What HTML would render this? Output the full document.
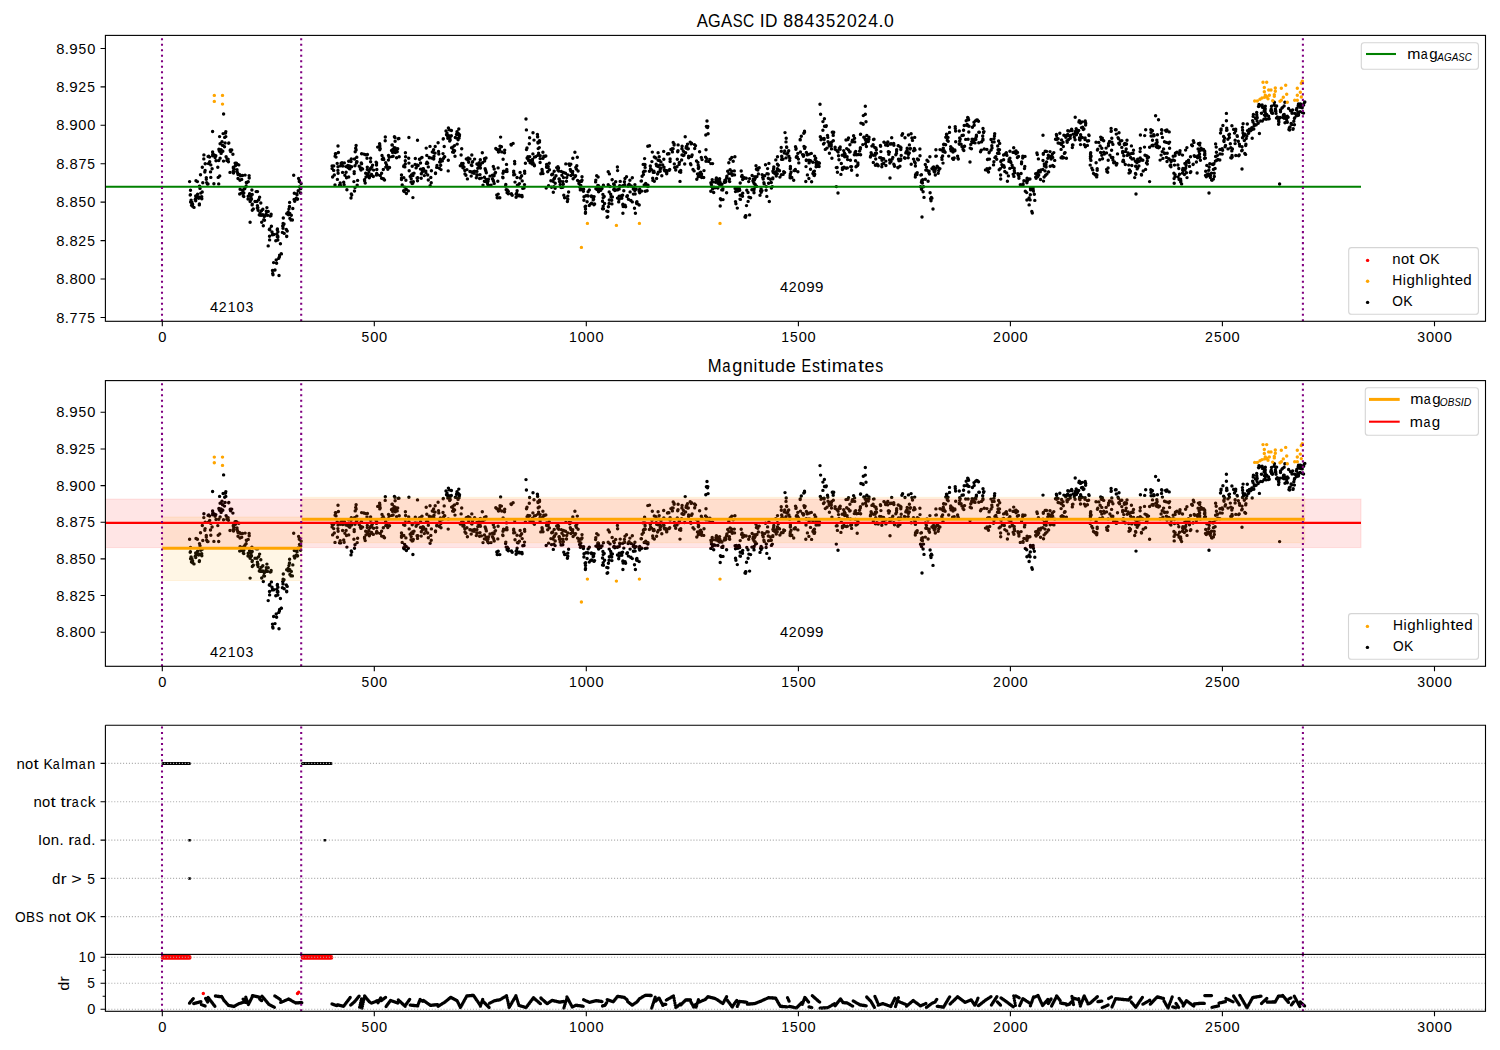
<!DOCTYPE html><html><head><meta charset="utf-8"><style>html,body{margin:0;padding:0;background:#fff;}svg{display:block;}text{font-family:"Liberation Sans",sans-serif;fill:#000;}</style></head><body>
<svg width="1500" height="1050" viewBox="0 0 1500 1050">
<rect width="1500" height="1050" fill="#fff"/>
<defs><clipPath id="c1"><rect x="105.4" y="35.4" width="1380.1" height="285.90000000000003"/></clipPath><clipPath id="c2"><rect x="105.4" y="380.6" width="1380.1" height="285.69999999999993"/></clipPath><clipPath id="c3"><rect x="105.4" y="725.3" width="1380.1" height="229.10000000000002"/></clipPath><clipPath id="c4"><rect x="105.4" y="954.4" width="1380.1" height="56.89999999999998"/></clipPath></defs>
<g font-size="17.50"><text x="696.67" y="26.90" textLength="11.20" lengthAdjust="spacingAndGlyphs">A</text><text x="708.09" y="26.90" textLength="12.65" lengthAdjust="spacingAndGlyphs">G</text><text x="720.99" y="26.90" textLength="11.20" lengthAdjust="spacingAndGlyphs">A</text><text x="732.72" y="26.90" textLength="9.91" lengthAdjust="spacingAndGlyphs">S</text><text x="743.03" y="26.90" textLength="11.18" lengthAdjust="spacingAndGlyphs">C</text><text x="759.83" y="26.90" textLength="4.90" lengthAdjust="spacingAndGlyphs">I</text><text x="764.96" y="26.90" textLength="12.46" lengthAdjust="spacingAndGlyphs">D</text><text x="783.23" y="26.90" textLength="9.88" lengthAdjust="spacingAndGlyphs">8</text><text x="793.83" y="26.90" textLength="9.88" lengthAdjust="spacingAndGlyphs">8</text><text x="804.49" y="26.90" textLength="9.77" lengthAdjust="spacingAndGlyphs">4</text><text x="815.31" y="26.90" textLength="9.39" lengthAdjust="spacingAndGlyphs">3</text><text x="825.91" y="26.90" textLength="9.22" lengthAdjust="spacingAndGlyphs">5</text><text x="836.27" y="26.90" textLength="9.42" lengthAdjust="spacingAndGlyphs">2</text><text x="846.92" y="26.90" textLength="9.77" lengthAdjust="spacingAndGlyphs">0</text><text x="857.48" y="26.90" textLength="9.42" lengthAdjust="spacingAndGlyphs">2</text><text x="868.13" y="26.90" textLength="9.77" lengthAdjust="spacingAndGlyphs">4</text><text x="878.46" y="26.90" textLength="5.01" lengthAdjust="spacingAndGlyphs">.</text><text x="884.03" y="26.90" textLength="9.77" lengthAdjust="spacingAndGlyphs">0</text></g>
<g clip-path="url(#c1)">
<path d="M189.6 181.6h.01M190.2 195.1h.01M190.4 194.7h.01M190.5 190.2h.01M190.6 202.0h.01M191.1 200.1h.01M191.5 202.8h.01M191.5 205.3h.01M191.9 202.1h.01M192.5 203.9h.01M192.6 204.5h.01M192.6 206.2h.01M194.0 207.4h.01M195.2 199.6h.01M195.7 196.0h.01M195.7 200.7h.01M195.7 198.5h.01M196.0 180.7h.01M197.3 195.9h.01M197.4 181.6h.01M197.6 194.2h.01M198.7 198.2h.01M199.3 204.9h.01M199.4 204.0h.01M199.5 186.1h.01M199.5 197.3h.01M200.0 188.4h.01M200.5 174.8h.01M200.8 193.1h.01M201.7 196.7h.01M201.8 198.8h.01M202.2 192.0h.01M202.3 167.2h.01M202.8 182.8h.01M203.8 158.9h.01M203.9 154.9h.01M204.8 172.0h.01M205.1 170.4h.01M205.2 163.8h.01M206.3 179.2h.01M206.3 177.6h.01M206.7 182.6h.01M207.4 184.0h.01M208.0 184.0h.01M208.1 156.5h.01M208.4 163.6h.01M208.7 156.1h.01M209.6 157.1h.01M209.7 161.8h.01M210.5 171.9h.01M210.8 177.4h.01M210.8 164.9h.01M212.1 168.7h.01M212.6 131.5h.01M212.6 152.0h.01M212.7 154.3h.01M212.7 155.8h.01M212.9 154.7h.01M213.3 154.8h.01M213.9 154.7h.01M213.9 183.8h.01M215.1 157.5h.01M215.8 155.7h.01M216.0 160.8h.01M217.8 167.3h.01M218.2 177.4h.01M218.7 183.9h.01M218.8 160.5h.01M218.9 149.2h.01M219.2 150.5h.01M219.5 151.2h.01M219.6 136.6h.01M219.7 176.0h.01M220.1 158.2h.01M220.1 143.8h.01M221.0 149.7h.01M221.1 153.4h.01M222.0 141.8h.01M222.6 145.4h.01M222.8 151.2h.01M223.1 133.6h.01M223.5 161.1h.01M223.6 114.0h.01M224.5 146.8h.01M224.7 137.4h.01M225.1 143.0h.01M225.5 133.0h.01M225.8 131.6h.01M225.8 136.6h.01M226.1 156.7h.01M226.9 160.6h.01M227.0 158.6h.01M228.1 159.1h.01M228.2 161.2h.01M228.4 161.7h.01M228.7 143.2h.01M228.8 142.9h.01M230.0 172.4h.01M230.2 150.4h.01M230.3 150.0h.01M230.6 151.6h.01M231.7 150.0h.01M232.9 154.2h.01M233.3 171.3h.01M233.3 167.2h.01M233.4 168.2h.01M233.5 173.0h.01M233.8 171.9h.01M233.9 169.0h.01M235.1 163.1h.01M235.4 165.8h.01M236.4 163.1h.01M237.0 169.8h.01M237.1 171.5h.01M237.7 173.2h.01M238.0 178.5h.01M238.0 174.6h.01M238.2 164.6h.01M238.8 164.9h.01M239.7 194.0h.01M239.8 174.7h.01M240.0 180.3h.01M240.1 189.3h.01M240.5 175.7h.01M241.5 193.1h.01M241.7 179.4h.01M242.5 175.5h.01M242.8 190.7h.01M243.0 189.9h.01M243.3 195.9h.01M243.8 196.6h.01M243.8 193.0h.01M244.7 188.7h.01M245.1 187.6h.01M245.1 175.1h.01M246.1 186.3h.01M246.3 182.5h.01M246.5 182.9h.01M248.0 199.1h.01M248.2 181.7h.01M248.2 196.2h.01M249.1 175.6h.01M249.2 178.0h.01M249.6 193.6h.01M249.7 195.4h.01M250.1 222.3h.01M250.1 201.6h.01M250.7 200.3h.01M251.0 196.9h.01M251.1 198.6h.01M251.5 199.1h.01M251.9 190.0h.01M252.1 204.9h.01M252.2 194.4h.01M252.3 204.1h.01M252.3 210.2h.01M252.4 209.9h.01M253.3 208.9h.01M255.0 201.5h.01M256.2 191.6h.01M256.9 201.5h.01M257.3 208.1h.01M257.4 205.6h.01M257.5 191.6h.01M257.9 207.6h.01M258.1 210.2h.01M258.7 199.8h.01M259.3 214.9h.01M259.6 197.2h.01M260.0 213.0h.01M260.2 215.3h.01M260.8 203.0h.01M261.5 210.7h.01M261.7 215.3h.01M261.7 222.2h.01M262.7 209.6h.01M262.8 214.7h.01M262.8 209.2h.01M263.3 225.8h.01M263.8 219.8h.01M264.3 216.6h.01M264.5 220.2h.01M264.8 215.9h.01M266.1 214.1h.01M266.3 211.3h.01M266.9 207.6h.01M267.5 215.2h.01M268.2 211.4h.01M268.2 245.9h.01M269.3 229.6h.01M269.5 236.3h.01M269.6 239.9h.01M269.7 229.8h.01M269.7 229.0h.01M270.3 216.0h.01M270.9 215.7h.01M271.1 214.3h.01M271.4 226.2h.01M272.0 231.9h.01M272.4 234.7h.01M272.5 270.5h.01M272.7 273.5h.01M273.0 274.7h.01M273.6 262.6h.01M273.9 234.5h.01M275.8 240.8h.01M276.2 259.9h.01M276.6 263.3h.01M276.9 233.9h.01M277.3 229.8h.01M277.3 236.8h.01M277.4 228.9h.01M277.7 236.0h.01M277.8 240.0h.01M277.9 236.9h.01M277.9 231.8h.01M278.8 258.3h.01M279.4 256.8h.01M279.6 255.1h.01M280.4 243.7h.01M281.2 253.7h.01M281.4 253.9h.01M282.4 232.4h.01M282.7 226.0h.01M283.0 228.3h.01M283.1 223.5h.01M283.2 225.5h.01M283.3 218.0h.01M284.0 224.0h.01M284.2 233.4h.01M286.3 229.5h.01M286.7 236.1h.01M286.7 236.6h.01M286.7 213.6h.01M287.2 213.9h.01M287.2 231.0h.01M288.1 212.1h.01M288.5 214.7h.01M288.9 212.9h.01M288.9 209.1h.01M289.4 207.1h.01M289.5 206.5h.01M289.6 202.4h.01M289.8 213.4h.01M289.9 218.4h.01M291.0 220.0h.01M291.3 215.3h.01M292.4 220.0h.01M292.8 208.5h.01M293.7 175.2h.01M294.1 199.4h.01M294.3 193.3h.01M294.7 200.2h.01M294.7 201.3h.01M296.1 199.0h.01M296.2 198.5h.01M296.3 198.3h.01M296.9 193.6h.01M297.0 194.8h.01M297.5 199.3h.01M297.6 199.0h.01M298.2 190.7h.01M298.6 178.5h.01M299.3 181.6h.01M299.4 180.5h.01M299.5 187.0h.01M300.6 193.0h.01M300.7 188.8h.01M301.1 183.6h.01M332.1 165.9h.01M332.1 168.6h.01M332.6 177.0h.01M333.7 165.9h.01M333.7 170.4h.01M334.3 175.0h.01M335.0 184.9h.01M335.1 156.3h.01M335.4 153.7h.01M335.8 153.7h.01M336.0 157.1h.01M337.2 163.4h.01M337.4 179.4h.01M337.9 170.4h.01M338.0 166.7h.01M338.0 146.0h.01M338.1 173.3h.01M338.4 152.5h.01M339.5 185.3h.01M340.2 182.9h.01M340.5 185.4h.01M340.7 165.8h.01M341.1 163.2h.01M341.8 164.9h.01M342.0 162.8h.01M342.6 172.4h.01M342.8 166.1h.01M343.7 182.3h.01M344.1 184.8h.01M344.3 162.9h.01M344.9 175.3h.01M346.0 166.6h.01M346.1 172.3h.01M346.5 177.8h.01M346.9 189.8h.01M347.8 165.5h.01M348.0 167.5h.01M348.7 177.0h.01M348.7 166.6h.01M348.7 161.2h.01M349.2 168.5h.01M349.6 165.9h.01M349.8 168.9h.01M350.5 160.6h.01M351.0 161.6h.01M351.3 159.0h.01M351.3 193.9h.01M351.6 166.7h.01M351.7 195.0h.01M353.9 181.6h.01M354.2 173.5h.01M354.2 171.6h.01M354.5 159.0h.01M354.5 191.0h.01M355.0 187.4h.01M355.0 165.8h.01M355.2 151.8h.01M355.7 148.2h.01M356.1 145.5h.01M356.1 149.9h.01M356.4 163.0h.01M356.7 161.8h.01M356.8 157.3h.01M357.0 161.7h.01M357.2 185.1h.01M357.6 180.4h.01M359.2 166.2h.01M360.4 167.9h.01M360.4 168.9h.01M361.0 170.1h.01M361.3 163.0h.01M361.3 163.1h.01M361.5 168.3h.01M361.6 153.7h.01M361.6 163.7h.01M362.6 168.9h.01M363.8 154.1h.01M364.5 179.6h.01M364.6 180.8h.01M365.2 183.0h.01M365.6 154.7h.01M365.7 173.3h.01M366.0 177.0h.01M367.0 158.2h.01M367.3 169.4h.01M367.3 167.1h.01M367.4 154.5h.01M367.6 174.1h.01M367.7 175.7h.01M368.9 172.3h.01M369.3 177.8h.01M370.2 175.8h.01M370.3 169.3h.01M370.6 158.2h.01M370.6 161.7h.01M370.7 168.1h.01M371.2 168.1h.01M371.4 175.2h.01M371.6 174.4h.01M371.8 166.9h.01M372.6 165.1h.01M373.3 176.5h.01M373.6 170.1h.01M376.1 162.1h.01M376.4 175.1h.01M376.5 165.0h.01M376.6 163.1h.01M376.7 173.5h.01M376.8 169.5h.01M377.5 174.7h.01M377.7 147.1h.01M379.6 143.7h.01M379.8 146.7h.01M379.8 149.7h.01M379.8 145.3h.01M380.2 148.8h.01M380.2 175.5h.01M381.6 178.3h.01M381.6 173.2h.01M382.0 155.5h.01M382.3 159.2h.01M383.2 158.0h.01M383.3 169.5h.01M383.5 178.7h.01M383.8 159.5h.01M384.1 179.7h.01M384.5 180.0h.01M385.2 140.8h.01M385.3 137.0h.01M385.7 162.8h.01M385.8 167.1h.01M386.5 164.6h.01M386.6 166.4h.01M386.9 166.2h.01M387.8 169.2h.01M388.4 160.1h.01M388.5 155.5h.01M389.2 157.3h.01M389.5 167.5h.01M391.5 150.6h.01M391.6 150.4h.01M391.9 156.6h.01M392.0 145.0h.01M392.3 144.9h.01M392.6 152.4h.01M392.8 149.4h.01M393.1 156.2h.01M393.8 149.8h.01M394.2 147.6h.01M394.4 136.7h.01M394.9 137.5h.01M395.1 141.3h.01M395.2 147.9h.01M395.3 152.6h.01M395.5 150.7h.01M396.5 149.2h.01M396.6 157.8h.01M396.8 151.0h.01M397.2 151.8h.01M397.7 148.7h.01M398.2 138.7h.01M398.9 138.5h.01M399.2 156.8h.01M401.5 179.6h.01M401.5 174.9h.01M401.5 178.1h.01M402.2 184.9h.01M403.7 166.4h.01M403.7 190.6h.01M403.7 190.9h.01M403.8 177.6h.01M403.9 165.6h.01M404.2 191.6h.01M404.7 187.1h.01M404.8 166.9h.01M405.3 163.9h.01M405.3 160.8h.01M405.4 152.7h.01M405.6 156.7h.01M405.9 180.2h.01M406.2 189.2h.01M406.4 193.5h.01M408.3 190.9h.01M408.7 158.2h.01M408.9 163.1h.01M408.9 137.5h.01M409.2 170.7h.01M410.2 176.4h.01M411.0 182.1h.01M411.2 178.7h.01M411.4 174.9h.01M412.1 183.5h.01M412.2 166.3h.01M412.8 183.2h.01M412.8 173.7h.01M412.9 175.6h.01M412.9 197.6h.01M413.3 181.8h.01M414.0 173.2h.01M415.1 164.4h.01M415.3 158.5h.01M416.1 167.9h.01M416.2 167.8h.01M417.1 164.9h.01M417.1 177.9h.01M417.5 180.7h.01M417.5 140.3h.01M417.8 177.8h.01M418.1 165.5h.01M419.4 159.3h.01M419.7 159.2h.01M420.5 169.1h.01M420.5 163.0h.01M421.2 178.2h.01M421.3 173.7h.01M421.6 157.8h.01M422.0 157.4h.01M422.3 171.9h.01M422.3 169.8h.01M422.9 168.6h.01M423.4 168.8h.01M423.8 170.2h.01M424.3 175.6h.01M425.8 171.1h.01M425.8 172.6h.01M426.2 148.1h.01M426.4 163.6h.01M426.8 155.4h.01M427.0 162.2h.01M427.7 175.0h.01M427.7 163.3h.01M428.3 166.9h.01M428.3 180.0h.01M429.3 157.8h.01M429.4 157.5h.01M430.0 146.4h.01M430.1 185.8h.01M430.8 177.5h.01M431.2 182.7h.01M431.4 170.7h.01M431.5 158.1h.01M432.3 151.9h.01M433.2 152.2h.01M433.6 149.7h.01M433.7 159.0h.01M433.7 158.4h.01M434.0 156.3h.01M435.1 153.1h.01M435.2 146.5h.01M435.5 173.0h.01M435.5 173.6h.01M436.7 167.4h.01M436.8 167.2h.01M437.0 165.4h.01M438.1 142.8h.01M438.5 151.5h.01M438.8 154.0h.01M439.4 168.2h.01M439.7 162.0h.01M440.3 161.9h.01M440.4 159.3h.01M440.7 165.2h.01M441.0 169.6h.01M442.3 160.9h.01M443.0 153.6h.01M443.2 139.1h.01M443.3 138.8h.01M443.6 158.3h.01M444.2 146.5h.01M444.3 156.8h.01M444.7 156.8h.01M446.0 130.9h.01M446.5 134.8h.01M447.0 133.3h.01M447.7 136.4h.01M447.8 138.3h.01M448.2 170.9h.01M448.3 160.2h.01M448.4 128.0h.01M448.9 135.7h.01M449.2 129.8h.01M449.7 141.1h.01M450.0 137.7h.01M450.2 140.1h.01M451.3 135.7h.01M451.4 130.5h.01M451.6 147.8h.01M452.6 152.1h.01M452.9 147.0h.01M453.5 150.1h.01M453.6 152.3h.01M454.3 150.7h.01M454.5 145.6h.01M454.6 150.8h.01M455.0 156.2h.01M455.3 137.5h.01M456.3 137.9h.01M456.5 134.4h.01M456.8 133.9h.01M457.0 131.7h.01M457.2 144.1h.01M458.1 139.8h.01M458.3 133.5h.01M458.8 129.0h.01M459.1 138.0h.01M459.4 135.9h.01M459.5 134.7h.01M460.3 165.7h.01M460.4 165.6h.01M461.1 155.0h.01M461.7 148.8h.01M461.7 163.5h.01M462.5 166.1h.01M462.9 167.8h.01M462.9 165.8h.01M463.0 166.5h.01M463.1 163.5h.01M464.0 167.1h.01M464.8 170.5h.01M465.0 173.9h.01M465.9 175.2h.01M466.3 158.9h.01M466.9 169.6h.01M467.4 159.1h.01M467.4 178.9h.01M467.8 159.2h.01M467.8 159.9h.01M468.2 158.0h.01M468.7 162.3h.01M469.9 158.9h.01M469.9 171.5h.01M470.9 171.8h.01M471.2 176.1h.01M471.3 165.0h.01M471.8 155.0h.01M471.9 165.6h.01M472.5 162.1h.01M472.6 161.6h.01M472.8 172.9h.01M473.2 171.8h.01M474.0 173.2h.01M474.5 171.2h.01M474.6 159.1h.01M476.3 177.7h.01M476.9 171.4h.01M476.9 164.0h.01M477.0 174.6h.01M477.0 175.4h.01M477.8 168.3h.01M477.9 164.7h.01M479.1 162.7h.01M479.3 163.3h.01M479.6 178.5h.01M479.8 167.0h.01M480.0 174.6h.01M480.3 159.8h.01M480.3 165.0h.01M480.4 168.0h.01M481.3 178.1h.01M482.3 152.7h.01M482.5 162.8h.01M483.0 185.1h.01M484.4 181.2h.01M484.4 177.2h.01M484.5 158.8h.01M484.6 161.1h.01M484.8 159.5h.01M485.1 168.8h.01M485.5 169.9h.01M485.9 171.2h.01M485.9 181.5h.01M486.0 157.9h.01M486.3 172.8h.01M486.5 179.5h.01M487.5 183.5h.01M487.8 184.6h.01M488.0 181.2h.01M488.4 179.2h.01M488.5 185.2h.01M490.0 176.1h.01M491.0 185.1h.01M492.4 178.8h.01M492.5 175.3h.01M493.2 180.2h.01M493.3 166.4h.01M493.4 180.9h.01M493.6 181.4h.01M494.1 175.8h.01M494.2 169.0h.01M494.2 183.4h.01M495.0 173.2h.01M495.5 172.5h.01M495.8 148.5h.01M496.8 149.5h.01M496.8 194.9h.01M497.2 197.7h.01M497.7 197.7h.01M497.8 181.2h.01M498.1 167.9h.01M498.2 194.1h.01M498.5 152.0h.01M499.5 149.5h.01M499.8 197.7h.01M500.0 146.3h.01M500.6 137.1h.01M501.4 146.8h.01M501.7 151.9h.01M502.7 177.1h.01M502.9 177.7h.01M503.0 177.7h.01M503.0 173.3h.01M503.1 159.3h.01M503.5 171.1h.01M504.5 152.7h.01M504.7 150.1h.01M505.3 171.3h.01M505.6 186.0h.01M505.8 184.5h.01M506.2 189.8h.01M506.5 164.4h.01M506.8 169.5h.01M507.0 171.5h.01M507.1 192.7h.01M507.3 189.9h.01M507.8 190.9h.01M508.3 191.4h.01M508.3 193.7h.01M511.0 144.5h.01M511.3 145.1h.01M511.4 193.8h.01M511.6 194.4h.01M512.2 195.3h.01M513.1 143.4h.01M513.7 171.1h.01M513.7 174.9h.01M513.7 172.5h.01M514.6 161.4h.01M514.7 163.8h.01M514.7 174.6h.01M515.0 182.1h.01M516.1 194.2h.01M516.1 197.3h.01M516.7 193.3h.01M517.0 177.5h.01M517.1 190.8h.01M517.4 185.1h.01M518.1 185.4h.01M518.9 195.7h.01M519.4 195.9h.01M519.4 195.2h.01M519.4 183.6h.01M520.1 172.4h.01M520.3 178.0h.01M521.6 176.0h.01M521.6 175.7h.01M521.9 195.5h.01M522.1 196.8h.01M522.2 180.9h.01M522.8 188.4h.01M524.0 188.1h.01M524.5 184.6h.01M524.6 171.2h.01M524.7 173.2h.01M525.4 163.3h.01M526.4 129.9h.01M526.5 149.6h.01M527.0 147.9h.01M527.1 158.0h.01M527.5 158.6h.01M527.9 156.7h.01M528.5 160.4h.01M529.3 143.7h.01M529.6 137.8h.01M529.7 156.8h.01M529.7 160.5h.01M530.1 162.8h.01M532.2 164.0h.01M532.2 164.0h.01M532.3 160.8h.01M532.5 159.4h.01M532.9 153.9h.01M533.0 162.7h.01M533.0 132.8h.01M534.0 140.1h.01M534.2 164.6h.01M534.4 165.7h.01M534.5 157.1h.01M535.6 156.8h.01M537.4 134.4h.01M537.6 136.4h.01M537.6 136.9h.01M537.9 155.2h.01M537.9 142.2h.01M538.0 143.1h.01M538.2 148.6h.01M538.6 153.1h.01M539.3 147.6h.01M539.5 140.6h.01M539.5 142.0h.01M540.1 162.5h.01M540.1 158.6h.01M540.2 155.7h.01M540.8 173.8h.01M542.0 169.5h.01M542.2 170.1h.01M542.2 171.7h.01M542.9 152.3h.01M542.9 158.4h.01M543.0 173.6h.01M543.8 156.3h.01M544.6 156.5h.01M545.8 156.0h.01M546.2 188.1h.01M546.6 167.3h.01M546.6 166.5h.01M546.6 164.5h.01M547.4 166.9h.01M547.7 171.7h.01M548.0 167.6h.01M548.2 166.4h.01M548.6 185.6h.01M549.2 163.3h.01M549.4 169.7h.01M550.9 180.8h.01M551.5 187.2h.01M551.7 174.7h.01M552.2 174.3h.01M552.7 174.3h.01M553.0 181.3h.01M553.3 192.2h.01M553.8 179.1h.01M553.9 186.8h.01M554.2 171.2h.01M554.3 178.8h.01M554.6 177.7h.01M555.1 188.2h.01M555.2 183.3h.01M556.0 175.8h.01M556.7 167.6h.01M557.8 170.0h.01M557.9 166.7h.01M558.1 170.1h.01M558.5 168.0h.01M558.7 171.0h.01M559.0 178.9h.01M559.3 178.9h.01M559.5 181.6h.01M560.2 184.5h.01M560.4 181.2h.01M561.1 187.6h.01M561.3 171.4h.01M561.9 175.2h.01M562.8 187.3h.01M563.0 181.6h.01M563.3 184.2h.01M563.5 177.6h.01M563.5 172.4h.01M563.8 195.3h.01M564.6 197.7h.01M565.0 197.6h.01M565.5 173.2h.01M565.8 163.9h.01M566.5 181.3h.01M566.7 177.6h.01M567.4 201.5h.01M567.8 199.3h.01M567.8 174.9h.01M567.8 196.1h.01M568.6 192.0h.01M569.1 164.0h.01M569.7 165.4h.01M570.3 169.5h.01M570.8 171.1h.01M570.8 164.2h.01M570.9 171.3h.01M571.0 175.5h.01M572.4 172.9h.01M572.7 171.5h.01M572.7 174.3h.01M572.8 158.2h.01M573.1 178.7h.01M574.9 152.2h.01M574.9 176.1h.01M575.0 176.8h.01M575.1 176.6h.01M575.6 175.7h.01M575.8 167.4h.01M576.3 169.0h.01M576.8 165.8h.01M577.3 157.3h.01M577.6 180.4h.01M578.1 171.0h.01M578.8 181.5h.01M578.9 183.6h.01M579.6 187.0h.01M580.1 181.4h.01M580.3 189.9h.01M580.8 185.4h.01M581.1 189.0h.01M581.4 181.4h.01M582.0 180.3h.01M582.0 176.7h.01M583.0 190.2h.01M583.4 191.3h.01M583.6 189.3h.01M583.9 200.2h.01M584.0 196.8h.01M585.1 206.7h.01M585.4 213.3h.01M585.5 209.0h.01M585.5 212.2h.01M585.6 206.2h.01M586.0 195.7h.01M587.1 201.7h.01M587.7 195.6h.01M588.1 191.7h.01M588.1 196.0h.01M589.3 189.9h.01M589.3 205.5h.01M590.4 204.1h.01M591.4 195.9h.01M591.5 203.3h.01M591.6 196.7h.01M592.5 196.5h.01M592.5 196.8h.01M593.2 199.9h.01M593.6 199.2h.01M593.7 204.3h.01M593.9 204.8h.01M594.1 196.6h.01M594.6 204.0h.01M595.6 181.9h.01M595.8 180.1h.01M595.9 188.8h.01M596.7 175.7h.01M597.0 189.5h.01M597.8 186.7h.01M597.8 185.5h.01M597.9 186.3h.01M598.1 177.0h.01M598.5 185.8h.01M598.6 191.8h.01M599.3 188.4h.01M600.8 190.3h.01M602.0 188.5h.01M602.0 188.6h.01M602.5 208.7h.01M602.5 201.2h.01M602.9 194.4h.01M603.2 197.7h.01M603.2 206.1h.01M603.4 208.8h.01M603.4 185.3h.01M604.2 196.5h.01M604.6 203.5h.01M606.8 211.1h.01M607.1 217.3h.01M607.7 216.7h.01M607.9 211.5h.01M608.2 184.7h.01M608.2 171.8h.01M608.4 206.8h.01M609.1 203.5h.01M609.2 191.9h.01M609.3 200.0h.01M609.4 173.9h.01M610.0 186.5h.01M610.7 194.3h.01M611.1 196.9h.01M611.7 200.2h.01M611.9 203.9h.01M612.1 179.8h.01M612.2 179.6h.01M612.4 196.9h.01M613.6 183.9h.01M613.7 189.6h.01M614.2 188.8h.01M614.3 185.0h.01M614.8 190.5h.01M615.7 181.8h.01M617.3 189.7h.01M617.4 167.0h.01M617.5 189.9h.01M617.5 198.1h.01M617.6 170.6h.01M618.7 201.9h.01M619.1 199.4h.01M619.2 196.2h.01M619.2 189.1h.01M619.7 185.8h.01M619.9 186.5h.01M620.2 181.4h.01M621.0 196.0h.01M621.8 198.3h.01M622.6 195.2h.01M622.8 185.7h.01M622.8 204.8h.01M622.9 204.3h.01M622.9 213.2h.01M623.2 206.5h.01M623.8 190.8h.01M624.4 181.7h.01M624.7 184.8h.01M625.0 178.5h.01M625.1 205.3h.01M625.2 206.1h.01M625.6 206.7h.01M626.5 176.8h.01M626.8 196.5h.01M627.4 195.7h.01M628.1 186.1h.01M628.4 199.3h.01M628.5 185.3h.01M629.1 184.3h.01M629.9 180.3h.01M630.1 191.9h.01M630.8 200.6h.01M630.9 200.5h.01M631.2 186.0h.01M632.3 177.8h.01M632.3 201.9h.01M633.3 189.1h.01M633.4 194.1h.01M633.7 187.6h.01M634.5 208.2h.01M634.8 190.5h.01M634.9 184.8h.01M635.1 194.0h.01M635.4 213.2h.01M636.2 189.3h.01M636.5 202.4h.01M636.7 203.6h.01M636.9 201.7h.01M637.7 203.9h.01M639.2 205.0h.01M639.2 191.3h.01M639.4 190.8h.01M639.7 192.8h.01M639.7 189.2h.01M641.1 181.1h.01M641.4 181.0h.01M641.8 191.1h.01M642.1 176.3h.01M643.2 164.4h.01M643.4 174.6h.01M643.4 172.1h.01M644.1 171.1h.01M644.2 185.0h.01M644.6 158.6h.01M644.8 164.5h.01M645.0 164.7h.01M645.1 167.4h.01M645.2 171.1h.01M645.3 191.2h.01M645.7 183.5h.01M646.5 185.5h.01M647.1 190.8h.01M647.7 185.2h.01M647.8 146.3h.01M647.9 186.6h.01M648.0 185.2h.01M649.4 171.3h.01M649.5 145.8h.01M650.3 166.0h.01M650.6 168.8h.01M651.5 169.8h.01M651.9 161.6h.01M652.3 152.1h.01M652.7 178.2h.01M652.9 180.4h.01M653.3 172.4h.01M653.9 171.3h.01M654.2 172.4h.01M654.3 181.3h.01M654.3 157.0h.01M655.8 158.0h.01M656.2 164.3h.01M656.6 165.8h.01M656.6 178.5h.01M657.6 174.0h.01M658.0 166.4h.01M658.1 152.7h.01M658.1 160.2h.01M658.3 172.3h.01M659.2 156.8h.01M659.5 160.4h.01M659.6 165.1h.01M660.2 171.3h.01M660.2 169.0h.01M660.9 168.2h.01M660.9 168.3h.01M660.9 161.9h.01M661.8 175.8h.01M662.7 165.0h.01M663.7 151.4h.01M663.8 159.3h.01M664.0 167.1h.01M664.3 170.0h.01M664.6 170.7h.01M665.1 170.3h.01M666.3 172.1h.01M666.5 172.3h.01M666.7 173.8h.01M666.7 170.7h.01M666.8 172.8h.01M667.5 154.0h.01M668.3 153.7h.01M668.9 153.7h.01M669.1 170.3h.01M669.3 170.3h.01M669.7 169.5h.01M670.1 161.5h.01M670.1 158.9h.01M670.9 149.4h.01M672.1 148.7h.01M672.4 151.9h.01M672.4 148.9h.01M673.1 148.7h.01M673.2 142.4h.01M674.1 145.0h.01M674.1 144.0h.01M674.3 163.9h.01M674.7 167.5h.01M675.7 170.0h.01M677.0 166.7h.01M677.3 159.2h.01M677.7 151.7h.01M677.8 151.0h.01M678.0 150.7h.01M678.1 144.9h.01M679.1 164.4h.01M679.2 162.6h.01M679.4 162.5h.01M679.5 171.7h.01M680.0 181.4h.01M680.4 171.2h.01M680.7 172.2h.01M680.7 170.4h.01M681.6 160.0h.01M681.9 148.8h.01M682.0 154.9h.01M682.1 146.2h.01M682.7 154.9h.01M683.3 155.6h.01M683.4 151.3h.01M683.9 155.2h.01M684.7 164.0h.01M685.2 136.8h.01M685.6 152.8h.01M686.1 148.1h.01M686.3 147.0h.01M686.4 146.5h.01M686.8 146.4h.01M687.5 144.1h.01M687.6 148.8h.01M688.3 148.8h.01M688.6 156.1h.01M688.6 157.7h.01M688.7 157.7h.01M690.2 142.1h.01M690.5 163.7h.01M690.9 164.7h.01M691.2 143.9h.01M691.3 143.7h.01M691.5 143.2h.01M691.6 156.5h.01M692.1 155.0h.01M693.0 169.4h.01M694.1 170.9h.01M694.5 144.6h.01M694.7 148.5h.01M695.5 145.7h.01M696.5 161.0h.01M696.8 179.2h.01M697.5 173.9h.01M697.9 162.4h.01M698.2 165.3h.01M698.3 176.8h.01M698.3 168.2h.01M698.4 168.5h.01M698.7 167.3h.01M699.6 151.8h.01M699.8 175.5h.01M700.0 172.7h.01M700.1 174.8h.01M700.3 176.2h.01M700.6 173.2h.01M700.7 172.1h.01M701.3 157.4h.01M701.4 175.1h.01M701.5 173.9h.01M701.7 177.5h.01M702.0 159.6h.01M703.7 177.5h.01M704.0 170.6h.01M705.5 157.1h.01M705.8 135.0h.01M706.0 161.2h.01M706.0 149.7h.01M706.4 126.4h.01M706.6 126.9h.01M706.7 158.6h.01M707.5 127.5h.01M707.8 126.4h.01M708.1 133.7h.01M708.5 161.4h.01M709.9 159.4h.01M710.8 163.6h.01M710.8 191.2h.01M710.9 182.7h.01M711.3 184.6h.01M711.5 186.4h.01M712.1 182.3h.01M712.2 179.8h.01M712.6 188.9h.01M712.6 163.6h.01M712.7 182.1h.01M713.7 192.5h.01M713.9 187.3h.01M715.0 187.8h.01M715.6 182.3h.01M715.9 179.8h.01M716.1 181.7h.01M716.4 177.9h.01M717.3 179.6h.01M717.8 188.0h.01M718.0 183.3h.01M718.2 182.5h.01M719.5 184.4h.01M719.6 178.8h.01M719.8 181.5h.01M720.1 182.5h.01M720.2 206.0h.01M720.4 198.8h.01M721.0 199.8h.01M721.8 189.9h.01M721.9 184.4h.01M722.7 190.1h.01M722.9 188.7h.01M723.0 199.6h.01M724.3 182.3h.01M724.9 180.2h.01M725.0 182.2h.01M725.4 180.6h.01M725.6 181.9h.01M726.5 178.2h.01M726.6 192.7h.01M726.8 177.1h.01M726.9 176.1h.01M727.7 171.2h.01M728.8 162.7h.01M728.9 173.6h.01M729.2 181.0h.01M729.4 178.9h.01M729.7 181.6h.01M730.1 169.7h.01M730.2 159.2h.01M730.4 159.1h.01M731.1 173.4h.01M731.7 171.1h.01M731.8 157.4h.01M732.2 175.2h.01M732.2 174.2h.01M733.2 161.2h.01M734.3 170.9h.01M734.5 174.9h.01M734.9 156.8h.01M735.1 188.4h.01M735.5 191.6h.01M735.5 201.6h.01M735.9 203.7h.01M736.3 188.0h.01M736.4 189.6h.01M737.3 208.1h.01M737.8 191.1h.01M737.9 188.6h.01M739.0 188.0h.01M739.3 188.6h.01M739.7 190.3h.01M740.0 199.1h.01M740.2 195.2h.01M740.2 183.0h.01M740.4 199.4h.01M741.2 171.0h.01M741.6 176.5h.01M742.1 175.4h.01M742.5 196.2h.01M742.7 193.3h.01M742.7 179.5h.01M743.8 178.6h.01M744.3 177.6h.01M745.5 217.3h.01M745.6 215.6h.01M745.9 215.7h.01M746.2 178.2h.01M746.5 205.6h.01M746.8 190.2h.01M748.0 192.5h.01M748.1 201.4h.01M748.7 181.6h.01M748.9 197.1h.01M749.6 214.9h.01M749.6 178.6h.01M750.6 197.7h.01M751.9 189.8h.01M752.1 175.5h.01M752.9 180.7h.01M753.2 181.5h.01M753.5 178.9h.01M753.8 190.4h.01M754.0 192.7h.01M754.0 183.2h.01M754.1 189.0h.01M754.4 180.0h.01M754.8 184.3h.01M755.0 176.8h.01M755.1 178.6h.01M755.2 184.5h.01M755.7 186.6h.01M756.0 165.8h.01M756.4 169.2h.01M756.5 186.2h.01M756.9 176.6h.01M757.7 168.6h.01M757.8 170.0h.01M758.4 173.9h.01M759.2 167.7h.01M760.0 195.3h.01M760.6 190.9h.01M761.1 189.0h.01M761.2 192.3h.01M761.7 190.6h.01M762.0 190.6h.01M762.1 174.6h.01M762.7 177.5h.01M763.2 179.0h.01M763.9 182.7h.01M764.2 183.9h.01M764.7 175.7h.01M765.5 164.8h.01M766.1 190.2h.01M766.1 190.1h.01M766.3 186.6h.01M766.8 196.4h.01M767.0 173.6h.01M767.6 168.6h.01M768.2 174.0h.01M768.3 178.2h.01M768.6 183.2h.01M768.9 163.4h.01M769.3 201.5h.01M770.3 179.2h.01M771.1 182.5h.01M771.3 182.6h.01M771.4 188.1h.01M772.3 186.6h.01M772.8 178.7h.01M772.8 177.9h.01M772.9 171.3h.01M773.3 172.4h.01M773.6 169.0h.01M773.8 167.0h.01M774.5 173.2h.01M775.8 159.9h.01M776.1 171.6h.01M776.2 175.1h.01M776.3 176.1h.01M777.2 173.8h.01M777.4 168.7h.01M777.4 164.3h.01M777.5 156.8h.01M778.3 165.3h.01M779.1 170.2h.01M779.5 170.7h.01M779.9 177.1h.01M781.2 147.4h.01M781.3 151.2h.01M781.4 174.8h.01M781.6 159.4h.01M781.7 156.1h.01M781.8 156.8h.01M782.9 159.2h.01M783.1 174.4h.01M783.7 171.8h.01M784.3 153.1h.01M784.6 172.4h.01M784.7 150.9h.01M785.0 132.6h.01M786.0 157.9h.01M786.0 141.9h.01M786.2 138.3h.01M786.6 147.0h.01M786.7 147.4h.01M786.7 154.1h.01M787.8 152.7h.01M788.7 150.8h.01M788.9 156.2h.01M789.7 160.5h.01M789.8 158.2h.01M790.1 177.8h.01M790.2 176.2h.01M790.2 175.8h.01M790.3 174.1h.01M790.3 168.8h.01M790.4 168.0h.01M790.4 166.5h.01M790.9 177.7h.01M791.0 172.3h.01M791.8 177.4h.01M793.7 180.3h.01M794.1 170.6h.01M795.1 170.5h.01M795.3 169.4h.01M795.5 146.8h.01M795.9 149.2h.01M796.1 148.4h.01M796.3 157.3h.01M796.7 156.5h.01M797.3 156.9h.01M797.8 153.4h.01M797.9 171.8h.01M798.4 159.1h.01M798.8 162.9h.01M800.2 139.4h.01M800.2 139.9h.01M800.4 152.0h.01M801.3 136.2h.01M802.6 154.6h.01M803.4 156.3h.01M803.6 155.0h.01M803.8 133.2h.01M804.0 146.4h.01M804.5 131.3h.01M804.5 132.3h.01M804.6 148.4h.01M805.1 147.1h.01M805.8 181.5h.01M806.0 166.6h.01M806.3 160.5h.01M806.3 159.9h.01M806.4 152.4h.01M807.2 154.9h.01M807.4 174.9h.01M808.9 178.5h.01M809.0 160.3h.01M809.1 162.9h.01M809.4 154.1h.01M810.5 169.2h.01M810.5 160.8h.01M811.3 153.4h.01M811.6 181.7h.01M812.8 162.2h.01M812.9 173.5h.01M813.6 171.8h.01M813.9 175.3h.01M814.3 175.5h.01M814.4 171.1h.01M814.6 156.1h.01M814.7 174.2h.01M815.2 159.6h.01M815.7 158.3h.01M816.0 162.7h.01M816.1 166.7h.01M816.3 164.6h.01M816.7 161.6h.01M817.2 162.6h.01M818.0 165.1h.01M818.0 166.3h.01M818.9 162.6h.01M819.1 166.5h.01M819.4 163.2h.01M820.3 136.7h.01M821.0 139.7h.01M821.3 138.5h.01M822.9 121.6h.01M822.9 130.3h.01M823.5 144.1h.01M824.1 138.7h.01M824.1 139.4h.01M824.1 138.4h.01M824.2 143.1h.01M824.4 118.8h.01M824.5 126.3h.01M825.3 149.4h.01M826.0 126.5h.01M826.3 125.7h.01M827.0 148.1h.01M827.5 135.4h.01M827.8 137.4h.01M828.0 141.8h.01M829.1 143.4h.01M829.2 145.2h.01M829.2 142.9h.01M829.4 153.2h.01M829.5 145.9h.01M831.2 145.9h.01M831.2 144.8h.01M831.5 148.9h.01M831.6 142.1h.01M831.9 158.3h.01M832.3 132.2h.01M832.8 132.4h.01M832.8 132.3h.01M833.2 133.4h.01M833.2 135.4h.01M833.3 140.7h.01M833.7 132.3h.01M835.1 147.3h.01M835.1 149.2h.01M836.3 186.6h.01M836.3 167.6h.01M837.0 150.6h.01M837.1 167.5h.01M837.4 172.3h.01M837.9 151.7h.01M838.1 152.1h.01M838.5 155.7h.01M839.0 159.8h.01M839.3 148.3h.01M840.1 149.3h.01M840.2 147.0h.01M840.9 174.4h.01M841.3 163.5h.01M842.2 155.3h.01M842.4 169.6h.01M842.4 167.9h.01M843.7 150.6h.01M844.0 167.9h.01M844.0 167.1h.01M844.4 152.9h.01M844.7 156.8h.01M845.1 154.2h.01M846.0 140.0h.01M846.3 168.3h.01M846.7 148.6h.01M847.1 156.8h.01M847.3 167.9h.01M847.6 159.6h.01M847.9 139.6h.01M848.5 137.9h.01M848.5 149.9h.01M849.7 152.1h.01M849.9 144.8h.01M850.1 151.8h.01M850.4 160.3h.01M850.7 166.8h.01M851.2 166.9h.01M851.5 166.6h.01M851.6 170.2h.01M852.0 141.9h.01M852.4 140.2h.01M853.6 135.8h.01M854.3 154.7h.01M854.6 138.2h.01M854.7 141.9h.01M855.0 152.4h.01M855.5 160.8h.01M855.7 151.5h.01M856.0 166.7h.01M856.5 166.3h.01M856.6 154.8h.01M857.2 175.2h.01M857.6 165.5h.01M857.9 163.0h.01M857.9 164.8h.01M858.3 154.5h.01M859.6 151.1h.01M860.3 148.9h.01M860.4 147.6h.01M860.5 134.4h.01M860.6 134.2h.01M860.6 154.7h.01M860.9 123.1h.01M862.7 123.6h.01M862.8 144.6h.01M863.2 124.2h.01M863.3 115.6h.01M863.8 137.2h.01M864.1 137.2h.01M865.1 138.7h.01M865.2 139.3h.01M865.5 140.0h.01M865.5 143.8h.01M866.2 139.8h.01M866.4 146.5h.01M866.4 141.4h.01M866.8 135.4h.01M867.2 139.5h.01M868.3 141.5h.01M868.9 139.2h.01M869.0 137.2h.01M870.4 157.1h.01M870.7 155.9h.01M871.1 152.6h.01M871.5 154.3h.01M871.9 146.1h.01M872.9 145.6h.01M873.1 144.8h.01M873.3 162.5h.01M873.5 139.5h.01M873.7 155.3h.01M874.0 139.2h.01M874.8 147.5h.01M875.1 155.3h.01M875.4 165.3h.01M875.4 153.1h.01M875.7 159.0h.01M875.9 147.9h.01M876.3 149.7h.01M876.5 153.3h.01M876.8 164.1h.01M877.2 165.2h.01M877.6 164.8h.01M878.2 165.7h.01M879.7 157.6h.01M880.4 145.5h.01M880.6 146.3h.01M880.8 157.8h.01M880.9 151.6h.01M881.5 158.2h.01M881.8 166.8h.01M882.0 160.2h.01M882.1 164.2h.01M883.6 163.4h.01M883.6 158.8h.01M883.9 142.1h.01M884.1 142.3h.01M885.6 145.1h.01M885.8 161.1h.01M885.9 165.5h.01M887.0 143.1h.01M887.7 145.5h.01M887.8 141.9h.01M888.3 151.8h.01M888.7 151.8h.01M888.8 154.2h.01M889.4 152.1h.01M889.6 160.0h.01M889.9 163.0h.01M890.4 144.0h.01M891.0 161.5h.01M891.2 144.0h.01M891.3 143.7h.01M891.7 137.7h.01M892.2 159.1h.01M892.8 157.4h.01M893.7 143.4h.01M893.8 164.2h.01M893.9 145.2h.01M894.2 165.0h.01M894.5 166.3h.01M895.8 154.8h.01M896.5 153.3h.01M896.6 151.1h.01M896.7 149.6h.01M897.8 167.5h.01M898.0 167.8h.01M898.2 145.7h.01M898.3 145.7h.01M898.5 159.3h.01M899.0 160.8h.01M899.5 160.5h.01M899.9 166.2h.01M900.3 146.9h.01M900.4 160.4h.01M900.6 160.0h.01M900.7 160.0h.01M900.8 159.0h.01M900.8 149.5h.01M901.0 147.7h.01M901.2 155.4h.01M901.9 135.3h.01M902.6 133.8h.01M904.5 157.7h.01M905.0 158.2h.01M905.0 137.8h.01M905.8 152.9h.01M906.3 151.8h.01M907.1 150.5h.01M907.2 148.2h.01M907.4 153.3h.01M907.6 152.5h.01M908.2 157.8h.01M908.4 135.0h.01M908.4 154.4h.01M909.3 152.9h.01M909.4 144.9h.01M910.2 149.1h.01M910.4 148.4h.01M911.1 133.7h.01M911.2 164.3h.01M911.9 137.9h.01M912.5 140.4h.01M913.5 159.1h.01M913.6 150.8h.01M914.3 148.5h.01M914.5 161.8h.01M914.7 137.4h.01M915.0 150.0h.01M915.2 163.0h.01M915.3 177.1h.01M915.4 166.0h.01M915.5 175.0h.01M916.1 173.6h.01M917.0 174.6h.01M917.2 172.7h.01M917.4 158.9h.01M917.8 159.7h.01M918.4 159.8h.01M919.9 149.0h.01M920.0 155.8h.01M920.5 186.8h.01M920.8 175.1h.01M921.4 174.7h.01M921.4 182.3h.01M921.5 189.3h.01M921.8 180.4h.01M922.3 180.7h.01M922.4 183.0h.01M922.7 179.8h.01M923.1 191.8h.01M923.5 186.7h.01M924.0 197.4h.01M925.3 164.5h.01M925.3 179.3h.01M925.8 170.1h.01M926.4 167.1h.01M927.0 160.2h.01M927.1 170.3h.01M928.0 161.4h.01M928.1 181.3h.01M928.9 172.8h.01M929.1 171.1h.01M929.5 174.1h.01M929.9 156.7h.01M930.1 192.8h.01M930.6 198.7h.01M931.0 200.8h.01M931.4 197.4h.01M931.9 198.2h.01M931.9 168.6h.01M933.0 169.3h.01M933.1 167.2h.01M933.6 167.0h.01M934.1 171.5h.01M934.2 170.1h.01M934.4 171.9h.01M935.1 170.7h.01M935.3 175.0h.01M935.4 168.8h.01M935.8 156.2h.01M935.9 149.7h.01M936.3 156.1h.01M937.1 166.3h.01M937.4 166.6h.01M937.9 167.2h.01M938.2 173.2h.01M938.7 170.5h.01M939.9 168.6h.01M940.0 149.6h.01M941.8 150.0h.01M941.8 157.6h.01M942.0 159.4h.01M942.6 156.0h.01M943.0 163.1h.01M943.1 151.4h.01M943.2 151.5h.01M943.3 148.1h.01M943.6 144.4h.01M943.9 144.3h.01M944.1 150.6h.01M945.1 152.2h.01M945.6 144.7h.01M945.8 137.3h.01M946.4 136.8h.01M946.5 134.2h.01M946.8 134.6h.01M947.3 140.2h.01M948.0 137.4h.01M948.2 141.2h.01M948.7 156.1h.01M949.5 132.4h.01M949.5 127.2h.01M950.6 149.1h.01M950.7 146.6h.01M951.1 150.8h.01M951.3 147.8h.01M952.6 158.5h.01M952.6 148.8h.01M953.0 152.1h.01M953.4 159.4h.01M953.5 158.8h.01M954.2 157.9h.01M954.8 149.9h.01M954.9 150.7h.01M955.2 126.6h.01M955.3 128.4h.01M955.6 131.0h.01M955.7 141.8h.01M957.6 156.1h.01M957.9 158.3h.01M958.3 159.0h.01M959.2 143.7h.01M959.3 131.0h.01M959.4 144.3h.01M959.7 140.9h.01M959.7 138.0h.01M960.2 139.1h.01M961.1 144.3h.01M961.9 146.6h.01M962.0 135.5h.01M963.0 149.3h.01M963.3 135.2h.01M963.5 130.3h.01M963.6 130.3h.01M963.8 150.5h.01M964.2 125.5h.01M964.3 146.3h.01M964.6 146.2h.01M965.7 139.4h.01M966.2 120.7h.01M966.7 125.2h.01M967.1 124.4h.01M967.7 117.4h.01M968.0 119.1h.01M968.1 118.0h.01M968.1 139.3h.01M968.2 125.9h.01M968.6 119.7h.01M968.8 132.0h.01M969.0 126.2h.01M970.2 148.1h.01M970.8 144.4h.01M971.4 148.7h.01M971.7 141.6h.01M972.1 139.1h.01M972.4 127.3h.01M972.5 142.4h.01M973.3 140.7h.01M974.0 122.2h.01M974.2 125.2h.01M974.5 139.1h.01M975.0 142.9h.01M975.3 139.2h.01M975.7 120.7h.01M975.8 139.4h.01M976.2 137.0h.01M976.4 136.3h.01M976.4 135.3h.01M976.7 120.0h.01M977.4 120.0h.01M978.5 121.3h.01M978.8 132.3h.01M978.8 142.7h.01M979.3 132.3h.01M980.5 151.7h.01M981.2 150.3h.01M981.5 141.9h.01M982.7 135.9h.01M982.7 140.3h.01M982.9 138.9h.01M983.0 128.5h.01M983.0 140.0h.01M983.5 132.0h.01M983.6 132.5h.01M984.0 131.6h.01M984.2 149.0h.01M985.5 169.9h.01M986.9 149.4h.01M987.0 168.7h.01M987.2 169.0h.01M987.5 159.5h.01M987.8 170.8h.01M988.3 159.1h.01M988.5 172.0h.01M989.1 152.8h.01M989.2 152.3h.01M989.5 159.1h.01M989.7 168.2h.01M991.0 139.5h.01M991.1 150.0h.01M991.8 145.8h.01M992.0 147.9h.01M992.4 142.1h.01M993.5 164.9h.01M993.9 161.8h.01M994.0 138.6h.01M994.1 141.9h.01M994.5 136.0h.01M994.7 133.7h.01M994.9 157.6h.01M995.8 156.6h.01M996.7 159.3h.01M997.5 153.2h.01M997.7 146.0h.01M998.1 149.8h.01M998.5 152.8h.01M998.6 141.0h.01M998.6 153.3h.01M999.1 153.4h.01M999.2 169.7h.01M999.5 149.8h.01M999.7 143.4h.01M1000.3 168.6h.01M1000.6 175.0h.01M1000.7 179.0h.01M1000.8 161.5h.01M1001.3 160.8h.01M1001.9 164.8h.01M1002.6 166.6h.01M1003.6 155.0h.01M1003.6 159.7h.01M1003.8 165.7h.01M1004.3 167.2h.01M1004.8 171.5h.01M1005.4 153.8h.01M1006.3 152.7h.01M1006.5 154.7h.01M1006.7 172.9h.01M1006.9 155.4h.01M1007.4 181.3h.01M1008.4 175.9h.01M1008.9 161.4h.01M1009.1 159.4h.01M1009.8 168.4h.01M1009.9 158.1h.01M1009.9 151.2h.01M1010.3 161.2h.01M1010.9 162.4h.01M1012.1 165.3h.01M1012.6 167.4h.01M1013.1 152.4h.01M1013.2 174.2h.01M1013.6 152.1h.01M1013.7 147.8h.01M1013.9 176.4h.01M1014.2 168.2h.01M1014.3 170.8h.01M1014.6 172.7h.01M1015.7 152.6h.01M1015.9 151.0h.01M1016.1 153.7h.01M1016.1 151.0h.01M1016.5 153.1h.01M1017.4 157.5h.01M1017.5 152.4h.01M1017.9 173.7h.01M1018.3 174.7h.01M1018.5 156.5h.01M1018.9 176.4h.01M1018.9 178.3h.01M1020.3 184.8h.01M1021.1 173.5h.01M1021.5 163.7h.01M1021.6 162.0h.01M1022.7 158.0h.01M1022.8 156.1h.01M1023.0 183.9h.01M1023.1 184.7h.01M1023.9 180.7h.01M1024.5 168.6h.01M1024.8 166.5h.01M1025.0 156.4h.01M1025.3 191.3h.01M1025.9 181.0h.01M1026.7 192.6h.01M1026.9 200.0h.01M1026.9 182.7h.01M1027.1 178.3h.01M1027.6 180.6h.01M1028.3 178.9h.01M1029.1 197.9h.01M1029.1 204.9h.01M1029.2 204.9h.01M1029.9 179.0h.01M1030.1 199.9h.01M1030.3 194.8h.01M1030.4 188.0h.01M1030.6 189.8h.01M1031.2 189.2h.01M1031.8 211.5h.01M1032.3 213.0h.01M1033.1 189.3h.01M1033.1 188.0h.01M1033.4 191.1h.01M1034.3 194.2h.01M1034.8 200.4h.01M1035.7 173.8h.01M1035.7 177.3h.01M1036.1 178.2h.01M1036.5 174.0h.01M1036.9 153.0h.01M1037.3 154.6h.01M1037.8 176.7h.01M1038.2 174.8h.01M1038.3 171.8h.01M1038.4 158.9h.01M1038.7 175.1h.01M1038.8 170.7h.01M1040.2 171.9h.01M1040.5 179.5h.01M1040.9 170.0h.01M1042.8 169.4h.01M1043.0 160.5h.01M1043.0 135.3h.01M1043.3 154.2h.01M1043.3 153.5h.01M1043.5 181.1h.01M1044.1 177.0h.01M1044.3 163.9h.01M1044.4 166.1h.01M1045.0 170.9h.01M1045.2 151.3h.01M1045.6 175.2h.01M1045.9 164.7h.01M1046.1 167.0h.01M1046.5 151.4h.01M1046.6 162.0h.01M1046.9 174.1h.01M1047.8 158.3h.01M1048.3 155.2h.01M1048.4 171.9h.01M1048.6 171.9h.01M1050.0 151.6h.01M1050.1 157.2h.01M1050.2 166.3h.01M1051.1 159.1h.01M1051.4 156.1h.01M1052.3 154.2h.01M1052.6 165.8h.01M1052.7 165.5h.01M1052.7 157.5h.01M1053.8 152.6h.01M1053.9 166.5h.01M1054.7 160.4h.01M1055.5 139.2h.01M1055.7 139.2h.01M1056.4 134.4h.01M1056.6 139.6h.01M1056.6 135.5h.01M1057.5 138.5h.01M1058.1 143.1h.01M1058.1 138.8h.01M1058.2 143.0h.01M1058.2 143.0h.01M1059.8 133.2h.01M1060.0 143.4h.01M1061.1 157.7h.01M1061.1 149.4h.01M1061.3 144.4h.01M1061.6 139.9h.01M1062.1 156.8h.01M1062.6 158.1h.01M1063.0 142.3h.01M1063.3 146.5h.01M1063.6 157.8h.01M1063.9 135.2h.01M1064.4 153.4h.01M1064.8 152.8h.01M1065.1 152.6h.01M1065.8 137.2h.01M1066.0 135.6h.01M1066.4 158.3h.01M1067.0 140.7h.01M1067.0 140.9h.01M1067.2 142.2h.01M1067.7 134.4h.01M1067.8 130.8h.01M1068.1 135.5h.01M1068.4 139.8h.01M1069.2 131.1h.01M1070.2 138.3h.01M1070.5 135.5h.01M1071.6 129.3h.01M1071.9 130.5h.01M1072.0 130.5h.01M1072.3 147.6h.01M1072.5 145.0h.01M1072.9 144.9h.01M1073.1 134.1h.01M1074.1 134.1h.01M1074.3 137.3h.01M1075.0 133.6h.01M1075.1 139.7h.01M1075.2 117.3h.01M1075.4 131.4h.01M1076.2 128.8h.01M1076.4 134.7h.01M1076.5 129.6h.01M1077.6 132.5h.01M1078.7 130.5h.01M1078.9 122.1h.01M1079.3 120.6h.01M1079.4 139.5h.01M1079.6 137.6h.01M1080.0 140.1h.01M1080.1 138.7h.01M1080.5 123.0h.01M1080.5 144.6h.01M1080.6 134.8h.01M1081.5 127.6h.01M1082.1 121.9h.01M1082.2 137.5h.01M1082.6 127.2h.01M1083.3 129.5h.01M1083.9 128.9h.01M1084.3 144.7h.01M1085.0 139.6h.01M1085.1 138.0h.01M1085.2 121.0h.01M1085.4 122.1h.01M1085.4 146.7h.01M1085.6 125.0h.01M1085.7 123.2h.01M1087.4 141.0h.01M1087.4 145.4h.01M1088.6 140.7h.01M1088.8 135.0h.01M1089.1 135.6h.01M1090.2 165.1h.01M1090.4 158.5h.01M1090.4 156.5h.01M1090.5 154.1h.01M1090.7 152.7h.01M1090.8 156.9h.01M1090.9 160.4h.01M1091.1 156.1h.01M1091.8 168.1h.01M1092.7 169.9h.01M1093.5 173.4h.01M1095.0 174.8h.01M1095.9 175.4h.01M1096.0 174.4h.01M1096.0 142.3h.01M1096.1 162.8h.01M1096.7 176.9h.01M1096.9 175.0h.01M1097.2 168.8h.01M1097.2 170.3h.01M1097.4 150.1h.01M1097.8 149.1h.01M1098.8 142.4h.01M1099.8 159.7h.01M1100.1 145.9h.01M1100.6 152.4h.01M1100.7 137.1h.01M1101.3 139.5h.01M1101.8 155.2h.01M1101.8 148.2h.01M1102.3 138.1h.01M1102.5 158.8h.01M1102.9 140.1h.01M1103.7 140.8h.01M1103.7 152.2h.01M1104.4 154.0h.01M1106.1 148.1h.01M1106.5 152.9h.01M1106.6 169.4h.01M1106.9 171.6h.01M1107.4 171.6h.01M1107.7 172.3h.01M1108.1 168.0h.01M1108.2 160.2h.01M1108.4 145.7h.01M1108.6 143.5h.01M1109.5 141.4h.01M1109.9 155.1h.01M1111.1 131.4h.01M1111.1 128.4h.01M1111.3 131.1h.01M1111.4 157.4h.01M1111.6 150.3h.01M1111.8 138.3h.01M1111.9 142.2h.01M1112.8 157.4h.01M1112.9 159.9h.01M1112.9 144.4h.01M1113.7 162.7h.01M1114.5 162.0h.01M1115.4 129.8h.01M1115.6 129.7h.01M1116.1 129.7h.01M1116.3 134.1h.01M1116.3 165.0h.01M1116.9 163.5h.01M1117.5 153.9h.01M1118.0 137.6h.01M1118.6 138.8h.01M1118.8 143.3h.01M1119.0 132.7h.01M1119.6 144.3h.01M1120.7 141.0h.01M1121.8 140.6h.01M1121.8 147.4h.01M1122.7 151.4h.01M1122.7 152.7h.01M1122.8 161.4h.01M1123.3 160.1h.01M1123.7 161.7h.01M1123.8 155.7h.01M1124.3 143.9h.01M1124.4 144.8h.01M1124.9 143.4h.01M1125.3 164.5h.01M1125.6 151.4h.01M1126.2 148.9h.01M1126.3 144.4h.01M1126.5 143.9h.01M1127.0 140.3h.01M1127.3 155.4h.01M1128.1 153.0h.01M1128.7 165.1h.01M1129.0 173.1h.01M1129.5 154.2h.01M1129.5 169.9h.01M1130.0 172.4h.01M1130.4 171.2h.01M1130.6 157.5h.01M1131.3 153.6h.01M1131.4 145.9h.01M1131.6 153.4h.01M1131.8 165.5h.01M1132.0 159.0h.01M1133.1 153.4h.01M1133.5 150.3h.01M1133.6 158.8h.01M1134.7 177.6h.01M1135.4 161.2h.01M1135.5 173.5h.01M1135.6 166.2h.01M1135.8 174.3h.01M1136.5 161.9h.01M1136.9 162.7h.01M1137.2 168.9h.01M1137.5 168.1h.01M1137.7 167.9h.01M1137.7 159.1h.01M1138.9 165.9h.01M1139.2 161.3h.01M1140.1 151.6h.01M1140.2 158.0h.01M1140.3 148.4h.01M1140.4 135.0h.01M1141.4 160.0h.01M1141.4 174.4h.01M1141.5 175.0h.01M1141.9 159.6h.01M1142.8 160.3h.01M1143.2 171.0h.01M1144.5 147.1h.01M1144.7 135.6h.01M1145.0 155.2h.01M1145.6 169.4h.01M1145.7 129.7h.01M1146.5 162.9h.01M1146.5 156.0h.01M1147.2 156.3h.01M1147.3 161.1h.01M1147.3 164.1h.01M1147.4 158.3h.01M1148.5 157.3h.01M1149.6 181.6h.01M1149.6 147.2h.01M1150.8 129.6h.01M1151.0 132.4h.01M1151.1 136.0h.01M1152.0 145.5h.01M1152.4 130.7h.01M1152.5 140.3h.01M1153.0 145.8h.01M1153.0 145.1h.01M1153.5 135.9h.01M1153.6 135.4h.01M1153.8 134.8h.01M1154.1 135.7h.01M1155.6 115.8h.01M1155.9 143.7h.01M1156.3 146.8h.01M1156.6 143.6h.01M1156.8 140.1h.01M1157.1 142.2h.01M1157.2 147.4h.01M1157.4 145.8h.01M1157.4 134.8h.01M1158.5 147.8h.01M1158.5 119.7h.01M1159.5 147.0h.01M1160.1 160.1h.01M1161.1 155.1h.01M1161.5 133.4h.01M1161.6 129.7h.01M1161.9 130.2h.01M1162.2 151.6h.01M1162.4 137.4h.01M1162.9 158.4h.01M1163.6 148.9h.01M1164.3 153.0h.01M1164.5 141.7h.01M1164.6 153.6h.01M1165.6 130.4h.01M1166.2 131.2h.01M1166.4 157.4h.01M1166.5 142.4h.01M1166.9 129.9h.01M1167.0 161.5h.01M1167.2 153.2h.01M1168.8 158.7h.01M1168.8 143.3h.01M1169.2 131.9h.01M1169.6 142.1h.01M1169.6 148.2h.01M1170.1 165.6h.01M1170.6 160.2h.01M1170.7 164.9h.01M1170.9 166.7h.01M1171.1 161.6h.01M1173.1 160.0h.01M1173.2 156.3h.01M1173.9 173.3h.01M1174.1 178.5h.01M1174.2 183.3h.01M1174.5 165.1h.01M1174.5 160.6h.01M1175.0 176.5h.01M1175.1 174.8h.01M1175.1 155.8h.01M1175.4 153.3h.01M1176.9 152.3h.01M1177.9 165.0h.01M1178.1 177.0h.01M1178.8 168.5h.01M1179.1 179.5h.01M1179.2 154.2h.01M1179.5 174.2h.01M1179.9 153.0h.01M1180.0 150.7h.01M1180.6 179.1h.01M1180.7 181.9h.01M1180.8 180.9h.01M1181.6 183.9h.01M1182.5 155.1h.01M1182.5 173.1h.01M1182.6 169.9h.01M1182.9 168.4h.01M1183.0 170.8h.01M1184.4 174.5h.01M1184.9 163.4h.01M1185.0 169.7h.01M1185.6 150.1h.01M1185.7 168.0h.01M1186.1 165.2h.01M1186.3 162.6h.01M1186.4 172.7h.01M1186.6 161.8h.01M1186.9 147.6h.01M1187.0 177.6h.01M1188.5 160.1h.01M1189.0 162.5h.01M1189.5 166.4h.01M1190.3 172.5h.01M1190.5 156.7h.01M1190.8 171.7h.01M1191.6 145.0h.01M1192.4 145.8h.01M1193.1 164.5h.01M1193.2 164.3h.01M1193.3 140.6h.01M1193.9 142.4h.01M1194.2 155.6h.01M1194.4 155.9h.01M1194.7 156.4h.01M1196.4 162.0h.01M1197.1 173.0h.01M1197.6 157.8h.01M1197.7 155.9h.01M1198.1 149.0h.01M1198.4 143.7h.01M1199.1 151.6h.01M1199.6 145.1h.01M1199.6 154.1h.01M1199.7 157.0h.01M1199.7 157.3h.01M1199.9 143.1h.01M1200.4 160.3h.01M1200.8 150.1h.01M1201.1 148.3h.01M1201.6 149.3h.01M1202.6 149.9h.01M1203.6 149.4h.01M1204.5 154.8h.01M1204.5 158.5h.01M1204.7 151.2h.01M1204.8 153.2h.01M1204.8 155.1h.01M1204.8 154.9h.01M1205.4 158.1h.01M1205.5 175.4h.01M1205.7 171.3h.01M1205.8 175.5h.01M1206.3 176.7h.01M1206.8 165.4h.01M1207.6 174.2h.01M1208.5 174.0h.01M1208.6 175.3h.01M1208.8 170.3h.01M1209.2 167.1h.01M1209.8 163.8h.01M1210.3 177.4h.01M1210.4 175.7h.01M1211.5 173.1h.01M1211.6 179.9h.01M1212.0 180.3h.01M1212.3 164.2h.01M1213.2 164.6h.01M1213.4 169.4h.01M1213.4 179.1h.01M1213.9 163.8h.01M1214.2 173.3h.01M1214.3 176.5h.01M1215.1 168.5h.01M1215.4 161.1h.01M1215.6 156.5h.01M1215.6 143.9h.01M1216.2 147.1h.01M1216.4 152.3h.01M1216.9 160.3h.01M1217.3 155.6h.01M1217.9 159.5h.01M1219.8 160.0h.01M1219.9 149.5h.01M1220.0 153.9h.01M1220.5 133.1h.01M1221.0 130.2h.01M1221.1 129.0h.01M1222.1 148.7h.01M1222.2 154.1h.01M1222.6 150.2h.01M1222.9 125.5h.01M1223.6 136.5h.01M1223.8 141.0h.01M1224.0 141.6h.01M1224.1 140.2h.01M1224.6 137.9h.01M1225.1 146.7h.01M1225.5 145.5h.01M1226.4 120.8h.01M1226.4 113.4h.01M1226.6 130.4h.01M1226.7 128.1h.01M1227.0 130.1h.01M1227.9 139.3h.01M1228.0 148.9h.01M1228.8 134.7h.01M1229.4 137.5h.01M1229.5 134.2h.01M1230.3 143.7h.01M1230.8 147.8h.01M1230.8 157.8h.01M1231.4 158.0h.01M1231.8 150.9h.01M1231.9 125.7h.01M1232.0 155.5h.01M1232.2 157.0h.01M1232.4 148.9h.01M1233.6 129.4h.01M1234.0 129.4h.01M1234.5 133.1h.01M1235.1 140.2h.01M1235.1 143.6h.01M1235.6 131.0h.01M1235.7 129.2h.01M1235.8 155.5h.01M1237.1 135.6h.01M1237.3 136.4h.01M1238.3 141.2h.01M1238.7 155.8h.01M1239.2 155.0h.01M1239.4 144.1h.01M1239.7 146.0h.01M1241.7 150.8h.01M1242.0 146.8h.01M1242.2 150.2h.01M1242.4 127.4h.01M1242.5 137.8h.01M1242.6 130.2h.01M1243.0 133.1h.01M1243.1 123.7h.01M1243.5 135.9h.01M1243.7 134.8h.01M1244.3 140.6h.01M1244.8 153.5h.01M1245.1 134.2h.01M1245.6 154.4h.01M1245.7 145.5h.01M1245.9 144.2h.01M1246.2 138.5h.01M1246.8 136.0h.01M1247.3 124.0h.01M1247.5 130.6h.01M1248.3 131.5h.01M1248.6 133.3h.01M1248.8 130.0h.01M1249.4 129.3h.01M1250.5 130.7h.01M1251.7 129.7h.01M1251.7 129.6h.01M1251.8 127.7h.01M1252.2 138.3h.01M1252.6 120.6h.01M1253.0 122.0h.01M1253.2 116.4h.01M1253.4 114.5h.01M1253.8 129.1h.01M1254.2 125.8h.01M1254.3 124.3h.01M1255.5 118.4h.01M1256.1 124.9h.01M1256.7 112.5h.01M1256.7 114.6h.01M1256.8 116.1h.01M1257.1 121.0h.01M1257.2 117.8h.01M1258.2 123.2h.01M1258.5 106.4h.01M1258.7 106.5h.01M1259.0 104.5h.01M1259.4 133.5h.01M1260.7 121.0h.01M1261.4 113.3h.01M1261.9 105.7h.01M1262.1 105.0h.01M1262.3 121.1h.01M1262.4 107.3h.01M1264.0 119.1h.01M1264.1 111.2h.01M1264.2 108.0h.01M1264.3 110.2h.01M1264.4 115.1h.01M1264.7 110.1h.01M1265.0 110.4h.01M1265.2 108.8h.01M1265.2 112.2h.01M1265.2 109.1h.01M1265.3 106.1h.01M1265.4 116.0h.01M1265.8 114.0h.01M1266.1 119.3h.01M1266.7 114.5h.01M1268.6 116.3h.01M1268.6 118.9h.01M1269.2 118.7h.01M1270.8 110.8h.01M1271.0 109.9h.01M1271.2 109.2h.01M1271.5 110.2h.01M1271.5 106.2h.01M1271.6 112.7h.01M1272.4 113.4h.01M1272.4 113.0h.01M1274.1 105.0h.01M1274.3 102.3h.01M1274.4 102.4h.01M1275.0 105.6h.01M1275.3 110.9h.01M1275.4 108.9h.01M1275.7 110.7h.01M1275.8 111.2h.01M1276.0 113.4h.01M1276.5 118.1h.01M1276.6 106.0h.01M1277.3 117.0h.01M1278.6 121.0h.01M1278.6 124.3h.01M1278.8 119.7h.01M1278.9 122.0h.01M1280.1 117.5h.01M1280.5 111.7h.01M1280.5 110.0h.01M1282.0 108.0h.01M1282.3 107.7h.01M1283.0 117.6h.01M1283.3 115.7h.01M1283.6 114.6h.01M1284.1 118.2h.01M1284.1 106.0h.01M1284.2 114.5h.01M1284.9 102.3h.01M1285.0 122.8h.01M1285.1 116.6h.01M1286.5 119.0h.01M1286.8 120.9h.01M1287.3 122.2h.01M1287.3 116.2h.01M1288.1 117.3h.01M1288.6 108.5h.01M1288.9 129.5h.01M1289.4 127.6h.01M1289.6 130.0h.01M1290.0 126.9h.01M1290.6 110.8h.01M1291.1 123.5h.01M1291.9 124.4h.01M1292.0 113.2h.01M1292.6 110.0h.01M1293.0 129.3h.01M1293.2 128.6h.01M1293.8 121.2h.01M1294.4 124.8h.01M1294.4 118.5h.01M1294.6 117.9h.01M1294.8 113.4h.01M1296.3 115.9h.01M1296.4 109.8h.01M1296.9 108.2h.01M1297.9 112.0h.01M1297.9 113.9h.01M1298.2 105.6h.01M1298.4 115.3h.01M1298.5 103.9h.01M1298.6 114.1h.01M1299.1 105.0h.01M1299.2 105.7h.01M1299.8 104.1h.01M1300.0 105.6h.01M1300.1 111.6h.01M1300.1 107.3h.01M1300.5 103.9h.01M1301.6 104.6h.01M1301.7 106.6h.01M1302.2 107.8h.01M1302.4 112.5h.01M1303.5 113.1h.01M1303.6 105.0h.01M1304.4 102.5h.01M1304.8 102.0h.01M526.0 119.0h.01M745.0 217.0h.01M838.0 193.0h.01M922.0 217.0h.01M933.0 209.0h.01M970.0 162.0h.01M1136.0 194.0h.01M1209.0 193.0h.01M1279.6 184.0h.01M820.0 104.3h.01M820.6 114.3h.01M865.3 106.3h.01M865.3 114.3h.01M866.0 121.7h.01M275.0 270.0h.01M279.0 275.5h.01M707.0 121.0h.01M1242.0 169.0h.01M351.0 198.0h.01M890.0 178.0h.01" stroke="#000" stroke-width="3.44" stroke-linecap="round" fill="none"/>
<path d="M214.3 95.4h.01M222.5 95.4h.01M214.3 101.4h.01M222.5 104.1h.01M587.4 223.4h.01M616.4 225.4h.01M639.4 223.4h.01M581.4 247.4h.01M720.0 223.4h.01M1263.0 82.3h.01M1266.7 82.3h.01M1264.3 87.5h.01M1264.3 91.7h.01M1268.7 90.0h.01M1271.0 90.0h.01M1275.3 88.0h.01M1275.3 91.3h.01M1274.3 94.7h.01M1274.3 96.3h.01M1281.3 88.3h.01M1285.7 85.3h.01M1286.7 94.3h.01M1283.3 97.3h.01M1281.3 100.3h.01M1287.3 102.3h.01M1297.3 88.3h.01M1300.3 92.3h.01M1297.3 95.3h.01M1301.3 97.0h.01M1302.3 81.3h.01M1301.3 83.3h.01M1294.7 100.3h.01M1297.3 100.3h.01M1254.7 101.0h.01M1257.3 101.0h.01M1260.0 99.3h.01M1262.0 98.0h.01M1264.7 97.3h.01M1266.7 96.7h.01M1268.0 98.7h.01M1265.3 95.3h.01M1269.3 95.3h.01M1280.0 101.3h.01M1272.7 100.7h.01" stroke="#ffa500" stroke-width="3.44" stroke-linecap="round" fill="none"/>
<line x1="105.4" y1="186.7" x2="1361" y2="186.7" stroke="#008000" stroke-width="2.08"/>
<line x1="162.0" y1="321.3" x2="162.0" y2="35.4" stroke="#800080" stroke-width="2.08" stroke-dasharray="2.08 3.43"/>
<line x1="301.2" y1="321.3" x2="301.2" y2="35.4" stroke="#800080" stroke-width="2.08" stroke-dasharray="2.08 3.43"/>
<line x1="1302.9" y1="321.3" x2="1302.9" y2="35.4" stroke="#800080" stroke-width="2.08" stroke-dasharray="2.08 3.43"/>
</g>
<g font-size="14.58"><text x="209.94" y="311.90" textLength="8.14" lengthAdjust="spacingAndGlyphs">4</text><text x="218.74" y="311.90" textLength="7.85" lengthAdjust="spacingAndGlyphs">2</text><text x="227.74" y="311.90" textLength="7.78" lengthAdjust="spacingAndGlyphs">1</text><text x="236.46" y="311.90" textLength="8.14" lengthAdjust="spacingAndGlyphs">0</text><text x="245.47" y="311.90" textLength="7.82" lengthAdjust="spacingAndGlyphs">3</text></g>
<g font-size="14.58"><text x="779.94" y="291.90" textLength="8.14" lengthAdjust="spacingAndGlyphs">4</text><text x="788.74" y="291.90" textLength="7.85" lengthAdjust="spacingAndGlyphs">2</text><text x="797.62" y="291.90" textLength="8.14" lengthAdjust="spacingAndGlyphs">0</text><text x="806.28" y="291.90" textLength="8.41" lengthAdjust="spacingAndGlyphs">9</text><text x="815.11" y="291.90" textLength="8.41" lengthAdjust="spacingAndGlyphs">9</text></g>
<rect x="105.4" y="35.4" width="1380.1" height="285.90000000000003" fill="none" stroke="#000" stroke-width="1.11"/>
<path d="M162.30 321.30v4.86M374.30 321.30v4.86M586.30 321.30v4.86M798.40 321.30v4.86M1010.40 321.30v4.86M1222.40 321.30v4.86M1434.50 321.30v4.86" stroke="#000" stroke-width="1.11"/>
<g font-size="14.58"><text x="158.23" y="341.90" textLength="8.14" lengthAdjust="spacingAndGlyphs">0</text></g>
<g font-size="14.58"><text x="361.56" y="341.90" textLength="7.69" lengthAdjust="spacingAndGlyphs">5</text><text x="370.23" y="341.90" textLength="8.14" lengthAdjust="spacingAndGlyphs">0</text><text x="379.06" y="341.90" textLength="8.14" lengthAdjust="spacingAndGlyphs">0</text></g>
<g font-size="14.58"><text x="569.09" y="341.90" textLength="7.78" lengthAdjust="spacingAndGlyphs">1</text><text x="577.81" y="341.90" textLength="8.14" lengthAdjust="spacingAndGlyphs">0</text><text x="586.64" y="341.90" textLength="8.14" lengthAdjust="spacingAndGlyphs">0</text><text x="595.48" y="341.90" textLength="8.14" lengthAdjust="spacingAndGlyphs">0</text></g>
<g font-size="14.58"><text x="781.19" y="341.90" textLength="7.78" lengthAdjust="spacingAndGlyphs">1</text><text x="790.08" y="341.90" textLength="7.69" lengthAdjust="spacingAndGlyphs">5</text><text x="798.74" y="341.90" textLength="8.14" lengthAdjust="spacingAndGlyphs">0</text><text x="807.58" y="341.90" textLength="8.14" lengthAdjust="spacingAndGlyphs">0</text></g>
<g font-size="14.58"><text x="993.03" y="341.90" textLength="7.85" lengthAdjust="spacingAndGlyphs">2</text><text x="1001.91" y="341.90" textLength="8.14" lengthAdjust="spacingAndGlyphs">0</text><text x="1010.74" y="341.90" textLength="8.14" lengthAdjust="spacingAndGlyphs">0</text><text x="1019.58" y="341.90" textLength="8.14" lengthAdjust="spacingAndGlyphs">0</text></g>
<g font-size="14.58"><text x="1205.03" y="341.90" textLength="7.85" lengthAdjust="spacingAndGlyphs">2</text><text x="1214.08" y="341.90" textLength="7.69" lengthAdjust="spacingAndGlyphs">5</text><text x="1222.74" y="341.90" textLength="8.14" lengthAdjust="spacingAndGlyphs">0</text><text x="1231.58" y="341.90" textLength="8.14" lengthAdjust="spacingAndGlyphs">0</text></g>
<g font-size="14.58"><text x="1417.35" y="341.90" textLength="7.82" lengthAdjust="spacingAndGlyphs">3</text><text x="1426.01" y="341.90" textLength="8.14" lengthAdjust="spacingAndGlyphs">0</text><text x="1434.84" y="341.90" textLength="8.14" lengthAdjust="spacingAndGlyphs">0</text><text x="1443.68" y="341.90" textLength="8.14" lengthAdjust="spacingAndGlyphs">0</text></g>
<path d="M100.54 48.45h4.86M100.54 86.88h4.86M100.54 125.31h4.86M100.54 163.74h4.86M100.54 202.17h4.86M100.54 240.60h4.86M100.54 279.03h4.86M100.54 317.46h4.86" stroke="#000" stroke-width="1.11"/>
<g font-size="14.58"><text x="56.22" y="53.55" textLength="8.23" lengthAdjust="spacingAndGlyphs">8</text><text x="64.87" y="53.55" textLength="4.18" lengthAdjust="spacingAndGlyphs">.</text><text x="69.33" y="53.55" textLength="8.41" lengthAdjust="spacingAndGlyphs">9</text><text x="78.52" y="53.55" textLength="7.69" lengthAdjust="spacingAndGlyphs">5</text><text x="87.19" y="53.55" textLength="8.14" lengthAdjust="spacingAndGlyphs">0</text></g>
<g font-size="14.58"><text x="56.22" y="91.98" textLength="8.23" lengthAdjust="spacingAndGlyphs">8</text><text x="64.87" y="91.98" textLength="4.18" lengthAdjust="spacingAndGlyphs">.</text><text x="69.33" y="91.98" textLength="8.41" lengthAdjust="spacingAndGlyphs">9</text><text x="78.31" y="91.98" textLength="7.85" lengthAdjust="spacingAndGlyphs">2</text><text x="87.36" y="91.98" textLength="7.69" lengthAdjust="spacingAndGlyphs">5</text></g>
<g font-size="14.58"><text x="56.22" y="130.41" textLength="8.23" lengthAdjust="spacingAndGlyphs">8</text><text x="64.87" y="130.41" textLength="4.18" lengthAdjust="spacingAndGlyphs">.</text><text x="69.33" y="130.41" textLength="8.41" lengthAdjust="spacingAndGlyphs">9</text><text x="78.35" y="130.41" textLength="8.14" lengthAdjust="spacingAndGlyphs">0</text><text x="87.19" y="130.41" textLength="8.14" lengthAdjust="spacingAndGlyphs">0</text></g>
<g font-size="14.58"><text x="56.22" y="168.84" textLength="8.23" lengthAdjust="spacingAndGlyphs">8</text><text x="64.87" y="168.84" textLength="4.18" lengthAdjust="spacingAndGlyphs">.</text><text x="69.47" y="168.84" textLength="8.23" lengthAdjust="spacingAndGlyphs">8</text><text x="78.41" y="168.84" textLength="7.97" lengthAdjust="spacingAndGlyphs">7</text><text x="87.36" y="168.84" textLength="7.69" lengthAdjust="spacingAndGlyphs">5</text></g>
<g font-size="14.58"><text x="56.22" y="207.27" textLength="8.23" lengthAdjust="spacingAndGlyphs">8</text><text x="64.87" y="207.27" textLength="4.18" lengthAdjust="spacingAndGlyphs">.</text><text x="69.47" y="207.27" textLength="8.23" lengthAdjust="spacingAndGlyphs">8</text><text x="78.52" y="207.27" textLength="7.69" lengthAdjust="spacingAndGlyphs">5</text><text x="87.19" y="207.27" textLength="8.14" lengthAdjust="spacingAndGlyphs">0</text></g>
<g font-size="14.58"><text x="56.22" y="245.70" textLength="8.23" lengthAdjust="spacingAndGlyphs">8</text><text x="64.87" y="245.70" textLength="4.18" lengthAdjust="spacingAndGlyphs">.</text><text x="69.47" y="245.70" textLength="8.23" lengthAdjust="spacingAndGlyphs">8</text><text x="78.31" y="245.70" textLength="7.85" lengthAdjust="spacingAndGlyphs">2</text><text x="87.36" y="245.70" textLength="7.69" lengthAdjust="spacingAndGlyphs">5</text></g>
<g font-size="14.58"><text x="56.22" y="284.13" textLength="8.23" lengthAdjust="spacingAndGlyphs">8</text><text x="64.87" y="284.13" textLength="4.18" lengthAdjust="spacingAndGlyphs">.</text><text x="69.47" y="284.13" textLength="8.23" lengthAdjust="spacingAndGlyphs">8</text><text x="78.35" y="284.13" textLength="8.14" lengthAdjust="spacingAndGlyphs">0</text><text x="87.19" y="284.13" textLength="8.14" lengthAdjust="spacingAndGlyphs">0</text></g>
<g font-size="14.58"><text x="56.22" y="322.56" textLength="8.23" lengthAdjust="spacingAndGlyphs">8</text><text x="64.87" y="322.56" textLength="4.18" lengthAdjust="spacingAndGlyphs">.</text><text x="69.57" y="322.56" textLength="7.97" lengthAdjust="spacingAndGlyphs">7</text><text x="78.41" y="322.56" textLength="7.97" lengthAdjust="spacingAndGlyphs">7</text><text x="87.36" y="322.56" textLength="7.69" lengthAdjust="spacingAndGlyphs">5</text></g>
<rect x="1361.3" y="42.7" width="117.10000000000014" height="26.599999999999994" rx="2.8" fill="#fff" fill-opacity="0.8" stroke="#d5d5d5" stroke-width="1.11"/>
<line x1="1366" y1="54" x2="1396" y2="54" stroke="#008000" stroke-width="2.08"/>
<g font-size="14.58"><text x="1407.21" y="58.90" textLength="13.18" lengthAdjust="spacingAndGlyphs">m</text><text x="1420.83" y="58.90" textLength="6.95" lengthAdjust="spacingAndGlyphs">a</text><text x="1429.17" y="58.90" textLength="8.40" lengthAdjust="spacingAndGlyphs">g</text></g>
<g font-size="11.10" font-style="italic"><text x="1437.17" y="60.70" textLength="6.70" lengthAdjust="spacingAndGlyphs">A</text><text x="1443.97" y="60.70" textLength="7.68" lengthAdjust="spacingAndGlyphs">G</text><text x="1451.68" y="60.70" textLength="6.70" lengthAdjust="spacingAndGlyphs">A</text><text x="1458.31" y="60.70" textLength="6.31" lengthAdjust="spacingAndGlyphs">S</text><text x="1464.72" y="60.70" textLength="6.98" lengthAdjust="spacingAndGlyphs">C</text></g>
<rect x="1348.7" y="247.6" width="129.70000000000005" height="66.70000000000002" rx="2.8" fill="#fff" fill-opacity="0.8" stroke="#d5d5d5" stroke-width="1.11"/>
<path d="M1367.6 260.4h.01" stroke="#ff0000" stroke-width="3.44" stroke-linecap="round" fill="none"/>
<path d="M1367.6 281.3h.01" stroke="#ffa500" stroke-width="3.44" stroke-linecap="round" fill="none"/>
<path d="M1367.6 302.4h.01" stroke="#000" stroke-width="3.44" stroke-linecap="round" fill="none"/>
<g font-size="14.58"><text x="1392.27" y="264.00" textLength="8.33" lengthAdjust="spacingAndGlyphs">n</text><text x="1400.95" y="264.00" textLength="8.21" lengthAdjust="spacingAndGlyphs">o</text><text x="1409.39" y="264.00" textLength="5.16" lengthAdjust="spacingAndGlyphs">t</text><text x="1419.29" y="264.00" textLength="10.68" lengthAdjust="spacingAndGlyphs">O</text><text x="1430.31" y="264.00" textLength="9.34" lengthAdjust="spacingAndGlyphs">K</text></g>
<g font-size="14.58"><text x="1392.23" y="284.90" textLength="9.98" lengthAdjust="spacingAndGlyphs">H</text><text x="1402.80" y="284.90" textLength="3.15" lengthAdjust="spacingAndGlyphs">i</text><text x="1406.44" y="284.90" textLength="8.40" lengthAdjust="spacingAndGlyphs">g</text><text x="1415.34" y="284.90" textLength="8.39" lengthAdjust="spacingAndGlyphs">h</text><text x="1424.28" y="284.90" textLength="3.15" lengthAdjust="spacingAndGlyphs">l</text><text x="1428.14" y="284.90" textLength="3.15" lengthAdjust="spacingAndGlyphs">i</text><text x="1431.77" y="284.90" textLength="8.40" lengthAdjust="spacingAndGlyphs">g</text><text x="1440.67" y="284.90" textLength="8.39" lengthAdjust="spacingAndGlyphs">h</text><text x="1449.35" y="284.90" textLength="5.16" lengthAdjust="spacingAndGlyphs">t</text><text x="1454.84" y="284.90" textLength="8.34" lengthAdjust="spacingAndGlyphs">e</text><text x="1463.39" y="284.90" textLength="8.40" lengthAdjust="spacingAndGlyphs">d</text></g>
<g font-size="14.58"><text x="1392.13" y="306.00" textLength="10.68" lengthAdjust="spacingAndGlyphs">O</text><text x="1403.15" y="306.00" textLength="9.34" lengthAdjust="spacingAndGlyphs">K</text></g>
<g font-size="17.50"><text x="707.71" y="372.00" textLength="13.85" lengthAdjust="spacingAndGlyphs">M</text><text x="722.18" y="372.00" textLength="8.34" lengthAdjust="spacingAndGlyphs">a</text><text x="732.19" y="372.00" textLength="10.08" lengthAdjust="spacingAndGlyphs">g</text><text x="742.93" y="372.00" textLength="10.00" lengthAdjust="spacingAndGlyphs">n</text><text x="753.61" y="372.00" textLength="3.79" lengthAdjust="spacingAndGlyphs">i</text><text x="757.92" y="372.00" textLength="6.19" lengthAdjust="spacingAndGlyphs">t</text><text x="764.60" y="372.00" textLength="10.00" lengthAdjust="spacingAndGlyphs">u</text><text x="775.07" y="372.00" textLength="10.08" lengthAdjust="spacingAndGlyphs">d</text><text x="785.65" y="372.00" textLength="10.01" lengthAdjust="spacingAndGlyphs">e</text><text x="801.50" y="372.00" textLength="9.64" lengthAdjust="spacingAndGlyphs">E</text><text x="812.04" y="372.00" textLength="7.99" lengthAdjust="spacingAndGlyphs">s</text><text x="820.38" y="372.00" textLength="6.19" lengthAdjust="spacingAndGlyphs">t</text><text x="827.23" y="372.00" textLength="3.79" lengthAdjust="spacingAndGlyphs">i</text><text x="831.69" y="372.00" textLength="15.82" lengthAdjust="spacingAndGlyphs">m</text><text x="848.04" y="372.00" textLength="8.34" lengthAdjust="spacingAndGlyphs">a</text><text x="858.00" y="372.00" textLength="6.19" lengthAdjust="spacingAndGlyphs">t</text><text x="864.58" y="372.00" textLength="10.01" lengthAdjust="spacingAndGlyphs">e</text><text x="875.14" y="372.00" textLength="7.99" lengthAdjust="spacingAndGlyphs">s</text></g>
<g clip-path="url(#c2)">
<path d="M189.6 539.2h.01M190.2 552.2h.01M190.4 551.8h.01M190.5 547.5h.01M190.6 558.7h.01M191.1 556.9h.01M191.5 559.5h.01M191.5 561.9h.01M191.9 558.8h.01M192.5 560.6h.01M192.6 561.1h.01M192.6 562.7h.01M194.0 563.9h.01M195.2 556.4h.01M195.7 553.0h.01M195.7 557.5h.01M195.7 555.4h.01M196.0 538.5h.01M197.3 552.9h.01M197.4 539.3h.01M197.6 551.3h.01M198.7 555.1h.01M199.3 561.5h.01M199.4 560.7h.01M199.5 543.6h.01M199.5 554.3h.01M200.0 545.8h.01M200.5 532.8h.01M200.8 550.2h.01M201.7 553.7h.01M201.8 555.7h.01M202.2 549.2h.01M202.3 525.5h.01M202.8 540.5h.01M203.8 517.6h.01M203.9 513.8h.01M204.8 530.2h.01M205.1 528.6h.01M205.2 522.3h.01M206.3 537.0h.01M206.3 535.5h.01M206.7 540.2h.01M207.4 541.6h.01M208.0 541.6h.01M208.1 515.4h.01M208.4 522.1h.01M208.7 515.0h.01M209.6 516.0h.01M209.7 520.4h.01M210.5 530.0h.01M210.8 535.3h.01M210.8 523.4h.01M212.1 527.0h.01M212.6 491.5h.01M212.6 511.0h.01M212.7 513.2h.01M212.7 514.7h.01M212.9 513.7h.01M213.3 513.7h.01M213.9 513.6h.01M213.9 541.4h.01M215.1 516.3h.01M215.8 514.6h.01M216.0 519.5h.01M217.8 525.6h.01M218.2 535.3h.01M218.7 541.5h.01M218.8 519.2h.01M218.9 508.4h.01M219.2 509.6h.01M219.5 510.3h.01M219.6 496.4h.01M219.7 533.9h.01M220.1 517.0h.01M220.1 503.2h.01M221.0 508.9h.01M221.1 512.4h.01M222.0 501.3h.01M222.6 504.7h.01M222.8 510.3h.01M223.1 493.5h.01M223.5 519.7h.01M223.6 474.9h.01M224.5 506.1h.01M224.7 497.2h.01M225.1 502.4h.01M225.5 493.0h.01M225.8 491.6h.01M225.8 496.4h.01M226.1 515.6h.01M226.9 519.2h.01M227.0 517.4h.01M228.1 517.8h.01M228.2 519.8h.01M228.4 520.3h.01M228.7 502.7h.01M228.8 502.4h.01M230.0 530.5h.01M230.2 509.6h.01M230.3 509.1h.01M230.6 510.7h.01M231.7 509.1h.01M232.9 513.1h.01M233.3 529.5h.01M233.3 525.5h.01M233.4 526.5h.01M233.5 531.1h.01M233.8 530.0h.01M233.9 527.3h.01M235.1 521.6h.01M235.4 524.2h.01M236.4 521.6h.01M237.0 528.0h.01M237.1 529.6h.01M237.7 531.3h.01M238.0 536.3h.01M238.0 532.6h.01M238.2 523.1h.01M238.8 523.3h.01M239.7 551.1h.01M239.8 532.7h.01M240.0 538.1h.01M240.1 546.6h.01M240.5 533.6h.01M241.5 550.2h.01M241.7 537.2h.01M242.5 533.5h.01M242.8 547.9h.01M243.0 547.2h.01M243.3 553.0h.01M243.8 553.6h.01M243.8 550.2h.01M244.7 546.0h.01M245.1 545.0h.01M245.1 533.1h.01M246.1 543.7h.01M246.3 540.1h.01M246.5 540.5h.01M248.0 556.0h.01M248.2 539.4h.01M248.2 553.2h.01M249.1 533.5h.01M249.2 535.8h.01M249.6 550.7h.01M249.7 552.5h.01M250.1 578.1h.01M250.1 558.3h.01M250.7 557.1h.01M251.0 553.8h.01M251.1 555.5h.01M251.5 555.9h.01M251.9 547.3h.01M252.1 561.5h.01M252.2 551.5h.01M252.3 560.8h.01M252.3 566.6h.01M252.4 566.3h.01M253.3 565.3h.01M255.0 558.3h.01M256.2 548.8h.01M256.9 558.3h.01M257.3 564.6h.01M257.4 562.1h.01M257.5 548.9h.01M257.9 564.1h.01M258.1 566.6h.01M258.7 556.6h.01M259.3 571.1h.01M259.6 554.1h.01M260.0 569.3h.01M260.2 571.4h.01M260.8 559.7h.01M261.5 567.1h.01M261.7 571.4h.01M261.7 578.0h.01M262.7 566.0h.01M262.8 570.9h.01M262.8 565.6h.01M263.3 581.5h.01M263.8 575.7h.01M264.3 572.7h.01M264.5 576.1h.01M264.8 572.0h.01M266.1 570.3h.01M266.3 567.6h.01M266.9 564.1h.01M267.5 571.4h.01M268.2 567.7h.01M268.2 600.6h.01M269.3 585.1h.01M269.5 591.5h.01M269.6 594.9h.01M269.7 585.3h.01M269.7 584.5h.01M270.3 572.1h.01M270.9 571.8h.01M271.1 570.4h.01M271.4 581.9h.01M272.0 587.3h.01M272.4 589.9h.01M272.5 624.1h.01M272.7 627.0h.01M273.0 628.0h.01M273.6 616.5h.01M273.9 589.8h.01M275.8 595.7h.01M276.2 614.0h.01M276.6 617.2h.01M276.9 589.1h.01M277.3 585.3h.01M277.3 591.9h.01M277.4 584.4h.01M277.7 591.2h.01M277.8 595.0h.01M277.9 592.0h.01M277.9 587.2h.01M278.8 612.4h.01M279.4 611.0h.01M279.6 609.4h.01M280.4 598.5h.01M281.2 608.1h.01M281.4 608.2h.01M282.4 587.7h.01M282.7 581.6h.01M283.0 583.9h.01M283.1 579.2h.01M283.2 581.1h.01M283.3 574.0h.01M284.0 579.7h.01M284.2 588.7h.01M286.3 585.0h.01M286.7 591.3h.01M286.7 591.7h.01M286.7 569.8h.01M287.2 570.1h.01M287.2 586.4h.01M288.1 568.4h.01M288.5 570.9h.01M288.9 569.1h.01M288.9 565.6h.01M289.4 563.6h.01M289.5 563.0h.01M289.6 559.2h.01M289.8 569.6h.01M289.9 574.4h.01M291.0 575.9h.01M291.3 571.4h.01M292.4 575.9h.01M292.8 564.9h.01M293.7 533.2h.01M294.1 556.3h.01M294.3 550.5h.01M294.7 557.0h.01M294.7 558.1h.01M296.1 555.8h.01M296.2 555.4h.01M296.3 555.2h.01M296.9 550.8h.01M297.0 551.9h.01M297.5 556.1h.01M297.6 555.8h.01M298.2 548.0h.01M298.6 536.4h.01M299.3 539.3h.01M299.4 538.3h.01M299.5 544.5h.01M300.6 550.2h.01M300.7 546.1h.01M301.1 541.2h.01M332.1 524.3h.01M332.1 526.9h.01M332.6 534.9h.01M333.7 524.3h.01M333.7 528.6h.01M334.3 533.0h.01M335.0 542.4h.01M335.1 515.2h.01M335.4 512.6h.01M335.8 512.7h.01M336.0 515.9h.01M337.2 522.0h.01M337.4 537.2h.01M337.9 528.6h.01M338.0 525.1h.01M338.0 505.3h.01M338.1 531.3h.01M338.4 511.5h.01M339.5 542.8h.01M340.2 540.6h.01M340.5 542.9h.01M340.7 524.2h.01M341.1 521.7h.01M341.8 523.4h.01M342.0 521.4h.01M342.6 530.5h.01M342.8 524.5h.01M343.7 539.9h.01M344.1 542.3h.01M344.3 521.4h.01M344.9 533.3h.01M346.0 525.0h.01M346.1 530.4h.01M346.5 535.6h.01M346.9 547.1h.01M347.8 523.9h.01M348.0 525.8h.01M348.7 534.9h.01M348.7 525.0h.01M348.7 519.8h.01M349.2 526.8h.01M349.6 524.3h.01M349.8 527.2h.01M350.5 519.3h.01M351.0 520.2h.01M351.3 517.7h.01M351.3 551.0h.01M351.6 525.0h.01M351.7 552.1h.01M353.9 539.3h.01M354.2 531.5h.01M354.2 529.8h.01M354.5 517.8h.01M354.5 548.3h.01M355.0 544.8h.01M355.0 524.2h.01M355.2 510.9h.01M355.7 507.4h.01M356.1 504.8h.01M356.1 509.1h.01M356.4 521.5h.01M356.7 520.4h.01M356.8 516.1h.01M357.0 520.3h.01M357.2 542.6h.01M357.6 538.2h.01M359.2 524.6h.01M360.4 526.2h.01M360.4 527.2h.01M361.0 528.4h.01M361.3 521.5h.01M361.3 521.6h.01M361.5 526.6h.01M361.6 512.6h.01M361.6 522.2h.01M362.6 527.1h.01M363.8 513.0h.01M364.5 537.3h.01M364.6 538.6h.01M365.2 540.6h.01M365.6 513.6h.01M365.7 531.3h.01M366.0 534.9h.01M367.0 517.0h.01M367.3 527.6h.01M367.3 525.5h.01M367.4 513.4h.01M367.6 532.1h.01M367.7 533.6h.01M368.9 530.5h.01M369.3 535.7h.01M370.2 533.7h.01M370.3 527.6h.01M370.6 517.0h.01M370.6 520.3h.01M370.7 526.4h.01M371.2 526.4h.01M371.4 533.1h.01M371.6 532.4h.01M371.8 525.2h.01M372.6 523.5h.01M373.3 534.4h.01M373.6 528.3h.01M376.1 520.6h.01M376.4 533.1h.01M376.5 523.4h.01M376.6 521.6h.01M376.7 531.5h.01M376.8 527.8h.01M377.5 532.7h.01M377.7 506.4h.01M379.6 503.1h.01M379.8 506.0h.01M379.8 508.9h.01M379.8 504.7h.01M380.2 508.0h.01M380.2 533.4h.01M381.6 536.1h.01M381.6 531.3h.01M382.0 514.4h.01M382.3 517.9h.01M383.2 516.8h.01M383.3 527.7h.01M383.5 536.5h.01M383.8 518.2h.01M384.1 537.5h.01M384.5 537.8h.01M385.2 500.4h.01M385.3 496.7h.01M385.7 521.4h.01M385.8 525.5h.01M386.5 523.1h.01M386.6 524.8h.01M386.9 524.6h.01M387.8 527.5h.01M388.4 518.8h.01M388.5 514.4h.01M389.2 516.1h.01M389.5 525.8h.01M391.5 509.8h.01M391.6 509.5h.01M391.9 515.4h.01M392.0 504.3h.01M392.3 504.3h.01M392.6 511.4h.01M392.8 508.6h.01M393.1 515.0h.01M393.8 509.0h.01M394.2 506.8h.01M394.4 496.4h.01M394.9 497.2h.01M395.1 500.8h.01M395.2 507.2h.01M395.3 511.7h.01M395.5 509.8h.01M396.5 508.4h.01M396.6 516.6h.01M396.8 510.1h.01M397.2 510.9h.01M397.7 507.9h.01M398.2 498.4h.01M398.9 498.2h.01M399.2 515.7h.01M401.5 537.3h.01M401.5 532.9h.01M401.5 535.9h.01M402.2 542.4h.01M403.7 524.8h.01M403.7 547.8h.01M403.7 548.2h.01M403.8 535.5h.01M403.9 524.0h.01M404.2 548.8h.01M404.7 544.5h.01M404.8 525.3h.01M405.3 522.4h.01M405.3 519.5h.01M405.4 511.8h.01M405.6 515.5h.01M405.9 537.9h.01M406.2 546.5h.01M406.4 550.6h.01M408.3 548.2h.01M408.7 517.0h.01M408.9 521.6h.01M408.9 497.3h.01M409.2 528.9h.01M410.2 534.3h.01M411.0 539.8h.01M411.2 536.6h.01M411.4 532.9h.01M412.1 541.1h.01M412.2 524.7h.01M412.8 540.8h.01M412.8 531.8h.01M412.9 533.5h.01M412.9 554.5h.01M413.3 539.5h.01M414.0 531.3h.01M415.1 522.9h.01M415.3 517.2h.01M416.1 526.2h.01M416.2 526.1h.01M417.1 523.3h.01M417.1 535.8h.01M417.5 538.4h.01M417.5 499.9h.01M417.8 535.7h.01M418.1 523.9h.01M419.4 518.0h.01M419.7 517.9h.01M420.5 527.4h.01M420.5 521.6h.01M421.2 536.1h.01M421.3 531.7h.01M421.6 516.6h.01M422.0 516.2h.01M422.3 530.0h.01M422.3 528.0h.01M422.9 526.8h.01M423.4 527.1h.01M423.8 528.4h.01M424.3 533.6h.01M425.8 529.3h.01M425.8 530.7h.01M426.2 507.3h.01M426.4 522.1h.01M426.8 514.3h.01M427.0 520.8h.01M427.7 533.0h.01M427.7 521.8h.01M428.3 525.3h.01M428.3 537.8h.01M429.3 516.6h.01M429.4 516.3h.01M430.0 505.7h.01M430.1 543.3h.01M430.8 535.4h.01M431.2 540.3h.01M431.4 528.9h.01M431.5 516.9h.01M432.3 511.0h.01M433.2 511.3h.01M433.6 508.9h.01M433.7 517.8h.01M433.7 517.2h.01M434.0 515.2h.01M435.1 512.1h.01M435.2 505.8h.01M435.5 531.0h.01M435.5 531.7h.01M436.7 525.7h.01M436.8 525.5h.01M437.0 523.9h.01M438.1 502.3h.01M438.5 510.6h.01M438.8 512.9h.01M439.4 526.5h.01M439.7 520.6h.01M440.3 520.5h.01M440.4 518.0h.01M440.7 523.7h.01M441.0 527.8h.01M442.3 519.5h.01M443.0 512.5h.01M443.2 498.7h.01M443.3 498.4h.01M443.6 517.1h.01M444.2 505.9h.01M444.3 515.6h.01M444.7 515.7h.01M446.0 490.9h.01M446.5 494.7h.01M447.0 493.2h.01M447.7 496.1h.01M447.8 498.0h.01M448.2 529.1h.01M448.3 518.9h.01M448.4 488.1h.01M448.9 495.6h.01M449.2 489.9h.01M449.7 500.6h.01M450.0 497.4h.01M450.2 499.7h.01M451.3 495.5h.01M451.4 490.5h.01M451.6 507.1h.01M452.6 511.1h.01M452.9 506.2h.01M453.5 509.2h.01M453.6 511.3h.01M454.3 509.8h.01M454.5 504.9h.01M454.6 509.9h.01M455.0 515.1h.01M455.3 497.2h.01M456.3 497.6h.01M456.5 494.3h.01M456.8 493.8h.01M457.0 491.7h.01M457.2 503.5h.01M458.1 499.4h.01M458.3 493.4h.01M458.8 489.1h.01M459.1 497.7h.01M459.4 495.7h.01M459.5 494.6h.01M460.3 524.1h.01M460.4 524.0h.01M461.1 513.9h.01M461.7 508.0h.01M461.7 522.0h.01M462.5 524.5h.01M462.9 526.1h.01M462.9 524.2h.01M463.0 524.9h.01M463.1 522.0h.01M464.0 525.5h.01M464.8 528.7h.01M465.0 532.0h.01M465.9 533.2h.01M466.3 517.6h.01M466.9 527.8h.01M467.4 517.8h.01M467.4 536.7h.01M467.8 517.9h.01M467.8 518.6h.01M468.2 516.8h.01M468.7 520.9h.01M469.9 517.7h.01M469.9 529.7h.01M470.9 529.9h.01M471.2 534.1h.01M471.3 523.4h.01M471.8 513.9h.01M471.9 524.0h.01M472.5 520.7h.01M472.6 520.2h.01M472.8 531.0h.01M473.2 529.9h.01M474.0 531.2h.01M474.5 529.4h.01M474.6 517.8h.01M476.3 535.6h.01M476.9 529.6h.01M476.9 522.5h.01M477.0 532.6h.01M477.0 533.4h.01M477.8 526.6h.01M477.9 523.2h.01M479.1 521.3h.01M479.3 521.8h.01M479.6 536.3h.01M479.8 525.4h.01M480.0 532.6h.01M480.3 518.5h.01M480.3 523.4h.01M480.4 526.3h.01M481.3 535.9h.01M482.3 511.7h.01M482.5 521.4h.01M483.0 542.6h.01M484.4 538.9h.01M484.4 535.0h.01M484.5 517.5h.01M484.6 519.7h.01M484.8 518.2h.01M485.1 527.0h.01M485.5 528.1h.01M485.9 529.3h.01M485.9 539.2h.01M486.0 516.7h.01M486.3 530.9h.01M486.5 537.3h.01M487.5 541.1h.01M487.8 542.1h.01M488.0 538.9h.01M488.4 537.0h.01M488.5 542.8h.01M490.0 534.0h.01M491.0 542.6h.01M492.4 536.6h.01M492.5 533.2h.01M493.2 537.9h.01M493.3 524.8h.01M493.4 538.6h.01M493.6 539.1h.01M494.1 533.8h.01M494.2 527.3h.01M494.2 541.0h.01M495.0 531.3h.01M495.5 530.6h.01M495.8 507.7h.01M496.8 508.7h.01M496.8 552.0h.01M497.2 554.6h.01M497.7 554.6h.01M497.8 538.9h.01M498.1 526.2h.01M498.2 551.2h.01M498.5 511.0h.01M499.5 508.7h.01M499.8 554.6h.01M500.0 505.7h.01M500.6 496.9h.01M501.4 506.1h.01M501.7 511.0h.01M502.7 535.0h.01M502.9 535.6h.01M503.0 535.6h.01M503.0 531.3h.01M503.1 518.0h.01M503.5 529.3h.01M504.5 511.7h.01M504.7 509.2h.01M505.3 529.5h.01M505.6 543.5h.01M505.8 542.1h.01M506.2 547.1h.01M506.5 522.9h.01M506.8 527.7h.01M507.0 529.7h.01M507.1 549.8h.01M507.3 547.2h.01M507.8 548.1h.01M508.3 548.6h.01M508.3 550.8h.01M511.0 503.9h.01M511.3 504.5h.01M511.4 550.9h.01M511.6 551.5h.01M512.2 552.3h.01M513.1 502.8h.01M513.7 529.2h.01M513.7 532.9h.01M513.7 530.6h.01M514.6 520.0h.01M514.7 522.3h.01M514.7 532.6h.01M515.0 539.7h.01M516.1 551.3h.01M516.1 554.2h.01M516.7 550.4h.01M517.0 535.3h.01M517.1 548.1h.01M517.4 542.6h.01M518.1 542.9h.01M518.9 552.7h.01M519.4 552.9h.01M519.4 552.2h.01M519.4 541.2h.01M520.1 530.5h.01M520.3 535.8h.01M521.6 534.0h.01M521.6 533.6h.01M521.9 552.5h.01M522.1 553.8h.01M522.2 538.6h.01M522.8 545.8h.01M524.0 545.5h.01M524.5 542.1h.01M524.6 529.4h.01M524.7 531.3h.01M525.4 521.9h.01M526.4 490.0h.01M526.5 508.8h.01M527.0 507.2h.01M527.1 516.8h.01M527.5 517.3h.01M527.9 515.5h.01M528.5 519.0h.01M529.3 503.2h.01M529.6 497.5h.01M529.7 515.6h.01M529.7 519.2h.01M530.1 521.4h.01M532.2 522.5h.01M532.2 522.5h.01M532.3 519.5h.01M532.5 518.1h.01M532.9 512.9h.01M533.0 521.2h.01M533.0 492.7h.01M534.0 499.7h.01M534.2 523.1h.01M534.4 524.2h.01M534.5 515.9h.01M535.6 515.6h.01M537.4 494.3h.01M537.6 496.2h.01M537.6 496.6h.01M537.9 514.1h.01M537.9 501.8h.01M538.0 502.5h.01M538.2 507.8h.01M538.6 512.1h.01M539.3 506.9h.01M539.5 500.2h.01M539.5 501.5h.01M540.1 521.1h.01M540.1 517.4h.01M540.2 514.6h.01M540.8 531.9h.01M542.0 527.7h.01M542.2 528.3h.01M542.2 529.8h.01M542.9 511.3h.01M542.9 517.1h.01M543.0 531.7h.01M543.8 515.1h.01M544.6 515.4h.01M545.8 514.9h.01M546.2 545.5h.01M546.6 525.6h.01M546.6 524.9h.01M546.6 523.0h.01M547.4 525.2h.01M547.7 529.8h.01M548.0 525.9h.01M548.2 524.8h.01M548.6 543.1h.01M549.2 521.8h.01M549.4 527.9h.01M550.9 538.6h.01M551.5 544.6h.01M551.7 532.7h.01M552.2 532.3h.01M552.7 532.3h.01M553.0 539.0h.01M553.3 549.4h.01M553.8 536.9h.01M553.9 544.3h.01M554.2 529.4h.01M554.3 536.6h.01M554.6 535.6h.01M555.1 545.6h.01M555.2 541.0h.01M556.0 533.8h.01M556.7 525.9h.01M557.8 528.2h.01M557.9 525.1h.01M558.1 528.3h.01M558.5 526.3h.01M558.7 529.2h.01M559.0 536.7h.01M559.3 536.7h.01M559.5 539.3h.01M560.2 542.0h.01M560.4 538.9h.01M561.1 545.0h.01M561.3 529.6h.01M561.9 533.2h.01M562.8 544.7h.01M563.0 539.3h.01M563.3 541.8h.01M563.5 535.4h.01M563.5 530.5h.01M563.8 552.3h.01M564.6 554.6h.01M565.0 554.5h.01M565.5 531.3h.01M565.8 522.4h.01M566.5 539.0h.01M566.7 535.5h.01M567.4 558.3h.01M567.8 556.2h.01M567.8 532.9h.01M567.8 553.1h.01M568.6 549.2h.01M569.1 522.5h.01M569.7 523.8h.01M570.3 527.7h.01M570.8 529.3h.01M570.8 522.7h.01M570.9 529.5h.01M571.0 533.5h.01M572.4 531.0h.01M572.7 529.7h.01M572.7 532.4h.01M572.8 516.9h.01M573.1 536.5h.01M574.9 511.2h.01M574.9 534.0h.01M575.0 534.7h.01M575.1 534.5h.01M575.6 533.6h.01M575.8 525.8h.01M576.3 527.3h.01M576.8 524.2h.01M577.3 516.1h.01M577.6 538.1h.01M578.1 529.2h.01M578.8 539.2h.01M578.9 541.2h.01M579.6 544.5h.01M580.1 539.1h.01M580.3 547.2h.01M580.8 542.9h.01M581.1 546.3h.01M581.4 539.1h.01M582.0 538.0h.01M582.0 534.6h.01M583.0 547.5h.01M583.4 548.5h.01M583.6 546.7h.01M583.9 557.0h.01M584.0 553.8h.01M585.1 563.2h.01M585.4 569.5h.01M585.5 565.4h.01M585.5 568.5h.01M585.6 562.7h.01M586.0 552.7h.01M587.1 558.5h.01M587.7 552.6h.01M588.1 548.9h.01M588.1 553.0h.01M589.3 547.2h.01M589.3 562.1h.01M590.4 560.8h.01M591.4 552.9h.01M591.5 560.0h.01M591.6 553.7h.01M592.5 553.5h.01M592.5 553.8h.01M593.2 556.7h.01M593.6 556.1h.01M593.7 560.9h.01M593.9 561.4h.01M594.1 553.6h.01M594.6 560.6h.01M595.6 539.6h.01M595.8 537.8h.01M595.9 546.1h.01M596.7 533.6h.01M597.0 546.8h.01M597.8 544.1h.01M597.8 543.0h.01M597.9 543.8h.01M598.1 534.9h.01M598.5 543.3h.01M598.6 549.0h.01M599.3 545.8h.01M600.8 547.6h.01M602.0 545.9h.01M602.0 546.0h.01M602.5 565.1h.01M602.5 558.0h.01M602.9 551.5h.01M603.2 554.6h.01M603.2 562.6h.01M603.4 565.2h.01M603.4 542.8h.01M604.2 553.5h.01M604.6 560.2h.01M606.8 567.4h.01M607.1 573.3h.01M607.7 572.8h.01M607.9 567.8h.01M608.2 542.2h.01M608.2 529.9h.01M608.4 563.3h.01M609.1 560.2h.01M609.2 549.1h.01M609.3 556.8h.01M609.4 532.0h.01M610.0 543.9h.01M610.7 551.4h.01M611.1 553.9h.01M611.7 557.0h.01M611.9 560.6h.01M612.1 537.6h.01M612.2 537.4h.01M612.4 553.9h.01M613.6 541.5h.01M613.7 546.9h.01M614.2 546.2h.01M614.3 542.5h.01M614.8 547.7h.01M615.7 539.4h.01M617.3 547.0h.01M617.4 525.4h.01M617.5 547.2h.01M617.5 555.0h.01M617.6 528.8h.01M618.7 558.7h.01M619.1 556.2h.01M619.2 553.2h.01M619.2 546.5h.01M619.7 543.3h.01M619.9 544.0h.01M620.2 539.1h.01M621.0 553.0h.01M621.8 555.2h.01M622.6 552.2h.01M622.8 543.2h.01M622.8 561.4h.01M622.9 561.0h.01M622.9 569.5h.01M623.2 563.1h.01M623.8 548.1h.01M624.4 539.4h.01M624.7 542.3h.01M625.0 536.3h.01M625.1 561.8h.01M625.2 562.7h.01M625.6 563.2h.01M626.5 534.7h.01M626.8 553.5h.01M627.4 552.7h.01M628.1 543.6h.01M628.4 556.1h.01M628.5 542.8h.01M629.1 541.8h.01M629.9 538.1h.01M630.1 549.1h.01M630.8 557.4h.01M630.9 557.3h.01M631.2 543.5h.01M632.3 535.7h.01M632.3 558.6h.01M633.3 546.4h.01M633.4 551.2h.01M633.7 545.0h.01M634.5 564.7h.01M634.8 547.7h.01M634.9 542.3h.01M635.1 551.1h.01M635.4 569.5h.01M636.2 546.6h.01M636.5 559.1h.01M636.7 560.2h.01M636.9 558.4h.01M637.7 560.6h.01M639.2 561.6h.01M639.2 548.6h.01M639.4 548.0h.01M639.7 550.0h.01M639.7 546.5h.01M641.1 538.8h.01M641.4 538.7h.01M641.8 548.3h.01M642.1 534.2h.01M643.2 522.9h.01M643.4 532.6h.01M643.4 530.2h.01M644.1 529.2h.01M644.2 542.5h.01M644.6 517.3h.01M644.8 523.0h.01M645.0 523.2h.01M645.1 525.8h.01M645.2 529.2h.01M645.3 548.4h.01M645.7 541.1h.01M646.5 543.0h.01M647.1 548.1h.01M647.7 542.8h.01M647.8 505.6h.01M647.9 544.0h.01M648.0 542.7h.01M649.4 529.5h.01M649.5 505.1h.01M650.3 524.4h.01M650.6 527.1h.01M651.5 528.1h.01M651.9 520.2h.01M652.3 511.2h.01M652.7 536.0h.01M652.9 538.1h.01M653.3 530.5h.01M653.9 529.4h.01M654.2 530.5h.01M654.3 539.0h.01M654.3 515.9h.01M655.8 516.8h.01M656.2 522.8h.01M656.6 524.2h.01M656.6 536.3h.01M657.6 532.0h.01M658.0 524.8h.01M658.1 511.7h.01M658.1 518.9h.01M658.3 530.4h.01M659.2 515.6h.01M659.5 519.1h.01M659.6 523.6h.01M660.2 529.5h.01M660.2 527.3h.01M660.9 526.5h.01M660.9 526.6h.01M660.9 520.4h.01M661.8 533.8h.01M662.7 523.4h.01M663.7 510.5h.01M663.8 518.0h.01M664.0 525.4h.01M664.3 528.3h.01M664.6 528.9h.01M665.1 528.5h.01M666.3 530.2h.01M666.5 530.4h.01M666.7 531.9h.01M666.7 528.9h.01M666.8 530.9h.01M667.5 513.0h.01M668.3 512.7h.01M668.9 512.7h.01M669.1 528.6h.01M669.3 528.5h.01M669.7 527.8h.01M670.1 520.1h.01M670.1 517.7h.01M670.9 508.6h.01M672.1 507.9h.01M672.4 510.9h.01M672.4 508.1h.01M673.1 507.9h.01M673.2 501.9h.01M674.1 504.3h.01M674.1 503.4h.01M674.3 522.4h.01M674.7 525.8h.01M675.7 528.2h.01M677.0 525.1h.01M677.3 517.9h.01M677.7 510.8h.01M677.8 510.1h.01M678.0 509.8h.01M678.1 504.3h.01M679.1 522.8h.01M679.2 521.2h.01M679.4 521.1h.01M679.5 529.8h.01M680.0 539.1h.01M680.4 529.3h.01M680.7 530.3h.01M680.7 528.6h.01M681.6 518.6h.01M681.9 508.0h.01M682.0 513.8h.01M682.1 505.5h.01M682.7 513.8h.01M683.3 514.4h.01M683.4 510.4h.01M683.9 514.1h.01M684.7 522.5h.01M685.2 496.6h.01M685.6 511.9h.01M686.1 507.4h.01M686.3 506.3h.01M686.4 505.8h.01M686.8 505.7h.01M687.5 503.6h.01M687.6 508.0h.01M688.3 508.0h.01M688.6 515.0h.01M688.6 516.5h.01M688.7 516.5h.01M690.2 501.6h.01M690.5 522.2h.01M690.9 523.2h.01M691.2 503.4h.01M691.3 503.2h.01M691.5 502.7h.01M691.6 515.3h.01M692.1 513.9h.01M693.0 527.7h.01M694.1 529.1h.01M694.5 504.0h.01M694.7 507.8h.01M695.5 505.0h.01M696.5 519.6h.01M696.8 537.0h.01M697.5 531.9h.01M697.9 521.0h.01M698.2 523.7h.01M698.3 534.7h.01M698.3 526.5h.01M698.4 526.8h.01M698.7 525.7h.01M699.6 510.8h.01M699.8 533.4h.01M700.0 530.8h.01M700.1 532.8h.01M700.3 534.1h.01M700.6 531.3h.01M700.7 530.3h.01M701.3 516.2h.01M701.4 533.0h.01M701.5 531.9h.01M701.7 535.3h.01M702.0 518.3h.01M703.7 535.4h.01M704.0 528.8h.01M705.5 515.9h.01M705.8 494.8h.01M706.0 519.8h.01M706.0 508.8h.01M706.4 486.7h.01M706.6 487.1h.01M706.7 517.3h.01M707.5 487.7h.01M707.8 486.6h.01M708.1 493.6h.01M708.5 520.0h.01M709.9 518.2h.01M710.8 522.1h.01M710.8 548.4h.01M710.9 540.3h.01M711.3 542.1h.01M711.5 543.9h.01M712.1 540.0h.01M712.2 537.5h.01M712.6 546.2h.01M712.6 522.1h.01M712.7 539.8h.01M713.7 549.7h.01M713.9 544.7h.01M715.0 545.2h.01M715.6 539.9h.01M715.9 537.6h.01M716.1 539.4h.01M716.4 535.7h.01M717.3 537.4h.01M717.8 545.4h.01M718.0 540.9h.01M718.2 540.1h.01M719.5 542.0h.01M719.6 536.6h.01M719.8 539.2h.01M720.1 540.2h.01M720.2 562.5h.01M720.4 555.7h.01M721.0 556.6h.01M721.8 547.2h.01M721.9 542.0h.01M722.7 547.4h.01M722.9 546.1h.01M723.0 556.4h.01M724.3 540.0h.01M724.9 538.0h.01M725.0 539.9h.01M725.4 538.3h.01M725.6 539.6h.01M726.5 536.0h.01M726.6 549.8h.01M726.8 535.0h.01M726.9 534.0h.01M727.7 529.4h.01M728.8 521.2h.01M728.9 531.6h.01M729.2 538.7h.01M729.4 536.8h.01M729.7 539.3h.01M730.1 527.9h.01M730.2 517.9h.01M730.4 517.8h.01M731.1 531.4h.01M731.7 529.3h.01M731.8 516.2h.01M732.2 533.2h.01M732.2 532.2h.01M733.2 519.8h.01M734.3 529.1h.01M734.5 532.9h.01M734.9 515.7h.01M735.1 545.8h.01M735.5 548.8h.01M735.5 558.3h.01M735.9 560.3h.01M736.3 545.4h.01M736.4 547.0h.01M737.3 564.6h.01M737.8 548.3h.01M737.9 545.9h.01M739.0 545.4h.01M739.3 546.0h.01M739.7 547.6h.01M740.0 556.0h.01M740.2 552.2h.01M740.2 540.6h.01M740.4 556.2h.01M741.2 529.2h.01M741.6 534.4h.01M742.1 533.3h.01M742.5 553.2h.01M742.7 550.4h.01M742.7 537.3h.01M743.8 536.4h.01M744.3 535.5h.01M745.5 573.3h.01M745.6 571.7h.01M745.9 571.8h.01M746.2 536.0h.01M746.5 562.2h.01M746.8 547.4h.01M748.0 549.7h.01M748.1 558.2h.01M748.7 539.3h.01M748.9 554.1h.01M749.6 571.1h.01M749.6 536.4h.01M750.6 554.6h.01M751.9 547.1h.01M752.1 533.5h.01M752.9 538.5h.01M753.2 539.2h.01M753.5 536.7h.01M753.8 547.6h.01M754.0 549.9h.01M754.0 540.8h.01M754.1 546.4h.01M754.4 537.8h.01M754.8 541.9h.01M755.0 534.7h.01M755.1 536.5h.01M755.2 542.0h.01M755.7 544.0h.01M756.0 524.2h.01M756.4 527.5h.01M756.5 543.6h.01M756.9 534.5h.01M757.7 526.9h.01M757.8 528.2h.01M758.4 531.9h.01M759.2 526.1h.01M760.0 552.4h.01M760.6 548.2h.01M761.1 546.4h.01M761.2 549.5h.01M761.7 547.8h.01M762.0 547.9h.01M762.1 532.6h.01M762.7 535.3h.01M763.2 536.8h.01M763.9 540.3h.01M764.2 541.5h.01M764.7 533.6h.01M765.5 523.3h.01M766.1 547.5h.01M766.1 547.4h.01M766.3 544.0h.01M766.8 553.4h.01M767.0 531.7h.01M767.6 526.9h.01M768.2 532.0h.01M768.3 536.0h.01M768.6 540.8h.01M768.9 521.9h.01M769.3 558.2h.01M770.3 537.0h.01M771.1 540.2h.01M771.3 540.3h.01M771.4 545.4h.01M772.3 544.1h.01M772.8 536.5h.01M772.8 535.8h.01M772.9 529.4h.01M773.3 530.5h.01M773.6 527.3h.01M773.8 525.4h.01M774.5 531.3h.01M775.8 518.6h.01M776.1 529.8h.01M776.2 533.0h.01M776.3 534.1h.01M777.2 531.8h.01M777.4 527.0h.01M777.4 522.8h.01M777.5 515.6h.01M778.3 523.8h.01M779.1 528.4h.01M779.5 528.9h.01M779.9 535.0h.01M781.2 506.7h.01M781.3 510.3h.01M781.4 532.8h.01M781.6 518.1h.01M781.7 514.9h.01M781.8 515.6h.01M782.9 518.0h.01M783.1 532.5h.01M783.7 530.0h.01M784.3 512.1h.01M784.6 530.5h.01M784.7 510.0h.01M785.0 492.6h.01M786.0 516.7h.01M786.0 501.4h.01M786.2 498.0h.01M786.6 506.3h.01M786.7 506.6h.01M786.7 513.0h.01M787.8 511.7h.01M788.7 509.9h.01M788.9 515.0h.01M789.7 519.2h.01M789.8 517.0h.01M790.1 535.6h.01M790.2 534.2h.01M790.2 533.8h.01M790.3 532.1h.01M790.3 527.1h.01M790.4 526.3h.01M790.4 524.9h.01M790.9 535.6h.01M791.0 530.4h.01M791.8 535.3h.01M793.7 538.0h.01M794.1 528.8h.01M795.1 528.7h.01M795.3 527.6h.01M795.5 506.1h.01M795.9 508.4h.01M796.1 507.6h.01M796.3 516.2h.01M796.7 515.4h.01M797.3 515.7h.01M797.8 512.4h.01M797.9 529.9h.01M798.4 517.8h.01M798.8 521.4h.01M800.2 499.0h.01M800.2 499.5h.01M800.4 511.1h.01M801.3 496.0h.01M802.6 513.5h.01M803.4 515.1h.01M803.6 513.9h.01M803.8 493.1h.01M804.0 505.7h.01M804.5 491.3h.01M804.5 492.3h.01M804.6 507.6h.01M805.1 506.3h.01M805.8 539.2h.01M806.0 525.0h.01M806.3 519.1h.01M806.3 518.6h.01M806.4 511.4h.01M807.2 513.9h.01M807.4 532.9h.01M808.9 536.4h.01M809.0 519.0h.01M809.1 521.5h.01M809.4 513.0h.01M810.5 527.4h.01M810.5 519.4h.01M811.3 512.4h.01M811.6 539.4h.01M812.8 520.8h.01M812.9 531.5h.01M813.6 529.9h.01M813.9 533.3h.01M814.3 533.4h.01M814.4 529.3h.01M814.6 515.0h.01M814.7 532.3h.01M815.2 518.3h.01M815.7 517.0h.01M816.0 521.3h.01M816.1 525.1h.01M816.3 523.1h.01M816.7 520.2h.01M817.2 521.2h.01M818.0 523.6h.01M818.0 524.7h.01M818.9 521.2h.01M819.1 524.9h.01M819.4 521.7h.01M820.3 496.5h.01M821.0 499.3h.01M821.3 498.2h.01M822.9 482.1h.01M822.9 490.4h.01M823.5 503.5h.01M824.1 498.3h.01M824.1 499.0h.01M824.1 498.1h.01M824.2 502.6h.01M824.4 479.4h.01M824.5 486.5h.01M825.3 508.6h.01M826.0 486.7h.01M826.3 486.0h.01M827.0 507.3h.01M827.5 495.2h.01M827.8 497.2h.01M828.0 501.3h.01M829.1 502.9h.01M829.2 504.6h.01M829.2 502.4h.01M829.4 512.2h.01M829.5 505.2h.01M831.2 505.2h.01M831.2 504.2h.01M831.5 508.1h.01M831.6 501.7h.01M831.9 517.1h.01M832.3 492.2h.01M832.8 492.3h.01M832.8 492.2h.01M833.2 493.3h.01M833.2 495.3h.01M833.3 500.2h.01M833.7 492.3h.01M835.1 506.6h.01M835.1 508.4h.01M836.3 544.1h.01M836.3 525.9h.01M837.0 509.7h.01M837.1 525.8h.01M837.4 530.4h.01M837.9 510.8h.01M838.1 511.2h.01M838.5 514.6h.01M839.0 518.4h.01M839.3 507.5h.01M840.1 508.4h.01M840.2 506.3h.01M840.9 532.4h.01M841.3 522.1h.01M842.2 514.2h.01M842.4 527.8h.01M842.4 526.2h.01M843.7 509.7h.01M844.0 526.2h.01M844.0 525.4h.01M844.4 511.9h.01M844.7 515.6h.01M845.1 513.2h.01M846.0 499.6h.01M846.3 526.6h.01M846.7 507.8h.01M847.1 515.7h.01M847.3 526.2h.01M847.6 518.3h.01M847.9 499.3h.01M848.5 497.6h.01M848.5 509.1h.01M849.7 511.1h.01M849.9 504.2h.01M850.1 510.8h.01M850.4 519.0h.01M850.7 525.2h.01M851.2 525.3h.01M851.5 524.9h.01M851.6 528.4h.01M852.0 501.4h.01M852.4 499.8h.01M853.6 495.6h.01M854.3 513.6h.01M854.6 497.9h.01M854.7 501.4h.01M855.0 511.4h.01M855.5 519.4h.01M855.7 510.6h.01M856.0 525.0h.01M856.5 524.7h.01M856.6 513.7h.01M857.2 533.2h.01M857.6 523.9h.01M857.9 521.5h.01M857.9 523.3h.01M858.3 513.4h.01M859.6 510.2h.01M860.3 508.1h.01M860.4 506.8h.01M860.5 494.3h.01M860.6 494.0h.01M860.6 513.7h.01M860.9 483.5h.01M862.7 483.9h.01M862.8 504.0h.01M863.2 484.6h.01M863.3 476.3h.01M863.8 496.9h.01M864.1 496.9h.01M865.1 498.3h.01M865.2 498.9h.01M865.5 499.6h.01M865.5 503.2h.01M866.2 499.4h.01M866.4 505.8h.01M866.4 500.9h.01M866.8 495.2h.01M867.2 499.2h.01M868.3 501.0h.01M868.9 498.9h.01M869.0 496.9h.01M870.4 515.9h.01M870.7 514.8h.01M871.1 511.7h.01M871.5 513.2h.01M871.9 505.4h.01M872.9 504.9h.01M873.1 504.2h.01M873.3 521.1h.01M873.5 499.1h.01M873.7 514.2h.01M874.0 498.9h.01M874.8 506.8h.01M875.1 514.2h.01M875.4 523.8h.01M875.4 512.1h.01M875.7 517.7h.01M875.9 507.1h.01M876.3 508.9h.01M876.5 512.3h.01M876.8 522.6h.01M877.2 523.6h.01M877.6 523.2h.01M878.2 524.1h.01M879.7 516.4h.01M880.4 504.8h.01M880.6 505.6h.01M880.8 516.6h.01M880.9 510.6h.01M881.5 517.0h.01M881.8 525.2h.01M882.0 518.9h.01M882.1 522.7h.01M883.6 522.0h.01M883.6 517.5h.01M883.9 501.6h.01M884.1 501.8h.01M885.6 504.5h.01M885.8 519.7h.01M885.9 523.9h.01M887.0 502.6h.01M887.7 504.9h.01M887.8 501.5h.01M888.3 510.9h.01M888.7 510.8h.01M888.8 513.1h.01M889.4 511.2h.01M889.6 518.7h.01M889.9 521.5h.01M890.4 503.5h.01M891.0 520.1h.01M891.2 503.4h.01M891.3 503.2h.01M891.7 497.4h.01M892.2 517.8h.01M892.8 516.2h.01M893.7 502.8h.01M893.8 522.7h.01M893.9 504.6h.01M894.2 523.5h.01M894.5 524.7h.01M895.8 513.8h.01M896.5 512.3h.01M896.6 510.2h.01M896.7 508.8h.01M897.8 525.8h.01M898.0 526.2h.01M898.2 505.1h.01M898.3 505.0h.01M898.5 518.0h.01M899.0 519.5h.01M899.5 519.1h.01M899.9 524.6h.01M900.3 506.2h.01M900.4 519.1h.01M900.6 518.7h.01M900.7 518.7h.01M900.8 517.7h.01M900.8 508.7h.01M901.0 507.0h.01M901.2 514.3h.01M901.9 495.2h.01M902.6 493.7h.01M904.5 516.5h.01M905.0 517.0h.01M905.0 497.5h.01M905.8 511.9h.01M906.3 510.8h.01M907.1 509.7h.01M907.2 507.4h.01M907.4 512.3h.01M907.6 511.6h.01M908.2 516.6h.01M908.4 494.9h.01M908.4 513.4h.01M909.3 511.9h.01M909.4 504.3h.01M910.2 508.3h.01M910.4 507.6h.01M911.1 493.6h.01M911.2 522.8h.01M911.9 497.6h.01M912.5 500.0h.01M913.5 517.8h.01M913.6 509.9h.01M914.3 507.7h.01M914.5 520.4h.01M914.7 497.1h.01M915.0 509.2h.01M915.2 521.5h.01M915.3 535.0h.01M915.4 524.4h.01M915.5 533.0h.01M916.1 531.7h.01M917.0 532.6h.01M917.2 530.8h.01M917.4 517.6h.01M917.8 518.4h.01M918.4 518.5h.01M919.9 508.2h.01M920.0 514.6h.01M920.5 544.3h.01M920.8 533.1h.01M921.4 532.7h.01M921.4 539.9h.01M921.5 546.6h.01M921.8 538.1h.01M922.3 538.4h.01M922.4 540.7h.01M922.7 537.6h.01M923.1 549.0h.01M923.5 544.1h.01M924.0 554.4h.01M925.3 523.0h.01M925.3 537.1h.01M925.8 528.3h.01M926.4 525.5h.01M927.0 518.9h.01M927.1 528.5h.01M928.0 520.0h.01M928.1 539.0h.01M928.9 530.9h.01M929.1 529.3h.01M929.5 532.2h.01M929.9 515.6h.01M930.1 550.0h.01M930.6 555.6h.01M931.0 557.6h.01M931.4 554.3h.01M931.9 555.1h.01M931.9 526.9h.01M933.0 527.5h.01M933.1 525.6h.01M933.6 525.4h.01M934.1 529.6h.01M934.2 528.3h.01M934.4 530.0h.01M935.1 528.9h.01M935.3 533.0h.01M935.4 527.1h.01M935.8 515.1h.01M935.9 508.9h.01M936.3 514.9h.01M937.1 524.7h.01M937.4 525.0h.01M937.9 525.5h.01M938.2 531.3h.01M938.7 528.7h.01M939.9 526.9h.01M940.0 508.8h.01M941.8 509.2h.01M941.8 516.4h.01M942.0 518.1h.01M942.6 514.9h.01M943.0 521.6h.01M943.1 510.5h.01M943.2 510.6h.01M943.3 507.3h.01M943.6 503.8h.01M943.9 503.7h.01M944.1 509.7h.01M945.1 511.2h.01M945.6 504.1h.01M945.8 497.0h.01M946.4 496.5h.01M946.5 494.1h.01M946.8 494.5h.01M947.3 499.8h.01M948.0 497.2h.01M948.2 500.7h.01M948.7 515.0h.01M949.5 492.4h.01M949.5 487.4h.01M950.6 508.3h.01M950.7 505.9h.01M951.1 509.9h.01M951.3 507.0h.01M952.6 517.3h.01M952.6 508.0h.01M953.0 511.1h.01M953.4 518.2h.01M953.5 517.6h.01M954.2 516.7h.01M954.8 509.0h.01M954.9 509.8h.01M955.2 486.8h.01M955.3 488.6h.01M955.6 491.0h.01M955.7 501.3h.01M957.6 515.0h.01M957.9 517.0h.01M958.3 517.7h.01M959.2 503.1h.01M959.3 491.0h.01M959.4 503.8h.01M959.7 500.5h.01M959.7 497.7h.01M960.2 498.8h.01M961.1 503.7h.01M961.9 505.9h.01M962.0 495.3h.01M963.0 508.4h.01M963.3 495.0h.01M963.5 490.3h.01M963.6 490.3h.01M963.8 509.6h.01M964.2 485.8h.01M964.3 505.6h.01M964.6 505.6h.01M965.7 499.0h.01M966.2 481.2h.01M966.7 485.5h.01M967.1 484.7h.01M967.7 478.1h.01M968.0 479.7h.01M968.1 478.7h.01M968.1 499.0h.01M968.2 486.2h.01M968.6 480.2h.01M968.8 492.0h.01M969.0 486.4h.01M970.2 507.3h.01M970.8 503.8h.01M971.4 507.9h.01M971.7 501.2h.01M972.1 498.8h.01M972.4 487.5h.01M972.5 501.9h.01M973.3 500.3h.01M974.0 482.6h.01M974.2 485.5h.01M974.5 498.7h.01M975.0 502.4h.01M975.3 498.9h.01M975.7 481.2h.01M975.8 499.0h.01M976.2 496.8h.01M976.4 496.1h.01M976.4 495.1h.01M976.7 480.5h.01M977.4 480.6h.01M978.5 481.7h.01M978.8 492.2h.01M978.8 502.2h.01M979.3 492.3h.01M980.5 510.7h.01M981.2 509.5h.01M981.5 501.4h.01M982.7 495.7h.01M982.7 499.9h.01M982.9 498.6h.01M983.0 488.7h.01M983.0 499.6h.01M983.5 492.0h.01M983.6 492.4h.01M984.0 491.6h.01M984.2 508.2h.01M985.5 528.1h.01M986.9 508.6h.01M987.0 527.0h.01M987.2 527.2h.01M987.5 518.2h.01M987.8 529.0h.01M988.3 517.8h.01M988.5 530.2h.01M989.1 511.9h.01M989.2 511.4h.01M989.5 517.8h.01M989.7 526.5h.01M991.0 499.1h.01M991.1 509.1h.01M991.8 505.1h.01M992.0 507.1h.01M992.4 501.6h.01M993.5 523.3h.01M993.9 520.4h.01M994.0 498.3h.01M994.1 501.4h.01M994.5 495.8h.01M994.7 493.6h.01M994.9 516.4h.01M995.8 515.4h.01M996.7 518.0h.01M997.5 512.2h.01M997.7 505.3h.01M998.1 509.0h.01M998.5 511.8h.01M998.6 500.5h.01M998.6 512.3h.01M999.1 512.4h.01M999.2 527.9h.01M999.5 508.9h.01M999.7 502.8h.01M1000.3 526.9h.01M1000.6 533.0h.01M1000.7 536.8h.01M1000.8 520.1h.01M1001.3 519.5h.01M1001.9 523.3h.01M1002.6 525.0h.01M1003.6 513.9h.01M1003.6 518.4h.01M1003.8 524.2h.01M1004.3 525.5h.01M1004.8 529.6h.01M1005.4 512.7h.01M1006.3 511.8h.01M1006.5 513.6h.01M1006.7 530.9h.01M1006.9 514.3h.01M1007.4 539.0h.01M1008.4 533.9h.01M1008.9 520.0h.01M1009.1 518.1h.01M1009.8 526.7h.01M1009.9 516.8h.01M1009.9 510.3h.01M1010.3 519.9h.01M1010.9 521.0h.01M1012.1 523.8h.01M1012.6 525.8h.01M1013.1 511.4h.01M1013.2 532.2h.01M1013.6 511.2h.01M1013.7 507.1h.01M1013.9 534.3h.01M1014.2 526.5h.01M1014.3 529.0h.01M1014.6 530.8h.01M1015.7 511.6h.01M1015.9 510.1h.01M1016.1 512.7h.01M1016.1 510.1h.01M1016.5 512.1h.01M1017.4 516.3h.01M1017.5 511.4h.01M1017.9 531.8h.01M1018.3 532.7h.01M1018.5 515.4h.01M1018.9 534.3h.01M1018.9 536.1h.01M1020.3 542.4h.01M1021.1 531.6h.01M1021.5 522.2h.01M1021.6 520.6h.01M1022.7 516.8h.01M1022.8 515.0h.01M1023.0 541.5h.01M1023.1 542.3h.01M1023.9 538.4h.01M1024.5 526.9h.01M1024.8 524.9h.01M1025.0 515.3h.01M1025.3 548.5h.01M1025.9 538.7h.01M1026.7 549.7h.01M1026.9 556.8h.01M1026.9 540.4h.01M1027.1 536.1h.01M1027.6 538.3h.01M1028.3 536.7h.01M1029.1 554.9h.01M1029.1 561.5h.01M1029.2 561.5h.01M1029.9 536.8h.01M1030.1 556.8h.01M1030.3 551.9h.01M1030.4 545.4h.01M1030.6 547.1h.01M1031.2 546.6h.01M1031.8 567.8h.01M1032.3 569.2h.01M1033.1 546.7h.01M1033.1 545.4h.01M1033.4 548.3h.01M1034.3 551.3h.01M1034.8 557.2h.01M1035.7 531.8h.01M1035.7 535.2h.01M1036.1 536.0h.01M1036.5 532.0h.01M1036.9 512.0h.01M1037.3 513.5h.01M1037.8 534.6h.01M1038.2 532.8h.01M1038.3 529.9h.01M1038.4 517.6h.01M1038.7 533.1h.01M1038.8 528.9h.01M1040.2 530.0h.01M1040.5 537.2h.01M1040.9 528.2h.01M1042.8 527.6h.01M1043.0 519.2h.01M1043.0 495.1h.01M1043.3 513.2h.01M1043.3 512.4h.01M1043.5 538.8h.01M1044.1 534.9h.01M1044.3 522.4h.01M1044.4 524.5h.01M1045.0 529.1h.01M1045.2 510.4h.01M1045.6 533.2h.01M1045.9 523.1h.01M1046.1 525.3h.01M1046.5 510.5h.01M1046.6 520.6h.01M1046.9 532.1h.01M1047.8 517.0h.01M1048.3 514.1h.01M1048.4 530.0h.01M1048.6 530.0h.01M1050.0 510.7h.01M1050.1 516.0h.01M1050.2 524.7h.01M1051.1 517.8h.01M1051.4 515.0h.01M1052.3 513.2h.01M1052.6 524.2h.01M1052.7 524.0h.01M1052.7 516.3h.01M1053.8 511.6h.01M1053.9 524.9h.01M1054.7 519.1h.01M1055.5 498.8h.01M1055.7 498.8h.01M1056.4 494.3h.01M1056.6 499.3h.01M1056.6 495.3h.01M1057.5 498.1h.01M1058.1 502.5h.01M1058.1 498.4h.01M1058.2 502.5h.01M1058.2 502.5h.01M1059.8 493.2h.01M1060.0 502.9h.01M1061.1 516.5h.01M1061.1 508.6h.01M1061.3 503.8h.01M1061.6 499.5h.01M1062.1 515.7h.01M1062.6 516.9h.01M1063.0 501.8h.01M1063.3 505.8h.01M1063.6 516.6h.01M1063.9 495.1h.01M1064.4 512.4h.01M1064.8 511.8h.01M1065.1 511.7h.01M1065.8 496.9h.01M1066.0 495.4h.01M1066.4 517.1h.01M1067.0 500.3h.01M1067.0 500.5h.01M1067.2 501.7h.01M1067.7 494.3h.01M1067.8 490.8h.01M1068.1 495.3h.01M1068.4 499.4h.01M1069.2 491.1h.01M1070.2 498.0h.01M1070.5 495.3h.01M1071.6 489.4h.01M1071.9 490.6h.01M1072.0 490.6h.01M1072.3 506.9h.01M1072.5 504.4h.01M1072.9 504.3h.01M1073.1 494.0h.01M1074.1 494.0h.01M1074.3 497.0h.01M1075.0 493.5h.01M1075.1 499.3h.01M1075.2 478.0h.01M1075.4 491.4h.01M1076.2 489.0h.01M1076.4 494.6h.01M1076.5 489.7h.01M1077.6 492.5h.01M1078.7 490.5h.01M1078.9 482.5h.01M1079.3 481.1h.01M1079.4 499.1h.01M1079.6 497.3h.01M1080.0 499.7h.01M1080.1 498.4h.01M1080.5 483.4h.01M1080.5 504.0h.01M1080.6 494.7h.01M1081.5 487.8h.01M1082.1 482.4h.01M1082.2 497.2h.01M1082.6 487.4h.01M1083.3 489.6h.01M1083.9 489.0h.01M1084.3 504.1h.01M1085.0 499.2h.01M1085.1 497.7h.01M1085.2 481.5h.01M1085.4 482.6h.01M1085.4 506.0h.01M1085.6 485.3h.01M1085.7 483.6h.01M1087.4 500.6h.01M1087.4 504.7h.01M1088.6 500.3h.01M1088.8 494.8h.01M1089.1 495.4h.01M1090.2 523.5h.01M1090.4 517.3h.01M1090.4 515.4h.01M1090.5 513.1h.01M1090.7 511.8h.01M1090.8 515.7h.01M1090.9 519.1h.01M1091.1 515.0h.01M1091.8 526.4h.01M1092.7 528.1h.01M1093.5 531.5h.01M1095.0 532.8h.01M1095.9 533.4h.01M1096.0 532.4h.01M1096.0 501.8h.01M1096.1 521.3h.01M1096.7 534.8h.01M1096.9 533.0h.01M1097.2 527.1h.01M1097.2 528.5h.01M1097.4 509.3h.01M1097.8 508.3h.01M1098.8 501.9h.01M1099.8 518.4h.01M1100.1 505.3h.01M1100.6 511.5h.01M1100.7 496.9h.01M1101.3 499.2h.01M1101.8 514.1h.01M1101.8 507.4h.01M1102.3 497.8h.01M1102.5 517.6h.01M1102.9 499.7h.01M1103.7 500.4h.01M1103.7 511.3h.01M1104.4 513.0h.01M1106.1 507.4h.01M1106.5 511.9h.01M1106.6 527.6h.01M1106.9 529.7h.01M1107.4 529.7h.01M1107.7 530.4h.01M1108.1 526.4h.01M1108.2 518.9h.01M1108.4 505.1h.01M1108.6 503.0h.01M1109.5 500.9h.01M1109.9 514.0h.01M1111.1 491.4h.01M1111.1 488.5h.01M1111.3 491.1h.01M1111.4 516.2h.01M1111.6 509.4h.01M1111.8 498.0h.01M1111.9 501.7h.01M1112.8 516.2h.01M1112.9 518.6h.01M1112.9 503.8h.01M1113.7 521.3h.01M1114.5 520.5h.01M1115.4 489.9h.01M1115.6 489.8h.01M1116.1 489.8h.01M1116.3 494.0h.01M1116.3 523.4h.01M1116.9 522.0h.01M1117.5 512.8h.01M1118.0 497.3h.01M1118.6 498.5h.01M1118.8 502.8h.01M1119.0 492.7h.01M1119.6 503.7h.01M1120.7 500.6h.01M1121.8 500.2h.01M1121.8 506.6h.01M1122.7 510.5h.01M1122.7 511.7h.01M1122.8 520.0h.01M1123.3 518.8h.01M1123.7 520.3h.01M1123.8 514.6h.01M1124.3 503.3h.01M1124.4 504.2h.01M1124.9 502.8h.01M1125.3 523.0h.01M1125.6 510.5h.01M1126.2 508.1h.01M1126.3 503.8h.01M1126.5 503.3h.01M1127.0 499.9h.01M1127.3 514.3h.01M1128.1 512.0h.01M1128.7 523.5h.01M1129.0 531.2h.01M1129.5 513.2h.01M1129.5 528.1h.01M1130.0 530.5h.01M1130.4 529.3h.01M1130.6 516.3h.01M1131.3 512.6h.01M1131.4 505.3h.01M1131.6 512.3h.01M1131.8 523.9h.01M1132.0 517.7h.01M1133.1 512.4h.01M1133.5 509.5h.01M1133.6 517.5h.01M1134.7 535.5h.01M1135.4 519.9h.01M1135.5 531.5h.01M1135.6 524.6h.01M1135.8 532.3h.01M1136.5 520.5h.01M1136.9 521.3h.01M1137.2 527.2h.01M1137.5 526.4h.01M1137.7 526.2h.01M1137.7 517.8h.01M1138.9 524.4h.01M1139.2 519.9h.01M1140.1 510.7h.01M1140.2 516.8h.01M1140.3 507.6h.01M1140.4 494.8h.01M1141.4 518.7h.01M1141.4 532.5h.01M1141.5 533.0h.01M1141.9 518.3h.01M1142.8 519.0h.01M1143.2 529.2h.01M1144.5 506.4h.01M1144.7 495.4h.01M1145.0 514.1h.01M1145.6 527.7h.01M1145.7 489.8h.01M1146.5 521.5h.01M1146.5 514.9h.01M1147.2 515.2h.01M1147.3 519.7h.01M1147.3 522.6h.01M1147.4 517.0h.01M1148.5 516.1h.01M1149.6 539.3h.01M1149.6 506.5h.01M1150.8 489.7h.01M1151.0 492.4h.01M1151.1 495.8h.01M1152.0 504.8h.01M1152.4 490.7h.01M1152.5 499.9h.01M1153.0 505.2h.01M1153.0 504.5h.01M1153.5 495.7h.01M1153.6 495.2h.01M1153.8 494.6h.01M1154.1 495.5h.01M1155.6 476.5h.01M1155.9 503.2h.01M1156.3 506.1h.01M1156.6 503.1h.01M1156.8 499.7h.01M1157.1 501.7h.01M1157.2 506.6h.01M1157.4 505.2h.01M1157.4 494.7h.01M1158.5 507.0h.01M1158.5 480.2h.01M1159.5 506.3h.01M1160.1 518.8h.01M1161.1 514.0h.01M1161.5 493.4h.01M1161.6 489.8h.01M1161.9 490.2h.01M1162.2 510.7h.01M1162.4 497.1h.01M1162.9 517.2h.01M1163.6 508.1h.01M1164.3 512.0h.01M1164.5 501.2h.01M1164.6 512.6h.01M1165.6 490.4h.01M1166.2 491.2h.01M1166.4 516.2h.01M1166.5 501.9h.01M1166.9 489.9h.01M1167.0 520.1h.01M1167.2 512.2h.01M1168.8 517.5h.01M1168.8 502.8h.01M1169.2 491.9h.01M1169.6 501.6h.01M1169.6 507.4h.01M1170.1 524.0h.01M1170.6 518.9h.01M1170.7 523.4h.01M1170.9 525.1h.01M1171.1 520.2h.01M1173.1 518.7h.01M1173.2 515.2h.01M1173.9 531.4h.01M1174.1 536.4h.01M1174.2 540.9h.01M1174.5 523.5h.01M1174.5 519.3h.01M1175.0 534.4h.01M1175.1 532.8h.01M1175.1 514.6h.01M1175.4 512.3h.01M1176.9 511.3h.01M1177.9 523.5h.01M1178.1 534.9h.01M1178.8 526.8h.01M1179.1 537.3h.01M1179.2 513.2h.01M1179.5 532.3h.01M1179.9 512.0h.01M1180.0 509.8h.01M1180.6 536.9h.01M1180.7 539.6h.01M1180.8 538.6h.01M1181.6 541.5h.01M1182.5 514.0h.01M1182.5 531.2h.01M1182.6 528.1h.01M1182.9 526.7h.01M1183.0 529.0h.01M1184.4 532.5h.01M1184.9 521.9h.01M1185.0 528.0h.01M1185.6 509.3h.01M1185.7 526.3h.01M1186.1 523.6h.01M1186.3 521.1h.01M1186.4 530.8h.01M1186.6 520.4h.01M1186.9 506.8h.01M1187.0 535.4h.01M1188.5 518.8h.01M1189.0 521.0h.01M1189.5 524.8h.01M1190.3 530.6h.01M1190.5 515.5h.01M1190.8 529.8h.01M1191.6 504.4h.01M1192.4 505.2h.01M1193.1 523.0h.01M1193.2 522.8h.01M1193.3 500.2h.01M1193.9 501.9h.01M1194.2 514.5h.01M1194.4 514.8h.01M1194.7 515.2h.01M1196.4 520.6h.01M1197.1 531.1h.01M1197.6 516.6h.01M1197.7 514.8h.01M1198.1 508.2h.01M1198.4 503.1h.01M1199.1 510.7h.01M1199.6 504.5h.01M1199.6 513.0h.01M1199.7 515.8h.01M1199.7 516.1h.01M1199.9 502.6h.01M1200.4 519.0h.01M1200.8 509.2h.01M1201.1 507.5h.01M1201.6 508.5h.01M1202.6 509.0h.01M1203.6 508.6h.01M1204.5 513.8h.01M1204.5 517.3h.01M1204.7 510.3h.01M1204.8 512.2h.01M1204.8 514.0h.01M1204.8 513.8h.01M1205.4 516.8h.01M1205.5 533.4h.01M1205.7 529.4h.01M1205.8 533.4h.01M1206.3 534.6h.01M1206.8 523.8h.01M1207.6 532.2h.01M1208.5 532.0h.01M1208.6 533.3h.01M1208.8 528.5h.01M1209.2 525.4h.01M1209.8 522.3h.01M1210.3 535.3h.01M1210.4 533.6h.01M1211.5 531.2h.01M1211.6 537.7h.01M1212.0 538.0h.01M1212.3 522.7h.01M1213.2 523.0h.01M1213.4 527.7h.01M1213.4 536.9h.01M1213.9 522.3h.01M1214.2 531.4h.01M1214.3 534.4h.01M1215.1 526.8h.01M1215.4 519.7h.01M1215.6 515.3h.01M1215.6 503.3h.01M1216.2 506.3h.01M1216.4 511.3h.01M1216.9 519.0h.01M1217.3 514.5h.01M1217.9 518.2h.01M1219.8 518.7h.01M1219.9 508.7h.01M1220.0 512.9h.01M1220.5 493.0h.01M1221.0 490.3h.01M1221.1 489.1h.01M1222.1 507.9h.01M1222.2 513.1h.01M1222.6 509.3h.01M1222.9 485.8h.01M1223.6 496.3h.01M1223.8 500.6h.01M1224.0 501.2h.01M1224.1 499.8h.01M1224.6 497.6h.01M1225.1 506.0h.01M1225.5 504.8h.01M1226.4 481.3h.01M1226.4 474.3h.01M1226.6 490.5h.01M1226.7 488.3h.01M1227.0 490.2h.01M1227.9 498.9h.01M1228.0 508.1h.01M1228.8 494.6h.01M1229.4 497.3h.01M1229.5 494.1h.01M1230.3 503.1h.01M1230.8 507.1h.01M1230.8 516.5h.01M1231.4 516.8h.01M1231.8 510.0h.01M1231.9 486.0h.01M1232.0 514.4h.01M1232.2 515.8h.01M1232.4 508.1h.01M1233.6 489.5h.01M1234.0 489.5h.01M1234.5 493.0h.01M1235.1 499.8h.01M1235.1 503.0h.01M1235.6 491.0h.01M1235.7 489.3h.01M1235.8 514.4h.01M1237.1 495.4h.01M1237.3 496.1h.01M1238.3 500.8h.01M1238.7 514.6h.01M1239.2 513.9h.01M1239.4 503.5h.01M1239.7 505.3h.01M1241.7 509.9h.01M1242.0 506.1h.01M1242.2 509.3h.01M1242.4 487.6h.01M1242.5 497.5h.01M1242.6 490.3h.01M1243.0 493.0h.01M1243.1 484.1h.01M1243.5 495.7h.01M1243.7 494.7h.01M1244.3 500.2h.01M1244.8 512.5h.01M1245.1 494.0h.01M1245.6 513.3h.01M1245.7 504.9h.01M1245.9 503.6h.01M1246.2 498.2h.01M1246.8 495.8h.01M1247.3 484.3h.01M1247.5 490.7h.01M1248.3 491.5h.01M1248.6 493.2h.01M1248.8 490.1h.01M1249.4 489.4h.01M1250.5 490.8h.01M1251.7 489.8h.01M1251.7 489.7h.01M1251.8 487.9h.01M1252.2 498.0h.01M1252.6 481.1h.01M1253.0 482.4h.01M1253.2 477.1h.01M1253.4 475.3h.01M1253.8 489.2h.01M1254.2 486.1h.01M1254.3 484.6h.01M1255.5 479.0h.01M1256.1 485.2h.01M1256.7 473.4h.01M1256.7 475.4h.01M1256.8 476.8h.01M1257.1 481.5h.01M1257.2 478.5h.01M1258.2 483.5h.01M1258.5 467.6h.01M1258.7 467.7h.01M1259.0 465.7h.01M1259.4 493.4h.01M1260.7 481.5h.01M1261.4 474.2h.01M1261.9 466.9h.01M1262.1 466.2h.01M1262.3 481.6h.01M1262.4 468.4h.01M1264.0 479.7h.01M1264.1 472.1h.01M1264.2 469.1h.01M1264.3 471.1h.01M1264.4 475.8h.01M1264.7 471.1h.01M1265.0 471.4h.01M1265.2 469.8h.01M1265.2 473.0h.01M1265.2 470.2h.01M1265.3 467.3h.01M1265.4 476.7h.01M1265.8 474.8h.01M1266.1 479.9h.01M1266.7 475.3h.01M1268.6 477.0h.01M1268.6 479.5h.01M1269.2 479.3h.01M1270.8 471.8h.01M1271.0 470.9h.01M1271.2 470.3h.01M1271.5 471.2h.01M1271.5 467.4h.01M1271.6 473.6h.01M1272.4 474.2h.01M1272.4 473.8h.01M1274.1 466.3h.01M1274.3 463.6h.01M1274.4 463.8h.01M1275.0 466.8h.01M1275.3 471.9h.01M1275.4 470.0h.01M1275.7 471.7h.01M1275.8 472.1h.01M1276.0 474.3h.01M1276.5 478.7h.01M1276.6 467.1h.01M1277.3 477.7h.01M1278.6 481.5h.01M1278.6 484.6h.01M1278.8 480.3h.01M1278.9 482.5h.01M1280.1 478.1h.01M1280.5 472.6h.01M1280.5 471.0h.01M1282.0 469.1h.01M1282.3 468.8h.01M1283.0 478.3h.01M1283.3 476.5h.01M1283.6 475.3h.01M1284.1 478.8h.01M1284.1 467.2h.01M1284.2 475.3h.01M1284.9 463.7h.01M1285.0 483.2h.01M1285.1 477.3h.01M1286.5 479.6h.01M1286.8 481.4h.01M1287.3 482.7h.01M1287.3 476.9h.01M1288.1 478.0h.01M1288.6 469.5h.01M1288.9 489.6h.01M1289.4 487.8h.01M1289.6 490.1h.01M1290.0 487.1h.01M1290.6 471.7h.01M1291.1 483.9h.01M1291.9 484.7h.01M1292.0 474.0h.01M1292.6 471.0h.01M1293.0 489.4h.01M1293.2 488.7h.01M1293.8 481.7h.01M1294.4 485.1h.01M1294.4 479.2h.01M1294.6 478.5h.01M1294.8 474.3h.01M1296.3 476.7h.01M1296.4 470.8h.01M1296.9 469.3h.01M1297.9 472.9h.01M1297.9 474.7h.01M1298.2 466.8h.01M1298.4 476.1h.01M1298.5 465.2h.01M1298.6 474.9h.01M1299.1 466.2h.01M1299.2 466.9h.01M1299.8 465.4h.01M1300.0 466.8h.01M1300.1 472.5h.01M1300.1 468.4h.01M1300.5 465.2h.01M1301.6 465.8h.01M1301.7 467.8h.01M1302.2 468.9h.01M1302.4 473.4h.01M1303.5 474.0h.01M1303.6 466.2h.01M1304.4 463.9h.01M1304.8 463.4h.01M526.0 479.6h.01M745.0 573.0h.01M838.0 550.2h.01M922.0 573.0h.01M933.0 565.4h.01M970.0 520.6h.01M1136.0 551.1h.01M1209.0 550.2h.01M1279.6 541.6h.01M820.0 465.6h.01M820.6 475.1h.01M865.3 467.5h.01M865.3 475.1h.01M866.0 482.2h.01M275.0 623.6h.01M279.0 628.8h.01M707.0 481.5h.01M1242.0 527.3h.01M351.0 554.9h.01M890.0 535.8h.01" stroke="#000" stroke-width="3.44" stroke-linecap="round" fill="none"/>
<path d="M214.3 457.1h.01M222.5 457.1h.01M214.3 462.8h.01M222.5 465.4h.01M587.4 579.1h.01M616.4 581.1h.01M639.4 579.1h.01M581.4 602.0h.01M720.0 579.1h.01M1263.0 444.6h.01M1266.7 444.6h.01M1264.3 449.5h.01M1264.3 453.5h.01M1268.7 451.9h.01M1271.0 451.9h.01M1275.3 450.0h.01M1275.3 453.2h.01M1274.3 456.4h.01M1274.3 457.9h.01M1281.3 450.3h.01M1285.7 447.4h.01M1286.7 456.0h.01M1283.3 458.9h.01M1281.3 461.7h.01M1287.3 463.7h.01M1297.3 450.3h.01M1300.3 454.1h.01M1297.3 457.0h.01M1301.3 458.6h.01M1302.3 443.6h.01M1301.3 445.5h.01M1294.7 461.7h.01M1297.3 461.7h.01M1254.7 462.4h.01M1257.3 462.4h.01M1260.0 460.8h.01M1262.0 459.6h.01M1264.7 458.9h.01M1266.7 458.3h.01M1268.0 460.2h.01M1265.3 457.0h.01M1269.3 457.0h.01M1280.0 462.7h.01M1272.7 462.1h.01" stroke="#ffa500" stroke-width="3.44" stroke-linecap="round" fill="none"/>
<rect x="-94.6" y="499.1" width="1455.6" height="48.5" fill="#ff0000" fill-opacity="0.1" stroke="#ff0000" stroke-opacity="0.1" stroke-width="1"/>
<rect x="162.3" y="517" width="139.5" height="63.5" fill="#ffa500" fill-opacity="0.1" stroke="#ffa500" stroke-opacity="0.1" stroke-width="1"/>
<rect x="301.8" y="497.3" width="1002.9000000000001" height="45.4" fill="#ffa500" fill-opacity="0.1" stroke="#ffa500" stroke-opacity="0.1" stroke-width="1"/>
<line x1="105.4" y1="522.9" x2="1361" y2="522.9" stroke="#ff0000" stroke-width="2.08"/>
<line x1="162.3" y1="548.3" x2="301.8" y2="548.3" stroke="#ffa500" stroke-width="3.0"/>
<line x1="301.8" y1="519.3" x2="1304.7" y2="519.3" stroke="#ffa500" stroke-width="3.0"/>
<line x1="162.0" y1="666.3" x2="162.0" y2="380.6" stroke="#800080" stroke-width="2.08" stroke-dasharray="2.08 3.43"/>
<line x1="301.2" y1="666.3" x2="301.2" y2="380.6" stroke="#800080" stroke-width="2.08" stroke-dasharray="2.08 3.43"/>
<line x1="1302.9" y1="666.3" x2="1302.9" y2="380.6" stroke="#800080" stroke-width="2.08" stroke-dasharray="2.08 3.43"/>
</g>
<g font-size="14.58"><text x="209.94" y="657.00" textLength="8.14" lengthAdjust="spacingAndGlyphs">4</text><text x="218.74" y="657.00" textLength="7.85" lengthAdjust="spacingAndGlyphs">2</text><text x="227.74" y="657.00" textLength="7.78" lengthAdjust="spacingAndGlyphs">1</text><text x="236.46" y="657.00" textLength="8.14" lengthAdjust="spacingAndGlyphs">0</text><text x="245.47" y="657.00" textLength="7.82" lengthAdjust="spacingAndGlyphs">3</text></g>
<g font-size="14.58"><text x="779.94" y="637.00" textLength="8.14" lengthAdjust="spacingAndGlyphs">4</text><text x="788.74" y="637.00" textLength="7.85" lengthAdjust="spacingAndGlyphs">2</text><text x="797.62" y="637.00" textLength="8.14" lengthAdjust="spacingAndGlyphs">0</text><text x="806.28" y="637.00" textLength="8.41" lengthAdjust="spacingAndGlyphs">9</text><text x="815.11" y="637.00" textLength="8.41" lengthAdjust="spacingAndGlyphs">9</text></g>
<rect x="105.4" y="380.6" width="1380.1" height="285.69999999999993" fill="none" stroke="#000" stroke-width="1.11"/>
<path d="M162.30 666.30v4.86M374.30 666.30v4.86M586.30 666.30v4.86M798.40 666.30v4.86M1010.40 666.30v4.86M1222.40 666.30v4.86M1434.50 666.30v4.86" stroke="#000" stroke-width="1.11"/>
<g font-size="14.58"><text x="158.23" y="686.90" textLength="8.14" lengthAdjust="spacingAndGlyphs">0</text></g>
<g font-size="14.58"><text x="361.56" y="686.90" textLength="7.69" lengthAdjust="spacingAndGlyphs">5</text><text x="370.23" y="686.90" textLength="8.14" lengthAdjust="spacingAndGlyphs">0</text><text x="379.06" y="686.90" textLength="8.14" lengthAdjust="spacingAndGlyphs">0</text></g>
<g font-size="14.58"><text x="569.09" y="686.90" textLength="7.78" lengthAdjust="spacingAndGlyphs">1</text><text x="577.81" y="686.90" textLength="8.14" lengthAdjust="spacingAndGlyphs">0</text><text x="586.64" y="686.90" textLength="8.14" lengthAdjust="spacingAndGlyphs">0</text><text x="595.48" y="686.90" textLength="8.14" lengthAdjust="spacingAndGlyphs">0</text></g>
<g font-size="14.58"><text x="781.19" y="686.90" textLength="7.78" lengthAdjust="spacingAndGlyphs">1</text><text x="790.08" y="686.90" textLength="7.69" lengthAdjust="spacingAndGlyphs">5</text><text x="798.74" y="686.90" textLength="8.14" lengthAdjust="spacingAndGlyphs">0</text><text x="807.58" y="686.90" textLength="8.14" lengthAdjust="spacingAndGlyphs">0</text></g>
<g font-size="14.58"><text x="993.03" y="686.90" textLength="7.85" lengthAdjust="spacingAndGlyphs">2</text><text x="1001.91" y="686.90" textLength="8.14" lengthAdjust="spacingAndGlyphs">0</text><text x="1010.74" y="686.90" textLength="8.14" lengthAdjust="spacingAndGlyphs">0</text><text x="1019.58" y="686.90" textLength="8.14" lengthAdjust="spacingAndGlyphs">0</text></g>
<g font-size="14.58"><text x="1205.03" y="686.90" textLength="7.85" lengthAdjust="spacingAndGlyphs">2</text><text x="1214.08" y="686.90" textLength="7.69" lengthAdjust="spacingAndGlyphs">5</text><text x="1222.74" y="686.90" textLength="8.14" lengthAdjust="spacingAndGlyphs">0</text><text x="1231.58" y="686.90" textLength="8.14" lengthAdjust="spacingAndGlyphs">0</text></g>
<g font-size="14.58"><text x="1417.35" y="686.90" textLength="7.82" lengthAdjust="spacingAndGlyphs">3</text><text x="1426.01" y="686.90" textLength="8.14" lengthAdjust="spacingAndGlyphs">0</text><text x="1434.84" y="686.90" textLength="8.14" lengthAdjust="spacingAndGlyphs">0</text><text x="1443.68" y="686.90" textLength="8.14" lengthAdjust="spacingAndGlyphs">0</text></g>
<path d="M100.54 412.30h4.86M100.54 448.95h4.86M100.54 485.60h4.86M100.54 522.25h4.86M100.54 558.90h4.86M100.54 595.55h4.86M100.54 632.20h4.86" stroke="#000" stroke-width="1.11"/>
<g font-size="14.58"><text x="56.22" y="417.40" textLength="8.23" lengthAdjust="spacingAndGlyphs">8</text><text x="64.87" y="417.40" textLength="4.18" lengthAdjust="spacingAndGlyphs">.</text><text x="69.33" y="417.40" textLength="8.41" lengthAdjust="spacingAndGlyphs">9</text><text x="78.52" y="417.40" textLength="7.69" lengthAdjust="spacingAndGlyphs">5</text><text x="87.19" y="417.40" textLength="8.14" lengthAdjust="spacingAndGlyphs">0</text></g>
<g font-size="14.58"><text x="56.22" y="454.05" textLength="8.23" lengthAdjust="spacingAndGlyphs">8</text><text x="64.87" y="454.05" textLength="4.18" lengthAdjust="spacingAndGlyphs">.</text><text x="69.33" y="454.05" textLength="8.41" lengthAdjust="spacingAndGlyphs">9</text><text x="78.31" y="454.05" textLength="7.85" lengthAdjust="spacingAndGlyphs">2</text><text x="87.36" y="454.05" textLength="7.69" lengthAdjust="spacingAndGlyphs">5</text></g>
<g font-size="14.58"><text x="56.22" y="490.70" textLength="8.23" lengthAdjust="spacingAndGlyphs">8</text><text x="64.87" y="490.70" textLength="4.18" lengthAdjust="spacingAndGlyphs">.</text><text x="69.33" y="490.70" textLength="8.41" lengthAdjust="spacingAndGlyphs">9</text><text x="78.35" y="490.70" textLength="8.14" lengthAdjust="spacingAndGlyphs">0</text><text x="87.19" y="490.70" textLength="8.14" lengthAdjust="spacingAndGlyphs">0</text></g>
<g font-size="14.58"><text x="56.22" y="527.35" textLength="8.23" lengthAdjust="spacingAndGlyphs">8</text><text x="64.87" y="527.35" textLength="4.18" lengthAdjust="spacingAndGlyphs">.</text><text x="69.47" y="527.35" textLength="8.23" lengthAdjust="spacingAndGlyphs">8</text><text x="78.41" y="527.35" textLength="7.97" lengthAdjust="spacingAndGlyphs">7</text><text x="87.36" y="527.35" textLength="7.69" lengthAdjust="spacingAndGlyphs">5</text></g>
<g font-size="14.58"><text x="56.22" y="564.00" textLength="8.23" lengthAdjust="spacingAndGlyphs">8</text><text x="64.87" y="564.00" textLength="4.18" lengthAdjust="spacingAndGlyphs">.</text><text x="69.47" y="564.00" textLength="8.23" lengthAdjust="spacingAndGlyphs">8</text><text x="78.52" y="564.00" textLength="7.69" lengthAdjust="spacingAndGlyphs">5</text><text x="87.19" y="564.00" textLength="8.14" lengthAdjust="spacingAndGlyphs">0</text></g>
<g font-size="14.58"><text x="56.22" y="600.65" textLength="8.23" lengthAdjust="spacingAndGlyphs">8</text><text x="64.87" y="600.65" textLength="4.18" lengthAdjust="spacingAndGlyphs">.</text><text x="69.47" y="600.65" textLength="8.23" lengthAdjust="spacingAndGlyphs">8</text><text x="78.31" y="600.65" textLength="7.85" lengthAdjust="spacingAndGlyphs">2</text><text x="87.36" y="600.65" textLength="7.69" lengthAdjust="spacingAndGlyphs">5</text></g>
<g font-size="14.58"><text x="56.22" y="637.30" textLength="8.23" lengthAdjust="spacingAndGlyphs">8</text><text x="64.87" y="637.30" textLength="4.18" lengthAdjust="spacingAndGlyphs">.</text><text x="69.47" y="637.30" textLength="8.23" lengthAdjust="spacingAndGlyphs">8</text><text x="78.35" y="637.30" textLength="8.14" lengthAdjust="spacingAndGlyphs">0</text><text x="87.19" y="637.30" textLength="8.14" lengthAdjust="spacingAndGlyphs">0</text></g>
<rect x="1365.3" y="387.7" width="113.10000000000014" height="47.60000000000002" rx="2.8" fill="#fff" fill-opacity="0.8" stroke="#d5d5d5" stroke-width="1.11"/>
<line x1="1369" y1="399.4" x2="1399.7" y2="399.4" stroke="#ffa500" stroke-width="3.0"/>
<line x1="1369" y1="421.7" x2="1399.7" y2="421.7" stroke="#ff0000" stroke-width="2.08"/>
<g font-size="14.58"><text x="1410.21" y="404.30" textLength="13.18" lengthAdjust="spacingAndGlyphs">m</text><text x="1423.83" y="404.30" textLength="6.95" lengthAdjust="spacingAndGlyphs">a</text><text x="1432.17" y="404.30" textLength="8.40" lengthAdjust="spacingAndGlyphs">g</text></g>
<g font-size="11.10" font-style="italic"><text x="1439.85" y="406.20" textLength="7.86" lengthAdjust="spacingAndGlyphs">O</text><text x="1447.79" y="406.20" textLength="6.59" lengthAdjust="spacingAndGlyphs">B</text><text x="1454.45" y="406.20" textLength="6.31" lengthAdjust="spacingAndGlyphs">S</text><text x="1460.82" y="406.20" textLength="2.94" lengthAdjust="spacingAndGlyphs">I</text><text x="1463.85" y="406.20" textLength="7.58" lengthAdjust="spacingAndGlyphs">D</text></g>
<g font-size="14.58"><text x="1409.81" y="426.60" textLength="13.18" lengthAdjust="spacingAndGlyphs">m</text><text x="1423.43" y="426.60" textLength="6.95" lengthAdjust="spacingAndGlyphs">a</text><text x="1431.77" y="426.60" textLength="8.40" lengthAdjust="spacingAndGlyphs">g</text></g>
<rect x="1348.5" y="613.6" width="130.0" height="45.60000000000002" rx="2.8" fill="#fff" fill-opacity="0.8" stroke="#d5d5d5" stroke-width="1.11"/>
<path d="M1367.4 626.4h.01" stroke="#ffa500" stroke-width="3.44" stroke-linecap="round" fill="none"/>
<path d="M1367.4 647.4h.01" stroke="#000" stroke-width="3.44" stroke-linecap="round" fill="none"/>
<g font-size="14.58"><text x="1393.03" y="630.00" textLength="9.98" lengthAdjust="spacingAndGlyphs">H</text><text x="1403.60" y="630.00" textLength="3.15" lengthAdjust="spacingAndGlyphs">i</text><text x="1407.24" y="630.00" textLength="8.40" lengthAdjust="spacingAndGlyphs">g</text><text x="1416.14" y="630.00" textLength="8.39" lengthAdjust="spacingAndGlyphs">h</text><text x="1425.08" y="630.00" textLength="3.15" lengthAdjust="spacingAndGlyphs">l</text><text x="1428.94" y="630.00" textLength="3.15" lengthAdjust="spacingAndGlyphs">i</text><text x="1432.57" y="630.00" textLength="8.40" lengthAdjust="spacingAndGlyphs">g</text><text x="1441.47" y="630.00" textLength="8.39" lengthAdjust="spacingAndGlyphs">h</text><text x="1450.15" y="630.00" textLength="5.16" lengthAdjust="spacingAndGlyphs">t</text><text x="1455.64" y="630.00" textLength="8.34" lengthAdjust="spacingAndGlyphs">e</text><text x="1464.19" y="630.00" textLength="8.40" lengthAdjust="spacingAndGlyphs">d</text></g>
<g font-size="14.58"><text x="1392.93" y="651.00" textLength="10.68" lengthAdjust="spacingAndGlyphs">O</text><text x="1403.95" y="651.00" textLength="9.34" lengthAdjust="spacingAndGlyphs">K</text></g>
<g clip-path="url(#c3)">
<line x1="162.8" y1="763.4" x2="189.5" y2="763.4" stroke="#000" stroke-width="3" stroke-linecap="round"/>
<line x1="302.5" y1="763.4" x2="331.1" y2="763.4" stroke="#000" stroke-width="3" stroke-linecap="round"/>
<path d="M189.0 840.2h.01M190.0 840.2h.01M324.4 840.2h.01M325.2 840.2h.01M189.0 878.5h.01M190.0 878.5h.01" stroke="#000" stroke-width="2.60" stroke-linecap="round" fill="none"/>
<line x1="105.4" y1="763.4" x2="1485.5" y2="763.4" stroke="#b0b0b0" stroke-width="1.11" stroke-dasharray="1.11 1.83"/>
<line x1="105.4" y1="801.8" x2="1485.5" y2="801.8" stroke="#b0b0b0" stroke-width="1.11" stroke-dasharray="1.11 1.83"/>
<line x1="105.4" y1="840.1" x2="1485.5" y2="840.1" stroke="#b0b0b0" stroke-width="1.11" stroke-dasharray="1.11 1.83"/>
<line x1="105.4" y1="878.4" x2="1485.5" y2="878.4" stroke="#b0b0b0" stroke-width="1.11" stroke-dasharray="1.11 1.83"/>
<line x1="105.4" y1="916.6" x2="1485.5" y2="916.6" stroke="#b0b0b0" stroke-width="1.11" stroke-dasharray="1.11 1.83"/>
<line x1="162.0" y1="954.4" x2="162.0" y2="725.3" stroke="#800080" stroke-width="2.08" stroke-dasharray="2.08 3.43"/>
<line x1="301.2" y1="954.4" x2="301.2" y2="725.3" stroke="#800080" stroke-width="2.08" stroke-dasharray="2.08 3.43"/>
<line x1="1302.9" y1="954.4" x2="1302.9" y2="725.3" stroke="#800080" stroke-width="2.08" stroke-dasharray="2.08 3.43"/>
</g>
<path d="M105.4 725.3H1485.5V954.4M105.4 954.4V725.3" fill="none" stroke="#000" stroke-width="1.11"/>
<path d="M100.54 763.40h4.86M100.54 801.80h4.86M100.54 840.10h4.86M100.54 878.40h4.86M100.54 916.60h4.86" stroke="#000" stroke-width="1.11"/>
<g font-size="14.58"><text x="16.46" y="768.50" textLength="8.33" lengthAdjust="spacingAndGlyphs">n</text><text x="25.14" y="768.50" textLength="8.21" lengthAdjust="spacingAndGlyphs">o</text><text x="33.59" y="768.50" textLength="5.16" lengthAdjust="spacingAndGlyphs">t</text><text x="43.57" y="768.50" textLength="9.34" lengthAdjust="spacingAndGlyphs">K</text><text x="52.77" y="768.50" textLength="6.95" lengthAdjust="spacingAndGlyphs">a</text><text x="61.33" y="768.50" textLength="3.15" lengthAdjust="spacingAndGlyphs">l</text><text x="65.04" y="768.50" textLength="13.18" lengthAdjust="spacingAndGlyphs">m</text><text x="78.67" y="768.50" textLength="6.95" lengthAdjust="spacingAndGlyphs">a</text><text x="87.14" y="768.50" textLength="8.33" lengthAdjust="spacingAndGlyphs">n</text></g>
<g font-size="14.58"><text x="33.44" y="806.90" textLength="8.33" lengthAdjust="spacingAndGlyphs">n</text><text x="42.12" y="806.90" textLength="8.21" lengthAdjust="spacingAndGlyphs">o</text><text x="50.56" y="806.90" textLength="5.16" lengthAdjust="spacingAndGlyphs">t</text><text x="60.42" y="806.90" textLength="5.16" lengthAdjust="spacingAndGlyphs">t</text><text x="65.86" y="806.90" textLength="5.93" lengthAdjust="spacingAndGlyphs">r</text><text x="71.79" y="806.90" textLength="6.95" lengthAdjust="spacingAndGlyphs">a</text><text x="80.17" y="806.90" textLength="6.97" lengthAdjust="spacingAndGlyphs">c</text><text x="87.85" y="806.90" textLength="7.77" lengthAdjust="spacingAndGlyphs">k</text></g>
<g font-size="14.58"><text x="38.00" y="845.20" textLength="4.08" lengthAdjust="spacingAndGlyphs">I</text><text x="42.24" y="845.20" textLength="8.21" lengthAdjust="spacingAndGlyphs">o</text><text x="50.86" y="845.20" textLength="8.33" lengthAdjust="spacingAndGlyphs">n</text><text x="59.51" y="845.20" textLength="4.18" lengthAdjust="spacingAndGlyphs">.</text><text x="68.31" y="845.20" textLength="5.93" lengthAdjust="spacingAndGlyphs">r</text><text x="74.24" y="845.20" textLength="6.95" lengthAdjust="spacingAndGlyphs">a</text><text x="82.58" y="845.20" textLength="8.40" lengthAdjust="spacingAndGlyphs">d</text><text x="91.38" y="845.20" textLength="4.18" lengthAdjust="spacingAndGlyphs">.</text></g>
<g font-size="14.58"><text x="51.98" y="883.50" textLength="8.40" lengthAdjust="spacingAndGlyphs">d</text><text x="60.74" y="883.50" textLength="5.93" lengthAdjust="spacingAndGlyphs">r</text><text x="71.38" y="883.50" textLength="10.45" lengthAdjust="spacingAndGlyphs">&gt;</text><text x="87.36" y="883.50" textLength="7.69" lengthAdjust="spacingAndGlyphs">5</text></g>
<g font-size="14.58"><text x="14.91" y="921.70" textLength="10.68" lengthAdjust="spacingAndGlyphs">O</text><text x="25.97" y="921.70" textLength="9.00" lengthAdjust="spacingAndGlyphs">B</text><text x="35.60" y="921.70" textLength="8.26" lengthAdjust="spacingAndGlyphs">S</text><text x="48.74" y="921.70" textLength="8.33" lengthAdjust="spacingAndGlyphs">n</text><text x="57.43" y="921.70" textLength="8.21" lengthAdjust="spacingAndGlyphs">o</text><text x="65.87" y="921.70" textLength="5.16" lengthAdjust="spacingAndGlyphs">t</text><text x="75.77" y="921.70" textLength="10.68" lengthAdjust="spacingAndGlyphs">O</text><text x="86.79" y="921.70" textLength="9.34" lengthAdjust="spacingAndGlyphs">K</text></g>
<g clip-path="url(#c4)">
<path d="M189.5 1003.2h.01M190.0 1002.6h.01M190.4 1002.0h.01M190.9 1001.4h.01M191.4 1000.9h.01M191.9 1000.3h.01M192.3 999.7h.01M192.8 999.1h.01M193.3 998.6h.01M193.7 1003.6h.01M194.2 1003.5h.01M194.7 1003.3h.01M195.2 1003.2h.01M195.7 1003.1h.01M196.1 1003.0h.01M196.6 1002.8h.01M197.1 1002.7h.01M197.6 1002.6h.01M198.0 1002.5h.01M198.5 1002.3h.01M199.0 1002.2h.01M199.5 1002.1h.01M199.9 1002.0h.01M200.4 1001.9h.01M200.9 1001.7h.01M201.4 1004.5h.01M201.8 1004.7h.01M202.3 1004.9h.01M202.8 1005.1h.01M203.3 1005.3h.01M203.7 1005.5h.01M204.2 1005.7h.01M204.7 1005.8h.01M205.1 1006.0h.01M205.6 998.4h.01M206.1 999.3h.01M206.6 1000.2h.01M207.1 1001.1h.01M207.6 1002.0h.01M208.1 997.5h.01M208.6 998.1h.01M209.1 998.7h.01M209.5 999.4h.01M210.0 1000.0h.01M210.5 1000.6h.01M211.0 1001.2h.01M211.5 1001.9h.01M212.0 1002.5h.01M212.5 1003.1h.01M212.9 1003.8h.01M213.4 1004.4h.01M213.9 1005.0h.01M214.4 1005.6h.01M214.9 1006.3h.01M215.4 996.0h.01M215.9 996.1h.01M216.3 996.2h.01M216.8 996.2h.01M217.3 996.3h.01M217.8 996.3h.01M218.3 996.4h.01M218.7 996.5h.01M219.2 996.5h.01M219.7 996.6h.01M220.2 996.7h.01M220.7 996.7h.01M221.1 996.8h.01M221.6 996.3h.01M222.1 997.1h.01M222.5 997.8h.01M222.9 998.6h.01M223.4 999.4h.01M223.8 1000.2h.01M224.3 1000.7h.01M224.7 1001.2h.01M225.2 1001.7h.01M225.7 1002.2h.01M226.2 1002.8h.01M226.6 1003.3h.01M227.1 1003.8h.01M227.6 1004.3h.01M228.1 1004.8h.01M228.5 1005.4h.01M229.0 1005.5h.01M229.5 1005.6h.01M230.0 1005.7h.01M230.5 1005.8h.01M231.0 1005.9h.01M231.5 1006.0h.01M231.9 1006.1h.01M232.4 1006.2h.01M232.9 1006.3h.01M233.4 1006.4h.01M233.9 1006.5h.01M234.3 1006.3h.01M234.8 1006.0h.01M235.2 1005.7h.01M235.7 1005.5h.01M236.1 1005.2h.01M236.6 1004.9h.01M237.0 1004.7h.01M237.5 1004.4h.01M237.9 1004.1h.01M238.4 1003.9h.01M238.9 1003.7h.01M239.3 1003.6h.01M239.8 1003.4h.01M240.3 1003.3h.01M240.8 1003.1h.01M241.2 1003.0h.01M241.7 1002.8h.01M242.2 1002.7h.01M242.7 1002.6h.01M243.1 999.1h.01M243.6 999.8h.01M244.0 1000.4h.01M244.4 1001.1h.01M244.9 1001.8h.01M245.3 1002.4h.01M245.8 997.2h.01M246.2 998.4h.01M246.6 999.7h.01M247.1 1000.9h.01M247.5 1002.2h.01M247.9 1003.4h.01M248.4 1004.6h.01M248.8 1003.7h.01M249.3 1002.8h.01M249.7 1001.9h.01M250.2 1001.0h.01M250.6 1000.2h.01M251.0 999.3h.01M251.5 998.4h.01M251.9 997.5h.01M252.4 995.6h.01M252.9 995.7h.01M253.4 995.9h.01M253.8 996.0h.01M254.3 996.1h.01M254.8 996.2h.01M255.3 996.3h.01M255.8 996.4h.01M256.3 996.5h.01M256.8 996.6h.01M257.3 996.7h.01M257.8 996.9h.01M258.3 997.0h.01M258.8 997.1h.01M259.2 997.2h.01M259.7 999.0h.01M260.2 999.4h.01M260.7 999.9h.01M261.1 1000.3h.01M261.6 1000.7h.01M262.0 996.2h.01M262.5 996.8h.01M263.0 997.3h.01M263.5 997.9h.01M264.0 998.5h.01M264.5 999.1h.01M265.0 999.7h.01M265.5 1000.3h.01M266.0 1000.9h.01M266.5 1001.5h.01M267.0 1002.1h.01M267.5 1002.7h.01M268.0 1003.3h.01M268.5 1003.9h.01M269.0 1004.4h.01M269.5 1004.7h.01M270.0 1005.0h.01M270.5 1005.2h.01M271.0 1005.5h.01M271.4 1005.7h.01M271.9 1006.0h.01M272.4 1006.2h.01M272.9 1006.5h.01M273.4 1006.7h.01M273.9 1007.0h.01M274.4 1007.3h.01M274.8 995.9h.01M275.3 996.2h.01M275.8 996.5h.01M276.3 996.9h.01M276.8 997.2h.01M277.3 997.5h.01M277.8 997.8h.01M278.3 998.1h.01M278.8 998.4h.01M279.2 998.8h.01M279.7 999.1h.01M280.2 999.4h.01M280.7 1002.4h.01M281.2 1002.2h.01M281.7 1002.0h.01M282.2 1001.8h.01M282.7 1001.6h.01M283.2 1001.4h.01M283.7 1001.1h.01M284.2 1000.9h.01M284.7 1000.7h.01M285.2 1000.5h.01M285.7 1000.3h.01M286.2 1000.1h.01M286.7 999.8h.01M287.1 999.6h.01M287.6 999.4h.01M288.1 999.2h.01M288.6 999.0h.01M289.1 999.2h.01M289.6 999.5h.01M290.1 999.8h.01M290.5 1000.0h.01M291.0 1000.3h.01M291.5 1000.6h.01M292.0 1000.8h.01M292.5 1001.1h.01M292.9 1001.4h.01M293.4 1001.6h.01M293.9 1001.9h.01M294.4 1002.2h.01M294.9 1002.4h.01M295.3 1002.7h.01M295.8 1003.0h.01M296.3 1002.9h.01M296.7 1002.9h.01M297.2 1002.9h.01M297.7 1002.8h.01M298.1 1002.8h.01M298.6 1002.8h.01M299.1 1002.8h.01M299.5 1002.7h.01M300.0 1002.7h.01M300.5 1002.7h.01M300.9 1002.7h.01M301.4 1002.7h.01M301.8 1002.7h.01M332.0 1003.9h.01M332.5 1004.1h.01M332.9 1004.3h.01M333.4 1004.5h.01M333.9 1004.6h.01M334.4 1004.8h.01M334.8 1005.0h.01M335.3 1005.2h.01M335.8 1005.4h.01M336.2 1005.6h.01M336.7 1005.7h.01M337.2 1004.8h.01M337.7 1004.9h.01M338.2 1005.0h.01M338.6 1005.1h.01M339.1 1005.2h.01M339.6 1005.4h.01M340.1 1005.5h.01M340.6 1005.6h.01M341.1 1005.7h.01M341.6 1005.8h.01M342.1 1006.0h.01M342.6 1006.1h.01M343.0 1006.2h.01M343.5 1006.3h.01M344.0 1005.7h.01M344.5 1005.1h.01M345.0 1004.4h.01M345.4 1003.8h.01M345.9 1003.2h.01M346.4 1002.5h.01M346.9 1001.9h.01M347.4 1001.3h.01M347.8 1000.7h.01M348.3 1000.0h.01M348.8 999.4h.01M349.3 998.8h.01M349.7 998.1h.01M350.2 997.5h.01M350.7 1005.1h.01M351.1 1004.7h.01M351.6 1004.3h.01M352.0 1003.9h.01M352.5 1003.5h.01M352.9 1003.1h.01M353.4 1002.7h.01M353.8 1002.3h.01M354.3 1001.9h.01M354.7 1001.5h.01M355.2 1000.9h.01M355.7 1000.3h.01M356.2 999.7h.01M356.7 999.1h.01M357.2 998.5h.01M357.6 997.9h.01M358.1 997.3h.01M358.6 996.7h.01M359.1 996.1h.01M359.6 1007.2h.01M360.1 1005.1h.01M360.5 1003.1h.01M361.0 1001.0h.01M361.5 999.0h.01M361.9 1008.3h.01M362.4 1006.2h.01M362.8 1004.2h.01M363.3 1002.1h.01M363.7 1000.1h.01M364.2 998.0h.01M364.6 996.0h.01M365.1 996.5h.01M365.5 997.1h.01M366.0 997.7h.01M366.5 998.3h.01M366.9 998.8h.01M367.4 999.4h.01M367.9 1000.0h.01M368.3 1000.5h.01M368.8 1001.1h.01M369.3 1001.7h.01M369.7 1002.0h.01M370.2 1002.3h.01M370.7 1002.6h.01M371.2 1002.9h.01M371.6 1003.1h.01M372.1 1002.9h.01M372.6 1002.7h.01M373.1 1002.5h.01M373.6 1002.3h.01M374.1 1002.1h.01M374.6 1001.9h.01M375.1 1001.6h.01M375.6 1001.4h.01M376.1 1001.2h.01M376.5 1001.0h.01M377.0 1000.8h.01M377.5 1000.6h.01M378.0 1002.8h.01M378.5 1001.9h.01M378.9 1001.1h.01M379.4 1000.3h.01M379.8 999.5h.01M380.3 998.7h.01M380.7 997.8h.01M381.2 1000.7h.01M381.7 1000.3h.01M382.1 999.9h.01M382.6 999.6h.01M383.1 999.2h.01M383.6 998.8h.01M384.1 998.5h.01M384.6 998.1h.01M385.1 997.7h.01M385.6 997.3h.01M386.1 1006.6h.01M386.5 1005.9h.01M387.0 1005.2h.01M387.5 1004.5h.01M388.0 1003.8h.01M388.5 1003.2h.01M389.0 1002.5h.01M389.5 1001.8h.01M390.0 1001.1h.01M390.5 1000.4h.01M391.0 1000.6h.01M391.4 1000.8h.01M391.9 1000.9h.01M392.4 1001.1h.01M392.9 1001.3h.01M393.4 1001.5h.01M393.9 1001.7h.01M394.4 1001.8h.01M394.9 1002.0h.01M395.4 1002.2h.01M395.8 1002.4h.01M396.3 1002.6h.01M396.8 1002.7h.01M397.3 1002.9h.01M397.8 1003.1h.01M398.3 999.9h.01M398.8 1000.3h.01M399.3 1000.8h.01M399.8 1001.2h.01M400.3 1001.7h.01M400.8 1002.2h.01M401.3 1002.6h.01M401.7 1003.1h.01M402.2 1003.5h.01M402.7 1004.0h.01M403.2 1004.4h.01M403.7 1004.9h.01M404.2 1005.3h.01M404.7 1005.8h.01M405.2 1006.3h.01M405.7 1004.9h.01M406.2 1004.2h.01M406.7 1003.5h.01M407.2 1002.8h.01M407.7 1002.1h.01M408.2 1001.4h.01M408.7 1000.7h.01M409.2 1000.0h.01M409.7 999.3h.01M410.2 1005.1h.01M410.7 1005.2h.01M411.2 1005.2h.01M411.7 1005.3h.01M412.2 1005.3h.01M412.7 1005.4h.01M413.2 1005.4h.01M413.7 1005.5h.01M414.2 1005.5h.01M414.7 1005.6h.01M415.2 1005.6h.01M415.7 1005.7h.01M416.2 1005.7h.01M416.7 1005.8h.01M417.2 1005.8h.01M417.7 1005.9h.01M418.1 1004.6h.01M418.6 1003.3h.01M419.1 1002.0h.01M419.6 1000.8h.01M420.1 999.5h.01M420.5 999.8h.01M421.0 1000.1h.01M421.5 1000.4h.01M421.9 1000.7h.01M422.4 1001.0h.01M422.9 1001.3h.01M423.4 1000.3h.01M423.8 1000.7h.01M424.3 1001.0h.01M424.8 1001.4h.01M425.3 1001.7h.01M425.7 1002.0h.01M426.2 1002.4h.01M426.7 1002.7h.01M427.2 1003.1h.01M427.7 1003.4h.01M428.1 1003.7h.01M428.6 1004.1h.01M429.1 1004.4h.01M429.6 1004.7h.01M430.0 1005.1h.01M430.5 1005.4h.01M431.0 1005.4h.01M431.5 1005.3h.01M431.9 1005.3h.01M432.4 1005.2h.01M432.9 1005.2h.01M433.4 1005.1h.01M433.8 1005.0h.01M434.3 1005.0h.01M434.8 1004.9h.01M435.3 1004.9h.01M435.7 1004.8h.01M436.2 1004.8h.01M436.7 1004.7h.01M437.2 1004.7h.01M437.6 1004.6h.01M438.1 1006.3h.01M438.6 1006.0h.01M439.1 1005.7h.01M439.6 1005.3h.01M440.1 1005.0h.01M440.6 1004.7h.01M441.1 1004.4h.01M441.6 1004.1h.01M442.0 1003.8h.01M442.5 1003.5h.01M443.0 1003.2h.01M443.5 1002.9h.01M444.0 1002.6h.01M444.5 1002.3h.01M445.0 1002.0h.01M445.5 1001.6h.01M445.9 1001.2h.01M446.4 1000.8h.01M446.9 1000.4h.01M447.3 1000.1h.01M447.8 999.7h.01M448.3 999.3h.01M448.7 998.9h.01M449.2 998.5h.01M449.7 998.1h.01M450.2 997.7h.01M450.6 997.3h.01M451.1 997.5h.01M451.6 997.8h.01M452.0 998.0h.01M452.5 998.3h.01M453.0 998.5h.01M453.4 998.8h.01M453.9 999.0h.01M454.4 999.3h.01M454.8 999.5h.01M455.3 999.8h.01M455.8 1000.0h.01M456.2 1000.3h.01M456.7 1000.5h.01M457.2 1000.8h.01M457.6 1001.8h.01M458.1 1002.7h.01M458.6 1003.7h.01M459.0 1004.7h.01M459.5 1005.7h.01M459.9 1006.6h.01M460.4 1007.6h.01M460.9 1006.7h.01M461.4 1005.8h.01M461.9 1004.9h.01M462.4 1004.1h.01M462.8 1003.2h.01M463.3 1002.3h.01M463.8 1001.4h.01M464.3 1000.5h.01M464.8 999.6h.01M465.3 998.7h.01M465.8 997.8h.01M466.3 996.9h.01M466.8 996.0h.01M467.2 996.0h.01M467.7 995.9h.01M468.2 995.9h.01M468.7 995.8h.01M469.2 995.8h.01M469.6 995.7h.01M470.1 995.7h.01M470.6 995.6h.01M471.1 995.6h.01M471.6 995.5h.01M472.0 995.5h.01M472.5 995.5h.01M473.0 995.4h.01M473.5 995.4h.01M474.0 996.1h.01M474.5 996.8h.01M474.9 997.5h.01M475.4 998.2h.01M475.9 999.0h.01M476.4 999.7h.01M476.9 1000.4h.01M477.4 1001.1h.01M477.9 1001.8h.01M478.4 1002.6h.01M478.9 1003.3h.01M479.4 1004.0h.01M479.9 1004.7h.01M480.4 1006.2h.01M480.8 1004.8h.01M481.3 1003.4h.01M481.8 1002.0h.01M482.3 1000.6h.01M482.7 999.3h.01M483.2 1001.4h.01M483.7 1002.0h.01M484.2 1002.5h.01M484.7 1003.0h.01M485.2 1003.5h.01M485.7 1004.0h.01M486.2 1004.5h.01M486.7 1005.0h.01M487.2 1005.5h.01M487.7 1006.0h.01M488.2 1006.5h.01M488.7 1007.0h.01M489.1 1007.5h.01M489.6 1003.2h.01M490.1 1003.0h.01M490.6 1002.7h.01M491.1 1002.4h.01M491.6 1002.2h.01M492.1 1001.9h.01M492.6 1001.6h.01M493.1 1001.4h.01M493.5 1001.1h.01M494.0 1000.9h.01M494.5 1000.8h.01M495.0 1000.7h.01M495.5 1000.6h.01M496.0 1000.5h.01M496.5 1000.4h.01M497.0 1000.3h.01M497.4 1000.2h.01M497.9 1000.1h.01M498.4 1000.1h.01M498.9 1000.0h.01M499.4 999.9h.01M499.9 999.8h.01M500.4 999.5h.01M500.8 999.2h.01M501.3 998.9h.01M501.8 998.6h.01M502.3 998.3h.01M502.7 998.0h.01M503.2 997.7h.01M503.7 997.4h.01M504.2 997.1h.01M504.6 996.9h.01M505.1 996.6h.01M505.6 996.3h.01M506.1 996.0h.01M506.5 995.7h.01M507.0 997.6h.01M507.4 999.6h.01M507.9 1001.5h.01M508.3 1003.5h.01M508.7 1005.5h.01M509.1 1007.5h.01M509.6 1006.7h.01M510.1 1005.8h.01M510.6 1005.0h.01M511.1 1004.1h.01M511.6 1003.3h.01M512.0 1002.5h.01M512.5 1001.6h.01M513.0 1000.8h.01M513.5 1000.0h.01M514.0 999.1h.01M514.5 998.3h.01M515.0 997.4h.01M515.5 996.6h.01M515.9 995.7h.01M516.4 997.3h.01M516.9 998.9h.01M517.4 1000.5h.01M517.9 1002.1h.01M518.4 1003.7h.01M518.8 1005.3h.01M519.3 1005.5h.01M519.8 1005.6h.01M520.3 1005.8h.01M520.8 1006.0h.01M521.2 1006.1h.01M521.7 1006.3h.01M522.2 1006.4h.01M522.7 1006.6h.01M523.1 1006.7h.01M523.6 1006.9h.01M524.1 1007.0h.01M524.6 1007.2h.01M525.1 1007.3h.01M525.5 1007.5h.01M526.0 1007.6h.01M526.5 1007.0h.01M527.0 1006.3h.01M527.5 1005.7h.01M528.0 1005.0h.01M528.5 1004.3h.01M529.0 1003.7h.01M529.5 1003.0h.01M530.0 1002.3h.01M530.5 1001.7h.01M531.0 1001.0h.01M531.5 1000.4h.01M532.0 999.7h.01M532.5 999.0h.01M533.0 998.4h.01M533.5 997.7h.01M534.0 998.1h.01M534.4 998.6h.01M534.9 999.0h.01M535.4 999.4h.01M535.9 999.9h.01M536.4 1000.3h.01M536.9 1000.7h.01M537.4 1001.1h.01M537.9 1001.6h.01M538.4 1002.0h.01M538.9 1002.4h.01M539.4 1002.9h.01M539.9 1003.3h.01M540.4 1003.7h.01M540.9 998.0h.01M541.3 998.5h.01M541.8 998.9h.01M542.3 999.3h.01M542.8 999.8h.01M543.3 1000.2h.01M543.8 1000.6h.01M544.3 1001.1h.01M544.7 1001.5h.01M545.2 1002.0h.01M545.7 1002.4h.01M546.2 1002.8h.01M546.7 1003.3h.01M547.2 1003.7h.01M547.7 1003.4h.01M548.1 1003.0h.01M548.6 1002.7h.01M549.1 1002.4h.01M549.6 1002.1h.01M550.0 1001.7h.01M550.5 1001.4h.01M551.0 1001.1h.01M551.5 1000.7h.01M552.0 1000.4h.01M552.4 1000.5h.01M552.9 1000.6h.01M553.4 1000.7h.01M553.9 1000.9h.01M554.4 1001.0h.01M554.9 1001.1h.01M555.4 1001.2h.01M555.9 1001.3h.01M556.4 1001.4h.01M556.8 1001.5h.01M557.3 1001.6h.01M557.8 1001.7h.01M558.3 1001.9h.01M558.8 1002.0h.01M559.3 1002.1h.01M559.8 1002.2h.01M560.2 1002.1h.01M560.7 1002.0h.01M561.1 1001.9h.01M561.6 1001.8h.01M562.1 1001.8h.01M562.5 1001.7h.01M563.0 1001.6h.01M563.4 1001.5h.01M563.9 1008.1h.01M564.3 1006.6h.01M564.7 1005.2h.01M565.2 1003.7h.01M565.6 1002.2h.01M566.1 1000.8h.01M566.5 999.3h.01M566.9 996.9h.01M567.4 997.8h.01M567.9 998.7h.01M568.4 999.6h.01M568.9 1000.6h.01M569.3 1001.5h.01M569.8 1002.4h.01M570.3 1003.3h.01M570.8 1004.3h.01M571.3 1005.2h.01M571.8 1006.1h.01M572.2 1007.0h.01M572.7 1006.8h.01M573.1 1006.6h.01M573.6 1006.4h.01M574.0 1006.2h.01M574.5 1005.9h.01M575.0 1005.7h.01M575.4 1005.5h.01M575.9 1005.3h.01M576.3 1005.3h.01M576.8 1005.4h.01M577.3 1005.5h.01M577.8 1005.5h.01M578.3 1005.6h.01M578.8 1005.7h.01M579.3 1005.7h.01M579.7 1005.8h.01M580.2 1005.9h.01M580.7 1005.9h.01M581.2 1006.0h.01M581.7 1006.1h.01M582.2 1006.1h.01M582.7 1006.2h.01M583.2 1006.3h.01M583.6 999.7h.01M584.1 1000.0h.01M584.6 1000.2h.01M585.1 1000.4h.01M585.6 1000.6h.01M586.1 1000.9h.01M586.6 1001.1h.01M587.1 1001.3h.01M587.6 1001.5h.01M588.1 1001.7h.01M588.6 1002.0h.01M589.1 1002.2h.01M589.6 1002.4h.01M590.1 1002.3h.01M590.6 1002.2h.01M591.0 1002.0h.01M591.5 1001.9h.01M592.0 1001.8h.01M592.5 1001.7h.01M592.9 1001.5h.01M593.4 1001.4h.01M593.9 1001.3h.01M594.4 1001.2h.01M594.8 1001.0h.01M595.3 1000.9h.01M595.8 1000.8h.01M596.2 1000.7h.01M596.7 1000.7h.01M597.2 1000.8h.01M597.7 1000.9h.01M598.2 1001.0h.01M598.6 1001.0h.01M599.1 1001.1h.01M599.6 1001.2h.01M600.1 1001.3h.01M600.6 1001.3h.01M601.1 1001.4h.01M601.5 1001.5h.01M602.0 1001.6h.01M602.5 1006.0h.01M603.0 1005.8h.01M603.4 1005.7h.01M603.9 1005.6h.01M604.3 1005.5h.01M604.8 1005.4h.01M605.3 1004.7h.01M605.8 1004.0h.01M606.2 1003.3h.01M606.7 1002.6h.01M607.2 999.6h.01M607.6 999.8h.01M608.1 1000.0h.01M608.6 1000.2h.01M609.0 1000.3h.01M609.5 1000.5h.01M610.0 1000.7h.01M610.4 1000.8h.01M610.9 1001.0h.01M611.4 1001.2h.01M611.8 1001.3h.01M612.3 1001.5h.01M612.8 1001.7h.01M613.2 1001.8h.01M613.7 1001.2h.01M614.2 1000.6h.01M614.7 1000.0h.01M615.1 999.4h.01M615.6 998.8h.01M616.1 998.2h.01M616.6 997.6h.01M617.0 996.9h.01M617.5 996.3h.01M618.0 996.4h.01M618.5 996.5h.01M619.0 996.6h.01M619.5 996.7h.01M620.0 996.7h.01M620.5 996.8h.01M620.9 996.9h.01M621.4 997.0h.01M621.9 997.1h.01M622.4 997.1h.01M622.9 997.2h.01M623.4 997.3h.01M623.9 997.4h.01M624.4 997.5h.01M624.8 997.9h.01M625.3 998.3h.01M625.7 998.6h.01M626.2 999.0h.01M626.7 999.4h.01M627.1 999.8h.01M627.6 1001.4h.01M628.0 1001.8h.01M628.5 1002.2h.01M628.9 1002.6h.01M629.4 1002.9h.01M629.9 1003.3h.01M630.3 1003.7h.01M630.8 1004.0h.01M631.3 1004.4h.01M631.7 1004.8h.01M632.2 1005.2h.01M632.7 1004.8h.01M633.1 1004.5h.01M633.6 1004.2h.01M634.0 1003.9h.01M634.5 1003.6h.01M635.0 1003.2h.01M635.4 1002.9h.01M635.9 1002.6h.01M636.4 1002.3h.01M636.8 1002.0h.01M637.3 1001.6h.01M637.7 1001.0h.01M638.2 1000.5h.01M638.6 999.9h.01M639.0 999.3h.01M639.5 998.7h.01M640.0 998.4h.01M640.4 998.1h.01M640.9 997.9h.01M641.4 997.6h.01M641.8 997.3h.01M642.3 997.0h.01M642.8 996.8h.01M643.3 996.5h.01M643.7 996.2h.01M644.2 995.9h.01M644.7 995.6h.01M645.1 995.4h.01M645.6 995.4h.01M646.1 995.4h.01M646.5 995.4h.01M647.0 995.4h.01M647.5 995.4h.01M647.9 995.4h.01M648.4 995.4h.01M648.9 995.4h.01M649.3 995.4h.01M649.8 995.5h.01M650.3 995.5h.01M650.7 995.5h.01M651.2 995.5h.01M651.7 1008.2h.01M652.1 1006.8h.01M652.6 1005.4h.01M653.0 1004.1h.01M653.5 1002.7h.01M653.9 1001.3h.01M654.3 999.9h.01M654.8 998.6h.01M655.2 997.2h.01M655.7 1001.1h.01M656.2 1000.6h.01M656.7 1000.1h.01M657.2 999.6h.01M657.7 999.1h.01M658.2 998.6h.01M658.7 998.1h.01M659.2 998.2h.01M659.6 999.1h.01M660.1 1000.0h.01M660.6 1000.9h.01M661.0 1001.8h.01M661.5 1002.7h.01M661.9 1003.6h.01M662.4 1004.5h.01M662.9 1005.4h.01M663.3 1004.4h.01M663.8 1004.4h.01M664.3 1004.4h.01M664.8 1004.3h.01M665.3 1004.3h.01M665.8 1004.3h.01M666.3 1000.1h.01M666.8 999.8h.01M667.3 999.5h.01M667.7 999.3h.01M668.2 999.0h.01M668.7 998.7h.01M669.2 998.4h.01M669.7 998.1h.01M670.1 997.9h.01M670.6 997.6h.01M671.1 997.3h.01M671.6 997.0h.01M672.1 996.8h.01M672.5 996.5h.01M673.0 996.2h.01M673.5 995.9h.01M674.0 998.2h.01M674.4 1000.6h.01M674.9 1002.9h.01M675.3 1005.2h.01M675.8 1007.6h.01M676.3 1007.2h.01M676.8 1006.8h.01M677.3 1006.4h.01M677.8 1006.0h.01M678.3 1005.6h.01M678.8 1005.2h.01M679.3 1004.8h.01M679.8 1004.4h.01M680.3 1004.0h.01M680.8 1004.9h.01M681.3 1004.4h.01M681.8 1003.9h.01M682.2 1003.4h.01M682.7 1002.9h.01M683.2 1002.4h.01M683.7 1001.9h.01M684.2 1001.4h.01M684.7 1001.0h.01M685.2 1000.5h.01M685.7 1000.0h.01M686.2 1000.0h.01M686.7 1000.0h.01M687.2 1000.0h.01M687.6 1000.0h.01M688.1 1000.0h.01M688.6 1000.0h.01M689.1 1000.0h.01M689.6 1000.0h.01M690.1 1000.0h.01M690.5 1000.0h.01M691.0 1002.2h.01M691.4 1003.0h.01M691.9 1003.7h.01M692.3 1004.5h.01M692.7 1005.2h.01M693.1 1006.0h.01M693.6 1007.0h.01M694.0 1006.5h.01M694.4 1006.0h.01M694.8 1005.4h.01M695.2 1004.9h.01M695.7 1004.3h.01M696.1 1007.2h.01M696.6 1005.7h.01M697.0 1004.2h.01M697.5 1002.7h.01M698.0 1001.2h.01M698.4 999.7h.01M698.9 1002.2h.01M699.4 1002.0h.01M699.9 1001.8h.01M700.4 1001.6h.01M700.9 1001.3h.01M701.3 1001.1h.01M701.8 1000.9h.01M702.3 1000.7h.01M702.8 1000.5h.01M703.3 1000.3h.01M703.8 1000.1h.01M704.3 999.9h.01M704.8 999.7h.01M705.2 999.5h.01M705.7 999.0h.01M706.1 998.6h.01M706.6 998.1h.01M707.0 997.6h.01M707.5 997.2h.01M707.9 996.7h.01M708.4 996.8h.01M708.9 996.9h.01M709.4 997.1h.01M709.9 997.2h.01M710.4 997.3h.01M710.9 997.5h.01M711.4 997.6h.01M711.9 997.7h.01M712.4 997.8h.01M712.9 998.0h.01M713.4 998.1h.01M713.9 998.2h.01M714.4 998.4h.01M714.9 998.5h.01M715.3 998.6h.01M715.8 998.8h.01M716.3 999.1h.01M716.8 999.4h.01M717.2 999.7h.01M717.7 1000.0h.01M718.2 1000.4h.01M718.7 1000.7h.01M719.1 1001.0h.01M719.6 1001.3h.01M720.1 1001.6h.01M720.5 1002.0h.01M721.0 1002.3h.01M721.5 1002.6h.01M721.9 1002.9h.01M722.4 1003.2h.01M722.9 1003.6h.01M723.3 1002.7h.01M723.8 1001.9h.01M724.3 1001.0h.01M724.7 1000.2h.01M725.2 999.3h.01M725.7 998.4h.01M726.1 997.6h.01M726.6 996.7h.01M727.0 999.9h.01M727.5 1000.5h.01M728.0 1001.2h.01M728.5 1001.9h.01M729.0 1002.5h.01M729.5 1003.2h.01M730.0 1003.8h.01M730.4 1004.5h.01M730.9 1005.1h.01M731.4 1005.8h.01M731.9 1006.5h.01M732.4 1007.1h.01M732.9 1005.7h.01M733.4 1005.1h.01M733.9 1004.4h.01M734.4 1003.7h.01M734.8 1003.1h.01M735.3 1002.4h.01M735.8 1001.7h.01M736.3 1001.1h.01M736.8 1000.4h.01M737.3 1006.4h.01M737.7 1005.4h.01M738.2 1004.4h.01M738.6 1003.4h.01M739.0 1002.4h.01M739.5 1001.4h.01M740.0 1001.5h.01M740.5 1001.6h.01M741.0 1001.6h.01M741.5 1001.7h.01M742.0 1001.7h.01M742.5 1001.8h.01M743.0 1001.9h.01M743.4 1001.9h.01M743.9 1002.0h.01M744.4 1002.0h.01M744.9 1002.1h.01M745.4 1002.2h.01M745.9 1002.2h.01M746.4 1002.3h.01M746.9 1002.3h.01M747.4 1004.2h.01M747.9 1004.1h.01M748.4 1004.1h.01M748.8 1004.1h.01M749.3 1004.0h.01M749.8 1004.0h.01M750.2 1004.0h.01M750.7 1003.9h.01M751.2 1003.9h.01M751.6 1003.9h.01M752.1 1003.8h.01M752.6 1003.8h.01M753.0 1003.8h.01M753.5 1003.7h.01M754.0 1003.7h.01M754.5 1003.7h.01M754.9 1003.5h.01M755.4 1003.3h.01M755.8 1003.1h.01M756.3 1003.0h.01M756.8 1002.8h.01M757.2 1002.6h.01M757.7 1002.4h.01M758.1 1002.2h.01M758.6 1002.1h.01M759.1 1001.9h.01M759.5 1001.7h.01M760.0 1001.5h.01M760.5 1001.4h.01M761.0 1001.1h.01M761.4 1000.9h.01M761.9 1000.7h.01M762.4 1000.4h.01M762.9 1000.2h.01M763.4 1000.0h.01M763.9 999.8h.01M764.4 999.5h.01M764.9 999.3h.01M765.4 999.1h.01M765.9 998.8h.01M766.4 998.6h.01M766.9 998.4h.01M767.4 998.1h.01M767.9 997.9h.01M768.4 997.7h.01M768.9 997.7h.01M769.3 997.8h.01M769.8 997.8h.01M770.3 997.8h.01M770.8 997.9h.01M771.3 997.9h.01M771.8 997.9h.01M772.3 998.0h.01M772.7 998.0h.01M773.2 998.0h.01M773.7 998.1h.01M774.2 998.1h.01M774.7 998.1h.01M775.2 998.2h.01M775.7 998.2h.01M776.1 999.0h.01M776.6 999.8h.01M777.1 1000.6h.01M777.5 1001.5h.01M778.0 1002.3h.01M778.5 1003.1h.01M778.9 1003.9h.01M779.4 1004.7h.01M779.9 1005.5h.01M780.3 1006.3h.01M780.8 1006.4h.01M781.3 1006.4h.01M781.8 1006.5h.01M782.2 1006.5h.01M782.7 1006.5h.01M783.2 1006.6h.01M783.7 1006.6h.01M784.1 1006.7h.01M784.6 1006.7h.01M785.1 1006.7h.01M785.6 1006.8h.01M786.0 1006.8h.01M786.5 1006.9h.01M787.0 1006.9h.01M787.5 997.7h.01M787.9 998.6h.01M788.3 999.5h.01M788.7 1000.4h.01M789.1 1001.2h.01M789.5 1006.5h.01M790.0 1006.6h.01M790.5 1006.7h.01M791.0 1006.8h.01M791.5 1006.9h.01M792.0 1007.0h.01M792.5 1007.1h.01M793.0 1007.2h.01M793.4 1007.3h.01M793.9 1007.5h.01M794.4 1007.6h.01M794.9 1007.7h.01M795.4 1007.8h.01M795.9 1007.9h.01M796.4 1008.0h.01M796.9 1007.5h.01M797.4 1007.0h.01M797.9 1006.5h.01M798.4 1006.0h.01M798.9 1005.5h.01M799.4 1005.0h.01M799.9 1004.5h.01M800.4 1004.0h.01M800.9 1003.5h.01M801.4 1003.0h.01M801.9 1002.5h.01M802.4 1004.3h.01M802.9 1002.9h.01M803.4 1001.6h.01M803.8 1000.2h.01M804.3 998.8h.01M804.8 997.4h.01M805.3 998.0h.01M805.8 998.5h.01M806.2 999.1h.01M806.7 999.7h.01M807.2 1000.3h.01M807.6 1000.9h.01M808.1 1001.5h.01M808.6 1002.1h.01M809.0 1006.9h.01M809.5 1007.0h.01M810.0 1007.2h.01M810.4 1007.3h.01M810.9 1007.4h.01M811.4 1007.5h.01M811.8 1007.6h.01M812.3 995.7h.01M812.8 996.1h.01M813.3 996.6h.01M813.8 997.0h.01M814.3 997.4h.01M814.8 997.9h.01M815.3 998.3h.01M815.7 998.7h.01M816.2 999.1h.01M816.7 999.6h.01M817.2 1000.0h.01M817.7 1000.4h.01M818.2 1000.9h.01M818.7 1001.3h.01M819.2 1001.7h.01M819.7 1002.1h.01M820.1 1008.2h.01M820.6 1008.2h.01M821.1 1008.2h.01M821.6 1008.1h.01M822.1 1008.1h.01M822.6 1008.1h.01M823.1 1008.0h.01M823.6 1008.0h.01M824.1 1008.0h.01M824.6 1007.9h.01M825.1 1007.9h.01M825.6 1007.9h.01M826.1 1007.8h.01M826.6 1007.8h.01M827.1 1007.8h.01M827.5 1007.7h.01M828.0 1007.4h.01M828.5 1007.2h.01M829.0 1006.9h.01M829.4 1006.6h.01M829.9 1006.4h.01M830.4 1006.1h.01M830.8 1005.8h.01M831.3 1005.6h.01M831.8 1005.3h.01M832.3 1005.0h.01M832.7 1004.8h.01M833.2 1004.5h.01M833.7 1004.2h.01M834.1 1004.0h.01M834.6 1003.7h.01M835.1 1005.8h.01M835.6 1005.2h.01M836.1 1004.5h.01M836.6 1003.9h.01M837.1 1003.3h.01M837.5 1002.7h.01M838.0 1002.0h.01M838.5 1001.4h.01M839.0 1000.8h.01M839.5 1000.1h.01M840.0 999.5h.01M840.5 998.9h.01M840.9 999.5h.01M841.4 1000.1h.01M841.8 1000.8h.01M842.2 1001.4h.01M842.7 1002.0h.01M843.1 1002.7h.01M843.6 1002.7h.01M844.1 1002.7h.01M844.6 1002.8h.01M845.1 1002.8h.01M845.6 1002.8h.01M846.1 1002.8h.01M846.6 1002.9h.01M847.1 1002.9h.01M847.5 1003.2h.01M848.0 1003.4h.01M848.5 1003.7h.01M848.9 1004.0h.01M849.4 1004.2h.01M849.9 1004.5h.01M850.3 1004.8h.01M850.8 1005.1h.01M851.3 1005.3h.01M851.8 1005.6h.01M852.2 1005.9h.01M852.7 1006.1h.01M853.2 1000.9h.01M853.7 1001.1h.01M854.2 1001.4h.01M854.6 1001.7h.01M855.1 1002.0h.01M855.6 1002.3h.01M856.1 1002.6h.01M856.6 1002.9h.01M857.1 1003.2h.01M857.6 1003.5h.01M858.1 1003.7h.01M858.6 1004.0h.01M859.0 1004.3h.01M859.5 1004.6h.01M860.0 1004.9h.01M860.5 1005.0h.01M861.0 1005.0h.01M861.5 1005.1h.01M861.9 1005.2h.01M862.4 1005.3h.01M862.9 1005.3h.01M863.3 1005.4h.01M863.8 1005.5h.01M864.3 1005.5h.01M864.8 1005.6h.01M865.2 1005.7h.01M865.7 1005.8h.01M866.2 1005.8h.01M866.7 997.0h.01M867.1 997.5h.01M867.6 997.9h.01M868.0 998.4h.01M868.5 998.9h.01M868.9 999.3h.01M869.4 999.8h.01M869.8 1000.2h.01M870.3 1000.7h.01M870.7 1001.1h.01M871.2 1001.9h.01M871.6 1002.7h.01M872.1 1003.5h.01M872.6 1004.3h.01M873.0 1005.0h.01M873.5 1005.8h.01M873.9 1006.6h.01M874.4 1007.4h.01M874.9 996.3h.01M875.3 997.4h.01M875.8 998.5h.01M876.3 999.5h.01M876.8 1000.6h.01M877.2 1001.7h.01M877.7 1002.8h.01M878.2 1005.2h.01M878.6 1005.1h.01M879.1 1004.9h.01M879.6 1004.7h.01M880.0 1004.6h.01M880.5 1004.4h.01M881.0 1004.2h.01M881.4 1004.1h.01M881.9 1003.9h.01M882.4 1003.7h.01M882.8 1003.6h.01M883.3 1003.7h.01M883.8 1003.9h.01M884.3 1004.1h.01M884.8 1004.3h.01M885.3 1004.5h.01M885.8 1004.7h.01M886.3 1004.8h.01M886.8 1005.0h.01M887.3 1005.2h.01M887.8 1005.4h.01M888.3 1005.6h.01M888.8 1005.7h.01M889.3 1005.9h.01M889.8 1006.1h.01M890.3 1006.3h.01M890.8 1006.5h.01M891.3 1005.5h.01M891.7 1004.6h.01M892.2 1003.7h.01M892.7 1002.8h.01M893.1 1001.8h.01M893.6 1000.9h.01M894.1 1000.0h.01M894.6 999.0h.01M895.0 998.1h.01M895.5 1006.5h.01M896.0 1005.1h.01M896.4 1003.6h.01M896.9 1002.1h.01M897.4 1000.6h.01M897.9 999.2h.01M898.4 997.7h.01M898.8 1001.6h.01M899.3 1001.8h.01M899.8 1002.0h.01M900.3 1002.2h.01M900.8 1002.4h.01M901.3 1002.6h.01M901.8 1002.8h.01M902.3 1003.0h.01M902.7 1003.2h.01M903.2 1003.4h.01M903.7 1003.6h.01M904.2 1003.8h.01M904.7 1004.0h.01M905.2 1004.2h.01M905.7 1004.4h.01M906.2 1004.6h.01M906.6 1006.2h.01M907.1 1005.7h.01M907.6 1005.3h.01M908.0 1004.9h.01M908.5 1004.5h.01M909.0 1004.1h.01M909.4 1003.7h.01M909.9 1003.3h.01M910.4 1002.9h.01M910.8 1002.5h.01M911.3 1002.1h.01M911.8 1001.7h.01M912.2 1001.3h.01M912.7 1000.9h.01M913.2 1000.5h.01M913.7 1000.8h.01M914.1 1001.2h.01M914.6 1001.6h.01M915.1 1001.9h.01M915.6 1002.3h.01M916.1 1002.6h.01M916.6 1003.0h.01M917.1 1003.4h.01M917.6 1003.7h.01M918.0 1004.1h.01M918.5 1004.4h.01M919.0 1004.8h.01M919.5 1005.1h.01M920.0 1005.5h.01M920.5 1005.9h.01M921.0 1005.6h.01M921.5 1005.4h.01M922.0 1005.2h.01M922.5 1005.0h.01M923.0 1004.8h.01M923.5 1004.6h.01M923.9 1004.4h.01M924.4 1004.1h.01M924.9 1003.9h.01M925.4 1003.7h.01M925.9 1003.5h.01M926.4 1007.4h.01M926.9 1007.0h.01M927.4 1006.7h.01M927.9 1006.3h.01M928.4 1005.9h.01M928.9 1005.6h.01M929.3 1005.2h.01M929.8 1004.9h.01M930.3 1004.5h.01M930.8 1004.1h.01M931.3 1003.8h.01M931.8 1003.4h.01M932.2 1003.2h.01M932.7 1003.0h.01M933.2 1002.8h.01M933.7 1002.6h.01M934.1 1002.4h.01M934.6 1002.1h.01M935.1 1001.9h.01M935.5 1001.3h.01M935.9 1000.6h.01M936.3 1000.0h.01M936.8 999.3h.01M937.2 1006.3h.01M937.7 1006.4h.01M938.2 1006.4h.01M938.7 1006.5h.01M939.1 1006.6h.01M939.6 1006.7h.01M940.1 1006.7h.01M940.6 1006.8h.01M941.1 1006.9h.01M941.6 1007.0h.01M942.0 1007.0h.01M942.5 1007.1h.01M943.0 1007.2h.01M943.5 1007.3h.01M944.0 1006.5h.01M944.4 1005.7h.01M944.9 1004.9h.01M945.4 1004.0h.01M945.9 1003.2h.01M946.3 1002.4h.01M946.8 1001.6h.01M947.3 1000.8h.01M947.8 1000.0h.01M948.2 999.2h.01M948.7 998.4h.01M949.2 997.6h.01M949.7 996.8h.01M950.1 1004.0h.01M950.6 1003.6h.01M951.1 1003.1h.01M951.5 1002.6h.01M952.0 1002.2h.01M952.5 1001.7h.01M952.9 1001.3h.01M953.4 1000.8h.01M953.9 1000.4h.01M954.4 999.9h.01M954.8 999.5h.01M955.3 999.0h.01M955.8 998.6h.01M956.2 998.1h.01M956.7 997.6h.01M957.2 997.2h.01M957.6 996.7h.01M958.1 997.1h.01M958.6 997.4h.01M959.1 997.8h.01M959.6 998.2h.01M960.1 998.6h.01M960.6 999.0h.01M961.1 999.3h.01M961.6 999.7h.01M962.1 1000.1h.01M962.6 1000.5h.01M963.1 1000.9h.01M963.6 1001.2h.01M964.1 1001.6h.01M964.6 1002.0h.01M965.1 1002.4h.01M965.5 1002.2h.01M966.0 1002.0h.01M966.5 1001.8h.01M966.9 1001.6h.01M967.4 1001.4h.01M967.9 1001.2h.01M968.4 1001.0h.01M968.8 1000.8h.01M969.3 1000.6h.01M969.8 1000.4h.01M970.3 1000.2h.01M970.7 1000.0h.01M971.2 999.8h.01M971.6 1000.5h.01M972.1 1001.1h.01M972.5 1001.8h.01M973.0 1002.5h.01M973.4 1003.2h.01M973.9 1003.8h.01M974.3 1004.5h.01M974.8 1005.2h.01M975.2 1005.0h.01M975.7 1003.9h.01M976.1 1002.7h.01M976.6 1001.6h.01M977.1 1000.4h.01M977.5 999.3h.01M978.0 998.1h.01M978.5 1005.7h.01M978.9 1005.3h.01M979.4 1004.9h.01M979.9 1004.5h.01M980.4 1004.2h.01M980.9 1003.8h.01M981.3 1003.4h.01M981.8 1003.0h.01M982.3 1002.6h.01M982.8 1002.3h.01M983.3 1001.9h.01M983.8 1001.5h.01M984.2 1001.1h.01M984.7 1000.8h.01M985.2 1000.4h.01M985.7 1000.0h.01M986.2 999.7h.01M986.6 999.4h.01M987.1 999.1h.01M987.6 998.8h.01M988.1 998.5h.01M988.6 998.2h.01M989.0 997.9h.01M989.5 997.6h.01M990.0 997.3h.01M990.5 996.9h.01M991.0 996.6h.01M991.4 1005.0h.01M991.9 1004.3h.01M992.4 1003.5h.01M992.9 1002.7h.01M993.4 1002.0h.01M993.9 1001.2h.01M994.4 1000.4h.01M994.9 999.7h.01M995.4 998.9h.01M995.9 998.1h.01M996.4 997.4h.01M996.9 996.6h.01M997.4 1001.8h.01M997.8 1002.3h.01M998.3 1002.8h.01M998.7 1003.2h.01M999.2 1003.7h.01M999.6 1004.2h.01M1000.1 1004.7h.01M1000.5 1005.2h.01M1001.0 997.9h.01M1001.5 998.2h.01M1001.9 998.5h.01M1002.4 998.9h.01M1002.9 999.2h.01M1003.4 999.5h.01M1003.8 999.9h.01M1004.3 1000.2h.01M1004.8 1000.5h.01M1005.3 1000.9h.01M1005.7 1001.2h.01M1006.2 1001.5h.01M1006.7 1001.9h.01M1007.2 1002.2h.01M1007.6 1002.6h.01M1008.1 1002.9h.01M1008.6 1003.3h.01M1009.0 1003.6h.01M1009.5 1004.0h.01M1010.0 1004.3h.01M1010.4 1004.7h.01M1010.9 1005.0h.01M1011.4 1005.4h.01M1011.8 1005.7h.01M1012.3 1006.1h.01M1012.8 1006.4h.01M1013.2 1006.8h.01M1013.7 995.8h.01M1014.1 998.2h.01M1014.5 1000.6h.01M1015.0 1003.0h.01M1015.4 1005.4h.01M1015.8 995.8h.01M1016.3 996.1h.01M1016.8 996.3h.01M1017.2 996.6h.01M1017.7 996.9h.01M1018.2 997.2h.01M1018.7 997.5h.01M1019.2 997.8h.01M1019.7 1005.7h.01M1020.1 1004.7h.01M1020.6 1003.7h.01M1021.0 1002.7h.01M1021.5 1001.6h.01M1021.9 1000.6h.01M1022.4 999.6h.01M1022.9 998.6h.01M1023.3 998.9h.01M1023.8 999.2h.01M1024.3 999.5h.01M1024.7 999.8h.01M1025.2 1000.1h.01M1025.7 1000.5h.01M1026.1 1000.8h.01M1026.6 1001.1h.01M1027.1 1001.4h.01M1027.6 1001.7h.01M1028.0 1002.0h.01M1028.5 1002.3h.01M1029.0 1002.6h.01M1029.4 1002.9h.01M1029.9 1003.2h.01M1030.4 1005.8h.01M1030.8 1004.5h.01M1031.3 1003.2h.01M1031.8 1002.0h.01M1032.2 1000.7h.01M1032.7 999.4h.01M1033.1 998.1h.01M1033.6 996.8h.01M1034.0 997.4h.01M1034.5 997.2h.01M1035.0 996.9h.01M1035.5 996.7h.01M1036.0 996.4h.01M1036.5 996.2h.01M1037.0 996.0h.01M1037.5 995.7h.01M1038.0 995.5h.01M1038.5 996.5h.01M1038.9 997.5h.01M1039.4 998.5h.01M1039.8 999.5h.01M1040.3 1000.5h.01M1040.7 1001.5h.01M1041.2 1002.5h.01M1041.7 1003.5h.01M1042.1 1004.5h.01M1042.6 1005.5h.01M1043.0 1004.9h.01M1043.5 1004.4h.01M1044.0 1003.8h.01M1044.5 1003.3h.01M1045.0 1002.7h.01M1045.5 1002.2h.01M1045.9 1001.6h.01M1046.4 1001.1h.01M1046.9 1000.6h.01M1047.4 1000.0h.01M1047.9 999.5h.01M1048.3 1003.6h.01M1048.8 1002.8h.01M1049.3 1002.0h.01M1049.7 1001.2h.01M1050.2 1000.4h.01M1050.7 999.7h.01M1051.1 998.9h.01M1051.6 1006.0h.01M1052.1 1005.1h.01M1052.6 1004.1h.01M1053.1 1003.1h.01M1053.6 1002.2h.01M1054.1 1001.2h.01M1054.6 1000.2h.01M1055.1 999.3h.01M1055.6 998.3h.01M1056.1 997.3h.01M1056.6 995.8h.01M1057.0 996.4h.01M1057.5 997.0h.01M1057.9 997.6h.01M1058.4 998.2h.01M1058.8 998.8h.01M1059.3 999.4h.01M1059.7 1000.0h.01M1060.2 1000.6h.01M1060.6 1003.1h.01M1061.1 1003.2h.01M1061.5 1003.3h.01M1062.0 1003.3h.01M1062.5 1003.4h.01M1062.9 1003.5h.01M1063.4 1003.5h.01M1063.9 1003.6h.01M1064.3 1003.7h.01M1064.8 1003.8h.01M1065.2 1003.8h.01M1065.7 1003.9h.01M1066.2 1004.0h.01M1066.6 1005.0h.01M1067.1 1004.9h.01M1067.6 1004.8h.01M1068.1 1004.6h.01M1068.5 1004.5h.01M1069.0 1004.4h.01M1069.5 1004.2h.01M1069.9 1003.6h.01M1070.4 1003.1h.01M1070.9 1002.5h.01M1071.4 1001.9h.01M1071.9 996.4h.01M1072.3 998.4h.01M1072.7 1000.4h.01M1073.1 1002.5h.01M1073.5 1004.5h.01M1073.9 998.2h.01M1074.4 998.4h.01M1074.8 998.6h.01M1075.3 998.7h.01M1075.8 998.9h.01M1076.3 999.0h.01M1076.8 999.2h.01M1077.2 999.3h.01M1077.7 999.5h.01M1078.2 999.7h.01M1078.7 998.6h.01M1079.1 1000.5h.01M1079.5 1002.3h.01M1080.0 1004.2h.01M1080.4 1006.1h.01M1080.9 1004.6h.01M1081.3 1003.4h.01M1081.8 1002.1h.01M1082.3 1000.9h.01M1082.8 999.6h.01M1083.2 998.4h.01M1083.7 997.1h.01M1084.2 995.8h.01M1084.7 996.8h.01M1085.1 997.8h.01M1085.6 998.8h.01M1086.1 999.7h.01M1086.6 1000.7h.01M1087.0 1001.7h.01M1087.5 1002.6h.01M1088.0 1003.9h.01M1088.4 1003.7h.01M1088.8 1003.6h.01M1089.3 1003.5h.01M1089.7 1003.3h.01M1090.1 1003.2h.01M1090.6 1002.7h.01M1091.1 1002.3h.01M1091.6 1001.9h.01M1092.0 1001.4h.01M1092.5 1001.0h.01M1093.0 1000.6h.01M1093.5 1000.1h.01M1094.0 999.7h.01M1094.5 999.2h.01M1095.0 998.8h.01M1095.5 998.4h.01M1096.0 997.9h.01M1096.5 997.5h.01M1097.0 997.0h.01M1097.4 996.6h.01M1097.9 1001.7h.01M1098.4 1001.6h.01M1098.9 1001.5h.01M1099.4 1001.5h.01M1099.9 1001.4h.01M1100.3 1001.3h.01M1100.8 1001.3h.01M1101.3 1001.2h.01M1101.8 1001.1h.01M1102.2 1007.6h.01M1102.7 1007.4h.01M1103.2 1007.2h.01M1103.7 1007.0h.01M1104.2 1006.8h.01M1104.7 1006.6h.01M1105.2 1006.3h.01M1105.7 1006.1h.01M1106.1 1005.9h.01M1106.6 1005.7h.01M1107.1 1005.5h.01M1107.6 1005.2h.01M1108.1 1005.0h.01M1108.6 998.5h.01M1109.1 998.2h.01M1109.6 997.9h.01M1110.0 997.7h.01M1110.5 997.4h.01M1111.0 997.1h.01M1111.5 996.9h.01M1112.0 1007.0h.01M1112.4 1006.0h.01M1112.9 1005.0h.01M1113.4 1003.9h.01M1113.8 1002.9h.01M1114.3 1001.8h.01M1114.7 1000.8h.01M1115.2 999.7h.01M1115.6 998.7h.01M1116.1 998.7h.01M1116.6 998.8h.01M1117.1 998.9h.01M1117.6 998.9h.01M1118.1 999.0h.01M1118.6 999.0h.01M1119.1 999.1h.01M1119.6 999.1h.01M1120.1 999.2h.01M1120.6 999.2h.01M1121.1 999.3h.01M1121.6 999.3h.01M1122.1 999.4h.01M1122.6 999.4h.01M1123.0 999.5h.01M1123.5 999.5h.01M1124.0 999.6h.01M1124.4 999.6h.01M1124.9 999.7h.01M1125.4 999.7h.01M1125.8 999.7h.01M1126.3 999.8h.01M1126.7 999.8h.01M1127.2 999.9h.01M1127.7 999.9h.01M1128.1 1000.0h.01M1128.6 1000.0h.01M1129.1 999.4h.01M1129.5 998.9h.01M1130.0 998.3h.01M1130.4 997.7h.01M1130.9 997.2h.01M1131.3 1002.0h.01M1131.8 1002.6h.01M1132.3 1003.1h.01M1132.8 1003.7h.01M1133.3 1004.3h.01M1133.8 1004.9h.01M1134.3 1005.5h.01M1134.8 1006.1h.01M1135.3 1006.7h.01M1135.8 1007.3h.01M1136.2 1006.6h.01M1136.7 1005.9h.01M1137.2 1005.2h.01M1137.7 1004.5h.01M1138.1 1003.7h.01M1138.6 1003.0h.01M1139.1 1002.3h.01M1139.5 1001.6h.01M1140.0 1000.9h.01M1140.5 1000.2h.01M1141.0 999.5h.01M1141.4 998.8h.01M1141.9 998.1h.01M1142.4 997.4h.01M1142.9 1004.2h.01M1143.3 1003.9h.01M1143.8 1003.6h.01M1144.3 1003.3h.01M1144.8 1003.1h.01M1145.3 1002.8h.01M1145.8 1002.5h.01M1146.3 1002.2h.01M1146.8 1001.9h.01M1147.3 1001.6h.01M1147.8 1001.3h.01M1148.3 1001.1h.01M1148.8 1000.8h.01M1149.3 1000.5h.01M1149.8 1000.2h.01M1150.3 1004.2h.01M1150.8 1003.7h.01M1151.3 1003.2h.01M1151.8 1002.7h.01M1152.3 1002.1h.01M1152.8 1001.6h.01M1153.3 1001.1h.01M1153.7 1000.5h.01M1154.2 1000.0h.01M1154.7 999.5h.01M1155.2 999.0h.01M1155.7 998.4h.01M1156.2 997.9h.01M1156.7 997.4h.01M1157.2 996.8h.01M1157.7 997.0h.01M1158.2 997.1h.01M1158.6 997.2h.01M1159.1 997.4h.01M1159.6 997.5h.01M1160.1 997.6h.01M1160.6 997.7h.01M1161.1 997.9h.01M1161.5 998.0h.01M1162.0 998.1h.01M1162.5 998.3h.01M1163.0 998.4h.01M1163.5 998.5h.01M1164.0 1000.9h.01M1164.4 1001.7h.01M1164.9 1002.5h.01M1165.3 1003.3h.01M1165.8 1004.1h.01M1166.2 1004.9h.01M1166.7 1005.7h.01M1167.2 1006.5h.01M1167.6 1007.3h.01M1168.1 1008.1h.01M1168.5 1006.8h.01M1169.0 1005.6h.01M1169.5 1004.3h.01M1169.9 1003.1h.01M1170.4 1001.9h.01M1170.9 1000.6h.01M1171.3 999.4h.01M1171.8 998.1h.01M1172.2 996.9h.01M1172.7 1006.9h.01M1173.2 1007.0h.01M1173.7 1007.2h.01M1174.1 1007.4h.01M1174.6 1007.5h.01M1175.1 1007.7h.01M1175.6 1007.9h.01M1176.0 1003.4h.01M1176.5 1004.1h.01M1176.9 1004.7h.01M1177.3 1005.4h.01M1177.8 1006.1h.01M1178.2 1006.8h.01M1178.6 1007.4h.01M1179.1 998.3h.01M1179.5 998.9h.01M1180.0 999.6h.01M1180.4 1000.2h.01M1180.9 1000.9h.01M1181.4 1001.5h.01M1181.8 1002.2h.01M1182.3 1002.8h.01M1182.7 1003.5h.01M1183.2 1006.1h.01M1183.6 1005.3h.01M1184.1 1004.6h.01M1184.6 1003.8h.01M1185.0 1003.0h.01M1185.5 1002.2h.01M1185.9 1001.4h.01M1186.4 1000.6h.01M1186.9 1001.0h.01M1187.4 1001.4h.01M1187.9 1001.7h.01M1188.4 1002.1h.01M1188.9 1002.4h.01M1189.3 1002.8h.01M1189.8 1003.2h.01M1190.3 1003.5h.01M1190.8 1003.9h.01M1191.3 1004.3h.01M1191.8 1004.6h.01M1192.3 1005.0h.01M1192.8 1005.3h.01M1193.3 1005.7h.01M1193.8 1006.1h.01M1194.2 1004.0h.01M1194.7 1003.9h.01M1195.2 1003.9h.01M1195.7 1003.8h.01M1196.2 1003.8h.01M1196.7 1003.7h.01M1197.2 1003.7h.01M1197.7 1003.6h.01M1198.2 1003.6h.01M1198.6 1003.5h.01M1199.1 1003.5h.01M1199.6 1003.4h.01M1200.1 1003.4h.01M1200.6 1003.3h.01M1201.1 1003.4h.01M1201.5 1003.4h.01M1202.0 1003.4h.01M1202.5 1003.4h.01M1202.9 1003.4h.01M1203.4 1003.4h.01M1203.8 1003.4h.01M1204.3 1003.4h.01M1204.8 995.6h.01M1205.2 995.6h.01M1205.7 995.6h.01M1206.2 995.6h.01M1206.7 995.6h.01M1207.2 995.6h.01M1207.7 995.6h.01M1208.1 995.6h.01M1208.6 995.6h.01M1209.1 995.6h.01M1209.6 995.6h.01M1210.1 995.6h.01M1210.6 995.6h.01M1211.0 995.6h.01M1211.5 995.6h.01M1212.0 1007.4h.01M1212.5 1007.3h.01M1213.0 1007.2h.01M1213.5 1007.1h.01M1214.0 1006.9h.01M1214.5 1006.8h.01M1215.0 1006.7h.01M1215.5 1006.6h.01M1216.0 1006.5h.01M1216.5 1006.4h.01M1217.0 1006.3h.01M1217.5 1006.2h.01M1218.0 1006.0h.01M1218.5 1005.9h.01M1219.0 1003.1h.01M1219.5 1003.0h.01M1220.0 1002.9h.01M1220.5 1002.8h.01M1221.0 1002.7h.01M1221.5 1002.6h.01M1222.0 1002.5h.01M1222.4 1002.4h.01M1222.9 1002.2h.01M1223.4 1002.1h.01M1223.9 1002.0h.01M1224.4 1001.9h.01M1224.9 1001.8h.01M1225.4 1001.7h.01M1225.9 998.4h.01M1226.4 998.6h.01M1226.9 998.9h.01M1227.3 999.1h.01M1227.8 999.3h.01M1228.3 999.5h.01M1228.8 999.8h.01M1229.3 1000.0h.01M1229.7 1000.2h.01M1230.2 1000.4h.01M1230.7 1000.7h.01M1231.2 1000.9h.01M1231.7 1001.1h.01M1232.1 1001.3h.01M1232.6 1001.6h.01M1233.1 1001.8h.01M1233.6 996.0h.01M1234.0 996.7h.01M1234.5 997.5h.01M1235.0 998.2h.01M1235.5 999.0h.01M1236.0 999.7h.01M1236.4 1000.5h.01M1236.9 1001.2h.01M1237.4 1001.9h.01M1237.9 1002.7h.01M1238.4 1003.4h.01M1238.8 1004.2h.01M1239.3 1004.9h.01M1239.8 995.3h.01M1240.3 996.2h.01M1240.7 997.0h.01M1241.2 997.8h.01M1241.7 998.7h.01M1242.2 999.5h.01M1242.7 1000.4h.01M1243.2 1001.2h.01M1243.6 1002.0h.01M1244.1 1002.9h.01M1244.6 1003.7h.01M1245.1 1004.5h.01M1245.6 1005.4h.01M1246.0 1006.2h.01M1246.5 1007.1h.01M1247.0 1007.9h.01M1247.5 1007.0h.01M1247.9 1006.2h.01M1248.4 1005.3h.01M1248.9 1004.5h.01M1249.3 1003.6h.01M1249.8 1002.8h.01M1250.3 1001.9h.01M1250.8 1001.0h.01M1251.2 1000.2h.01M1251.7 999.3h.01M1252.2 998.5h.01M1252.6 997.6h.01M1253.1 997.5h.01M1253.6 997.5h.01M1254.1 997.4h.01M1254.5 997.3h.01M1255.0 997.2h.01M1255.5 997.1h.01M1256.0 997.1h.01M1256.5 997.0h.01M1256.9 996.9h.01M1257.4 996.8h.01M1257.9 996.7h.01M1258.4 996.7h.01M1258.8 996.6h.01M1259.3 996.5h.01M1259.7 996.4h.01M1260.1 996.4h.01M1260.6 996.3h.01M1261.0 996.2h.01M1261.5 1003.5h.01M1261.9 1003.1h.01M1262.4 1002.6h.01M1262.9 1002.1h.01M1263.4 1001.7h.01M1263.9 1001.2h.01M1264.4 1000.7h.01M1264.8 1000.3h.01M1265.3 999.8h.01M1265.8 999.3h.01M1266.3 998.9h.01M1266.8 998.4h.01M1267.3 1002.2h.01M1267.8 1002.2h.01M1268.2 1002.2h.01M1268.7 1002.1h.01M1269.2 1002.1h.01M1269.7 1002.1h.01M1270.2 1002.1h.01M1270.7 1002.1h.01M1271.2 1002.1h.01M1271.7 1002.1h.01M1272.2 1002.0h.01M1272.7 1002.0h.01M1273.2 1002.0h.01M1273.7 1002.0h.01M1274.2 1002.0h.01M1274.7 1002.0h.01M1275.2 1002.0h.01M1275.7 1001.1h.01M1276.1 1000.3h.01M1276.6 999.5h.01M1277.0 998.7h.01M1277.5 997.9h.01M1278.0 997.0h.01M1278.4 996.2h.01M1278.9 996.2h.01M1279.4 996.2h.01M1279.9 996.2h.01M1280.3 996.2h.01M1280.8 996.2h.01M1281.3 996.2h.01M1281.8 996.2h.01M1282.2 996.2h.01M1282.7 995.5h.01M1283.2 996.1h.01M1283.7 996.7h.01M1284.2 997.2h.01M1284.6 997.8h.01M1285.1 998.4h.01M1285.6 999.0h.01M1286.1 999.6h.01M1286.6 1000.1h.01M1287.0 1000.7h.01M1287.5 1001.3h.01M1288.0 1001.9h.01M1288.5 1002.4h.01M1289.0 998.8h.01M1289.5 998.6h.01M1290.0 998.3h.01M1290.4 998.1h.01M1290.9 997.8h.01M1291.4 1004.9h.01M1291.9 1004.3h.01M1292.4 1003.7h.01M1292.9 1003.0h.01M1293.3 1002.4h.01M1293.8 1001.8h.01M1294.3 996.2h.01M1294.8 997.2h.01M1295.3 998.1h.01M1295.8 999.1h.01M1296.3 1000.0h.01M1296.8 1000.9h.01M1297.3 1001.9h.01M1297.8 1002.8h.01M1298.3 1003.8h.01M1298.8 1004.7h.01M1299.3 1005.7h.01M1299.8 1006.6h.01M1300.3 1001.9h.01M1300.7 1002.3h.01M1301.2 1002.8h.01M1301.7 1003.2h.01M1302.2 1003.7h.01M1302.6 1004.1h.01M1303.1 1004.6h.01M1303.6 1005.0h.01M1304.1 1005.5h.01M1304.6 1005.9h.01" stroke="#000" stroke-width="3.30" stroke-linecap="round" fill="none"/>
<path d="M203.3 993.5h.01M298.7 992.3h.01M297.5 993.5h.01" stroke="#ff0000" stroke-width="3.44" stroke-linecap="round" fill="none"/>
<line x1="163.0" y1="957.4" x2="189.3" y2="957.4" stroke="#ff0000" stroke-width="4.6" stroke-linecap="round"/>
<line x1="303.0" y1="957.4" x2="331.0" y2="957.4" stroke="#ff0000" stroke-width="4.6" stroke-linecap="round"/>
<line x1="105.4" y1="957.3" x2="1485.5" y2="957.3" stroke="#b0b0b0" stroke-width="1.11" stroke-dasharray="1.11 1.83"/>
<line x1="105.4" y1="983.3" x2="1485.5" y2="983.3" stroke="#b0b0b0" stroke-width="1.11" stroke-dasharray="1.11 1.83"/>
<line x1="105.4" y1="1009.3" x2="1485.5" y2="1009.3" stroke="#b0b0b0" stroke-width="1.11" stroke-dasharray="1.11 1.83"/>
<line x1="162.0" y1="1011.3" x2="162.0" y2="954.4" stroke="#800080" stroke-width="2.08" stroke-dasharray="2.08 3.43"/>
<line x1="301.2" y1="1011.3" x2="301.2" y2="954.4" stroke="#800080" stroke-width="2.08" stroke-dasharray="2.08 3.43"/>
<line x1="1302.9" y1="1011.3" x2="1302.9" y2="954.4" stroke="#800080" stroke-width="2.08" stroke-dasharray="2.08 3.43"/>
</g>
<rect x="105.4" y="954.4" width="1380.1" height="56.89999999999998" fill="none" stroke="#000" stroke-width="1.11"/>
<path d="M162.30 1011.30v4.86M374.30 1011.30v4.86M586.30 1011.30v4.86M798.40 1011.30v4.86M1010.40 1011.30v4.86M1222.40 1011.30v4.86M1434.50 1011.30v4.86" stroke="#000" stroke-width="1.11"/>
<g font-size="14.58"><text x="158.23" y="1031.90" textLength="8.14" lengthAdjust="spacingAndGlyphs">0</text></g>
<g font-size="14.58"><text x="361.56" y="1031.90" textLength="7.69" lengthAdjust="spacingAndGlyphs">5</text><text x="370.23" y="1031.90" textLength="8.14" lengthAdjust="spacingAndGlyphs">0</text><text x="379.06" y="1031.90" textLength="8.14" lengthAdjust="spacingAndGlyphs">0</text></g>
<g font-size="14.58"><text x="569.09" y="1031.90" textLength="7.78" lengthAdjust="spacingAndGlyphs">1</text><text x="577.81" y="1031.90" textLength="8.14" lengthAdjust="spacingAndGlyphs">0</text><text x="586.64" y="1031.90" textLength="8.14" lengthAdjust="spacingAndGlyphs">0</text><text x="595.48" y="1031.90" textLength="8.14" lengthAdjust="spacingAndGlyphs">0</text></g>
<g font-size="14.58"><text x="781.19" y="1031.90" textLength="7.78" lengthAdjust="spacingAndGlyphs">1</text><text x="790.08" y="1031.90" textLength="7.69" lengthAdjust="spacingAndGlyphs">5</text><text x="798.74" y="1031.90" textLength="8.14" lengthAdjust="spacingAndGlyphs">0</text><text x="807.58" y="1031.90" textLength="8.14" lengthAdjust="spacingAndGlyphs">0</text></g>
<g font-size="14.58"><text x="993.03" y="1031.90" textLength="7.85" lengthAdjust="spacingAndGlyphs">2</text><text x="1001.91" y="1031.90" textLength="8.14" lengthAdjust="spacingAndGlyphs">0</text><text x="1010.74" y="1031.90" textLength="8.14" lengthAdjust="spacingAndGlyphs">0</text><text x="1019.58" y="1031.90" textLength="8.14" lengthAdjust="spacingAndGlyphs">0</text></g>
<g font-size="14.58"><text x="1205.03" y="1031.90" textLength="7.85" lengthAdjust="spacingAndGlyphs">2</text><text x="1214.08" y="1031.90" textLength="7.69" lengthAdjust="spacingAndGlyphs">5</text><text x="1222.74" y="1031.90" textLength="8.14" lengthAdjust="spacingAndGlyphs">0</text><text x="1231.58" y="1031.90" textLength="8.14" lengthAdjust="spacingAndGlyphs">0</text></g>
<g font-size="14.58"><text x="1417.35" y="1031.90" textLength="7.82" lengthAdjust="spacingAndGlyphs">3</text><text x="1426.01" y="1031.90" textLength="8.14" lengthAdjust="spacingAndGlyphs">0</text><text x="1434.84" y="1031.90" textLength="8.14" lengthAdjust="spacingAndGlyphs">0</text><text x="1443.68" y="1031.90" textLength="8.14" lengthAdjust="spacingAndGlyphs">0</text></g>
<path d="M100.54 957.30h4.86M100.54 983.30h4.86M100.54 1009.30h4.86M102.62 970.30h2.78M102.62 996.30h2.78" stroke="#000" stroke-width="1.11"/>
<g font-size="14.58"><text x="78.47" y="962.40" textLength="7.78" lengthAdjust="spacingAndGlyphs">1</text><text x="87.19" y="962.40" textLength="8.14" lengthAdjust="spacingAndGlyphs">0</text></g>
<g font-size="14.58"><text x="87.36" y="988.40" textLength="7.69" lengthAdjust="spacingAndGlyphs">5</text></g>
<g font-size="14.58"><text x="87.19" y="1014.40" textLength="8.14" lengthAdjust="spacingAndGlyphs">0</text></g>
<g transform="translate(69.2 983.6) rotate(-90)">
<text x="0" y="0" font-size="14.58" text-anchor="middle" textLength="14.53" lengthAdjust="spacingAndGlyphs">dr</text>
</g>
</svg></body></html>
